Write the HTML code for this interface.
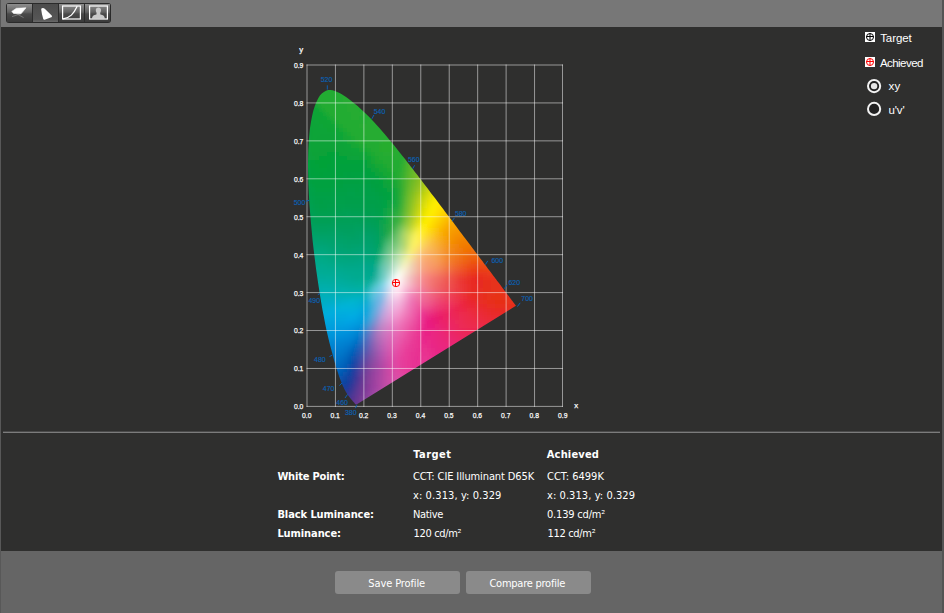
<!DOCTYPE html>
<html><head><meta charset="utf-8"><title>Calibration result</title>
<style>
html,body{margin:0;padding:0}
body{width:944px;height:613px;overflow:hidden;background:#2f2f2e;position:relative;font-family:"Liberation Sans",sans-serif}
.a{position:absolute}
.top{left:0;top:0;width:944px;height:27px;background:#777}
.bot{left:0;top:551px;width:944px;height:62px;background:#656565}
.lb{left:0;top:0;width:1px;height:613px;background:#585858}
.rb{left:942px;top:0;width:2px;height:613px;background:#545454}
.sep{left:3px;top:431px;width:937px;height:1px;background:#4a4a4a}
.sep2{left:3px;top:432px;width:937px;height:1px;background:#7c7c7c}
.t{position:absolute;white-space:pre;color:#fff;line-height:1;transform-origin:0 0}
.tb{font-family:"DejaVu Sans Condensed","Liberation Sans",sans-serif;font-size:11px}
.sg{font-family:"Liberation Sans",sans-serif;font-size:11.5px}
.b{font-weight:bold}
.btn{position:absolute;top:571px;height:23px;width:125px;background:#8a8a8a;border-radius:3px}
</style></head>
<body>
<div class="a top"></div><div class="a bot"></div>
<div class="a sep"></div><div class="a sep2"></div>
<svg class="tbar" width="120" height="27" viewBox="0 0 120 27" style="position:absolute;left:0;top:0">
<defs>
<linearGradient id="bg1" x1="0" y1="0" x2="0" y2="1"><stop offset="0" stop-color="#8e8e8e"/><stop offset=".45" stop-color="#626262"/><stop offset=".55" stop-color="#4a4a4a"/><stop offset="1" stop-color="#3a3a3a"/></linearGradient>
<linearGradient id="bg2" x1="0" y1="0" x2="0" y2="1"><stop offset="0" stop-color="#4c4c4c"/><stop offset=".85" stop-color="#565656"/><stop offset="1" stop-color="#6a6a6a"/></linearGradient>
<clipPath id="tbc"><rect x="6.5" y="3.5" width="104" height="19" rx="2.5"/></clipPath>
</defs>
<rect x="6" y="3" width="105" height="20" rx="3" fill="#2a2a2a"/>
<g clip-path="url(#tbc)">
<rect x="7" y="4" width="103" height="18" fill="url(#bg1)"/>
<rect x="33" y="4" width="26" height="18" fill="url(#bg2)"/>
<path d="M32.5 4V22M58.5 4V22M84.5 4V22" stroke="#2c2c2c" stroke-width="1"/>
</g>
<!-- icon 1: measuring device -->
<path d="M12 16.6L20 14M16.2 13.6L23.6 17.6" stroke="#8a8a8a" stroke-width=".7" fill="none"/>
<path d="M11.8 11.4L16.4 8.3L26 7.8L21 13.8L13.6 13.5Z" fill="#fff" stroke="#fff" stroke-width=".6" stroke-linejoin="round"/>
<!-- icon 2: gamut -->
<path d="M42.3 9.3Q43.2 8.9 44 9.6L50.9 16.3L44.3 18.7Q42.8 14 42.3 9.3Z" fill="#fff" stroke="#fff" stroke-width="2.2" stroke-linejoin="round"/>
<!-- icon 3: curve -->
<rect x="62.6" y="6" width="17.8" height="13" fill="none" stroke="#fff" stroke-width="1.2"/>
<path d="M63 18.8C70 18 73.5 14 77.2 6.2" fill="none" stroke="#fff" stroke-width="1.3"/>
<!-- icon 4: portrait -->
<path d="M92 18.6Q92 15 96.4 14.4L96.6 13Q95.6 11.6 95.8 9.6Q96.2 7.4 98.4 7.4Q100.6 7.4 101 9.6Q101.2 11.6 100.2 13L100.4 14.4Q104.8 15 104.8 18.6Z" fill="#c9c9c9"/>
<rect x="89.6" y="6" width="17.8" height="13" fill="none" stroke="#fff" stroke-width="1.2"/>
</svg>

<svg class="chart" width="944" height="613" viewBox="0 0 944 613" style="position:absolute;left:0;top:0">
<defs><clipPath id="lc"><path d="M356.5 404.5 L356.5 404.5 L356.5 404.5 L356.5 404.5 L356.5 404.5 L356.5 404.5 L356.5 404.5 L356.5 404.5 L356.5 404.5 L356.4 404.5 L356.4 404.5 L356.4 404.5 L356.4 404.5 L356.4 404.5 L356.4 404.5 L356.4 404.5 L356.4 404.5 L356.3 404.6 L356.3 404.6 L356.3 404.6 L356.3 404.6 L356.3 404.6 L356.3 404.6 L356.2 404.6 L356.2 404.6 L356.2 404.6 L356.2 404.6 L356.2 404.6 L356.1 404.6 L356.1 404.6 L356.1 404.6 L356.1 404.6 L356.0 404.6 L356.0 404.6 L356.0 404.6 L355.9 404.6 L355.9 404.6 L355.9 404.5 L355.8 404.5 L355.8 404.5 L355.7 404.5 L355.7 404.4 L355.6 404.4 L355.6 404.3 L355.5 404.3 L355.4 404.2 L355.4 404.1 L355.3 404.1 L355.2 404.0 L355.1 403.9 L355.0 403.8 L354.9 403.7 L354.8 403.6 L354.7 403.4 L354.6 403.3 L354.5 403.1 L354.3 403.0 L354.2 402.8 L354.1 402.6 L353.9 402.5 L353.8 402.3 L353.6 402.1 L353.4 401.9 L353.2 401.6 L353.0 401.4 L352.8 401.2 L352.6 400.9 L352.3 400.6 L352.1 400.3 L351.8 400.0 L351.5 399.7 L351.2 399.3 L350.9 399.0 L350.6 398.6 L350.3 398.2 L349.9 397.8 L349.6 397.3 L349.2 396.8 L348.8 396.3 L348.4 395.8 L348.0 395.1 L347.5 394.5 L347.1 393.8 L346.6 393.1 L346.1 392.2 L345.5 391.3 L345.0 390.2 L344.3 389.0 L343.7 387.6 L343.0 386.2 L342.3 384.5 L341.5 382.6 L340.8 380.7 L339.9 378.5 L339.1 376.2 L338.2 373.5 L337.2 370.5 L336.2 367.4 L335.2 363.9 L334.1 360.2 L333.0 356.1 L331.8 351.6 L330.5 346.8 L329.2 341.7 L327.9 336.2 L326.5 330.3 L325.2 323.9 L323.9 317.1 L322.5 309.9 L321.2 302.4 L319.9 294.5 L318.6 286.2 L317.3 277.4 L316.0 268.4 L314.8 259.1 L313.7 249.9 L312.6 240.5 L311.7 230.8 L310.8 221.1 L310.0 211.5 L309.3 202.2 L308.8 193.0 L308.4 183.9 L308.2 175.0 L308.0 166.3 L308.1 158.0 L308.3 150.1 L308.7 142.4 L309.3 135.0 L310.0 128.1 L311.0 121.8 L312.1 116.1 L313.3 110.8 L314.8 106.1 L316.4 101.9 L318.1 98.4 L319.9 95.6 L321.8 93.5 L323.9 91.9 L326.0 90.8 L328.1 90.1 L330.3 89.9 L332.6 90.3 L334.9 91.0 L337.2 92.0 L339.5 93.0 L341.8 94.2 L344.1 95.7 L346.4 97.3 L348.7 99.0 L351.0 100.7 L353.2 102.5 L355.4 104.2 L357.6 106.1 L359.7 108.0 L361.9 109.9 L364.0 111.9 L366.1 113.9 L368.2 116.0 L370.2 118.1 L372.3 120.3 L374.4 122.5 L376.4 124.7 L378.5 127.0 L380.5 129.3 L382.6 131.7 L384.6 134.0 L386.7 136.4 L388.7 138.9 L390.7 141.3 L392.8 143.8 L394.8 146.3 L396.8 148.8 L398.9 151.4 L400.9 153.9 L402.9 156.5 L405.0 159.1 L407.0 161.7 L409.0 164.3 L411.1 166.9 L413.1 169.5 L415.1 172.2 L417.2 174.8 L419.2 177.5 L421.2 180.1 L423.2 182.8 L425.3 185.4 L427.3 188.1 L429.3 190.7 L431.3 193.4 L433.3 196.0 L435.3 198.6 L437.3 201.3 L439.3 203.9 L441.2 206.5 L443.2 209.1 L445.1 211.7 L447.0 214.2 L449.0 216.8 L450.9 219.3 L452.8 221.8 L454.6 224.3 L456.5 226.8 L458.3 229.2 L460.1 231.7 L461.9 234.0 L463.7 236.4 L465.5 238.7 L467.2 241.0 L468.9 243.3 L470.6 245.5 L472.2 247.7 L473.8 249.8 L475.4 252.0 L477.0 254.0 L478.5 256.0 L479.9 257.9 L481.3 259.8 L482.7 261.6 L484.0 263.4 L485.3 265.1 L486.6 266.8 L487.8 268.5 L489.0 270.1 L490.2 271.6 L491.3 273.1 L492.4 274.5 L493.5 275.9 L494.5 277.2 L495.4 278.5 L496.4 279.7 L497.2 280.9 L498.1 282.0 L498.9 283.1 L499.7 284.1 L500.4 285.1 L501.1 286.1 L501.8 287.0 L502.5 287.9 L503.1 288.7 L503.7 289.5 L504.2 290.2 L504.8 290.9 L505.3 291.6 L505.8 292.2 L506.3 292.9 L506.7 293.5 L507.1 294.1 L507.5 294.6 L507.9 295.1 L508.3 295.6 L508.7 296.1 L509.1 296.6 L509.4 297.1 L509.7 297.5 L510.1 298.0 L510.4 298.4 L510.7 298.8 L511.0 299.1 L511.2 299.5 L511.5 299.9 L511.7 300.2 L512.0 300.5 L512.2 300.8 L512.4 301.1 L512.6 301.3 L512.8 301.6 L513.0 301.8 L513.2 302.1 L513.3 302.3 L513.5 302.5 L513.6 302.7 L513.8 302.9 L513.9 303.0 L514.0 303.2 L514.1 303.3 L514.2 303.5 L514.3 303.6 L514.4 303.8 L514.5 303.9 L514.6 304.0 L514.7 304.1 L514.8 304.2 L514.8 304.3 L514.9 304.3 L514.9 304.4 L515.0 304.5 L515.0 304.6 L515.1 304.6 L515.1 304.7 L515.2 304.7 L515.2 304.8 L515.3 304.9 L515.3 304.9 L515.3 305.0 L515.4 305.0 L515.4 305.1 L515.5 305.1 L515.5 305.2 L515.5 305.2 L515.6 305.3 L515.6 305.3 L515.7 305.4 L515.7 305.4 L515.7 305.5 L515.7 305.5 L515.8 305.5 L515.8 305.6 L515.8 305.6 L515.8 305.6 L515.9 305.7 L515.9 305.7 L515.9 305.7 L515.9 305.7 L515.9 305.7 L515.9 305.7 L515.9 305.7 L515.9 305.8 L515.9 305.8 L515.9 305.8 L515.9 305.8 Z"/></clipPath></defs>
<filter id="bl" filterUnits="userSpaceOnUse" x="295" y="76" width="234" height="342"><feGaussianBlur stdDeviation="2.0"/></filter>
<g clip-path="url(#lc)"><g filter="url(#bl)" shape-rendering="crispEdges">
<path fill="#24ac30" d="M311 80h4v4h-4z"/>
<path fill="#24ac30" d="M315 80h4v4h-4z"/>
<path fill="#24ac30" d="M319 80h4v4h-4z"/>
<path fill="#24ac30" d="M323 80h4v4h-4z"/>
<path fill="#24ac30" d="M327 80h4v4h-4z"/>
<path fill="#24ac30" d="M331 80h4v4h-4z"/>
<path fill="#24ac30" d="M335 80h4v4h-4z"/>
<path fill="#24ac30" d="M339 80h4v4h-4z"/>
<path fill="#24ac30" d="M343 80h4v4h-4z"/>
<path fill="#24ac30" d="M347 80h4v4h-4z"/>
<path fill="#24ac30" d="M307 84h4v4h-4z"/>
<path fill="#24ac30" d="M311 84h4v4h-4z"/>
<path fill="#24ac30" d="M315 84h4v4h-4z"/>
<path fill="#24ac30" d="M319 84h4v4h-4z"/>
<path fill="#24ac30" d="M323 84h4v4h-4z"/>
<path fill="#24ac30" d="M327 84h4v4h-4z"/>
<path fill="#24ac30" d="M331 84h4v4h-4z"/>
<path fill="#24ac30" d="M335 84h4v4h-4z"/>
<path fill="#24ac30" d="M339 84h4v4h-4z"/>
<path fill="#24ac30" d="M343 84h4v4h-4z"/>
<path fill="#24ac30" d="M347 84h4v4h-4z"/>
<path fill="#24ac30" d="M351 84h4v4h-4z"/>
<path fill="#24ac30" d="M307 88h4v4h-4z"/>
<path fill="#24ac30" d="M311 88h4v4h-4z"/>
<path fill="#24ac30" d="M315 88h4v4h-4z"/>
<path fill="#24ac30" d="M319 88h4v4h-4z"/>
<path fill="#24ac30" d="M323 88h4v4h-4z"/>
<path fill="#24ac30" d="M327 88h4v4h-4z"/>
<path fill="#24ac30" d="M331 88h4v4h-4z"/>
<path fill="#24ac30" d="M335 88h4v4h-4z"/>
<path fill="#24ac30" d="M339 88h4v4h-4z"/>
<path fill="#24ac30" d="M343 88h4v4h-4z"/>
<path fill="#24ac30" d="M347 88h4v4h-4z"/>
<path fill="#24ac30" d="M351 88h4v4h-4z"/>
<path fill="#24ac30" d="M355 88h4v4h-4z"/>
<path fill="#24ac30" d="M359 88h4v4h-4z"/>
<path fill="#15a635" d="M303 92h4v4h-4z"/>
<path fill="#24ac30" d="M307 92h4v4h-4z"/>
<path fill="#24ac30" d="M311 92h4v4h-4z"/>
<path fill="#24ac30" d="M315 92h4v4h-4z"/>
<path fill="#24ac30" d="M319 92h4v4h-4z"/>
<path fill="#24ac30" d="M323 92h4v4h-4z"/>
<path fill="#24ac30" d="M327 92h4v4h-4z"/>
<path fill="#24ac30" d="M331 92h4v4h-4z"/>
<path fill="#24ac30" d="M335 92h4v4h-4z"/>
<path fill="#24ac30" d="M339 92h4v4h-4z"/>
<path fill="#24ac30" d="M343 92h4v4h-4z"/>
<path fill="#24ac30" d="M347 92h4v4h-4z"/>
<path fill="#24ac30" d="M351 92h4v4h-4z"/>
<path fill="#24ac30" d="M355 92h4v4h-4z"/>
<path fill="#24ac30" d="M359 92h4v4h-4z"/>
<path fill="#24ac30" d="M363 92h4v4h-4z"/>
<path fill="#11a437" d="M303 96h4v4h-4z"/>
<path fill="#15a635" d="M307 96h4v4h-4z"/>
<path fill="#24ac30" d="M311 96h4v4h-4z"/>
<path fill="#24ac30" d="M315 96h4v4h-4z"/>
<path fill="#24ac30" d="M319 96h4v4h-4z"/>
<path fill="#24ac30" d="M323 96h4v4h-4z"/>
<path fill="#24ac30" d="M327 96h4v4h-4z"/>
<path fill="#24ac30" d="M331 96h4v4h-4z"/>
<path fill="#24ac30" d="M335 96h4v4h-4z"/>
<path fill="#24ac30" d="M339 96h4v4h-4z"/>
<path fill="#25ac30" d="M343 96h4v4h-4z"/>
<path fill="#25ac30" d="M347 96h4v4h-4z"/>
<path fill="#24ac30" d="M351 96h4v4h-4z"/>
<path fill="#24ac30" d="M355 96h4v4h-4z"/>
<path fill="#24ac30" d="M359 96h4v4h-4z"/>
<path fill="#24ac30" d="M363 96h4v4h-4z"/>
<path fill="#24ac30" d="M367 96h4v4h-4z"/>
<path fill="#10a438" d="M303 100h4v4h-4z"/>
<path fill="#11a436" d="M307 100h4v4h-4z"/>
<path fill="#15a634" d="M311 100h4v4h-4z"/>
<path fill="#23ac30" d="M315 100h4v4h-4z"/>
<path fill="#23ac30" d="M319 100h4v4h-4z"/>
<path fill="#23ac30" d="M323 100h4v4h-4z"/>
<path fill="#23ac30" d="M327 100h4v4h-4z"/>
<path fill="#24ac30" d="M331 100h4v4h-4z"/>
<path fill="#24ac30" d="M335 100h4v4h-4z"/>
<path fill="#24ac30" d="M339 100h4v4h-4z"/>
<path fill="#25ac30" d="M343 100h4v4h-4z"/>
<path fill="#25ac30" d="M347 100h4v4h-4z"/>
<path fill="#25ac30" d="M351 100h4v4h-4z"/>
<path fill="#24ac30" d="M355 100h4v4h-4z"/>
<path fill="#24ac30" d="M359 100h4v4h-4z"/>
<path fill="#24ac30" d="M363 100h4v4h-4z"/>
<path fill="#24ac30" d="M367 100h4v4h-4z"/>
<path fill="#24ac30" d="M371 100h4v4h-4z"/>
<path fill="#0fa438" d="M303 104h4v4h-4z"/>
<path fill="#10a437" d="M307 104h4v4h-4z"/>
<path fill="#11a536" d="M311 104h4v4h-4z"/>
<path fill="#15a634" d="M315 104h4v4h-4z"/>
<path fill="#22ac30" d="M319 104h4v4h-4z"/>
<path fill="#23ac30" d="M323 104h4v4h-4z"/>
<path fill="#23ac30" d="M327 104h4v4h-4z"/>
<path fill="#23ac30" d="M331 104h4v4h-4z"/>
<path fill="#24ac30" d="M335 104h4v4h-4z"/>
<path fill="#24ac30" d="M339 104h4v4h-4z"/>
<path fill="#24ac30" d="M343 104h4v4h-4z"/>
<path fill="#25ac30" d="M347 104h4v4h-4z"/>
<path fill="#25ac30" d="M351 104h4v4h-4z"/>
<path fill="#25ac30" d="M355 104h4v4h-4z"/>
<path fill="#24ac30" d="M359 104h4v4h-4z"/>
<path fill="#24ac30" d="M363 104h4v4h-4z"/>
<path fill="#24ac30" d="M367 104h4v4h-4z"/>
<path fill="#24ac30" d="M371 104h4v4h-4z"/>
<path fill="#23ac30" d="M375 104h4v4h-4z"/>
<path fill="#0da33b" d="M299 108h4v4h-4z"/>
<path fill="#0ea339" d="M303 108h4v4h-4z"/>
<path fill="#0fa438" d="M307 108h4v4h-4z"/>
<path fill="#10a536" d="M311 108h4v4h-4z"/>
<path fill="#11a535" d="M315 108h4v4h-4z"/>
<path fill="#15a734" d="M319 108h4v4h-4z"/>
<path fill="#22ac30" d="M323 108h4v4h-4z"/>
<path fill="#22ac31" d="M327 108h4v4h-4z"/>
<path fill="#22ac31" d="M331 108h4v4h-4z"/>
<path fill="#23ac30" d="M335 108h4v4h-4z"/>
<path fill="#24ac30" d="M339 108h4v4h-4z"/>
<path fill="#24ac30" d="M343 108h4v4h-4z"/>
<path fill="#25ac30" d="M347 108h4v4h-4z"/>
<path fill="#25ac30" d="M351 108h4v4h-4z"/>
<path fill="#25ac30" d="M355 108h4v4h-4z"/>
<path fill="#24ac30" d="M359 108h4v4h-4z"/>
<path fill="#24ac30" d="M363 108h4v4h-4z"/>
<path fill="#24ac30" d="M367 108h4v4h-4z"/>
<path fill="#24ac30" d="M371 108h4v4h-4z"/>
<path fill="#24ac30" d="M375 108h4v4h-4z"/>
<path fill="#23ac30" d="M379 108h4v4h-4z"/>
<path fill="#0ca33b" d="M299 112h4v4h-4z"/>
<path fill="#0da33a" d="M303 112h4v4h-4z"/>
<path fill="#0ea438" d="M307 112h4v4h-4z"/>
<path fill="#0fa537" d="M311 112h4v4h-4z"/>
<path fill="#10a536" d="M315 112h4v4h-4z"/>
<path fill="#11a535" d="M319 112h4v4h-4z"/>
<path fill="#15a734" d="M323 112h4v4h-4z"/>
<path fill="#21ac31" d="M327 112h4v4h-4z"/>
<path fill="#21ac31" d="M331 112h4v4h-4z"/>
<path fill="#22ac31" d="M335 112h4v4h-4z"/>
<path fill="#23ac31" d="M339 112h4v4h-4z"/>
<path fill="#24ac30" d="M343 112h4v4h-4z"/>
<path fill="#24ac30" d="M347 112h4v4h-4z"/>
<path fill="#25ac30" d="M351 112h4v4h-4z"/>
<path fill="#25ac30" d="M355 112h4v4h-4z"/>
<path fill="#25ac30" d="M359 112h4v4h-4z"/>
<path fill="#24ac30" d="M363 112h4v4h-4z"/>
<path fill="#24ac30" d="M367 112h4v4h-4z"/>
<path fill="#24ac30" d="M371 112h4v4h-4z"/>
<path fill="#24ac30" d="M375 112h4v4h-4z"/>
<path fill="#24ac30" d="M379 112h4v4h-4z"/>
<path fill="#23ac30" d="M383 112h4v4h-4z"/>
<path fill="#0ba23c" d="M299 116h4v4h-4z"/>
<path fill="#0ca33a" d="M303 116h4v4h-4z"/>
<path fill="#0da439" d="M307 116h4v4h-4z"/>
<path fill="#0ea437" d="M311 116h4v4h-4z"/>
<path fill="#0fa536" d="M315 116h4v4h-4z"/>
<path fill="#10a535" d="M319 116h4v4h-4z"/>
<path fill="#11a635" d="M323 116h4v4h-4z"/>
<path fill="#14a734" d="M327 116h4v4h-4z"/>
<path fill="#20ac31" d="M331 116h4v4h-4z"/>
<path fill="#21ac31" d="M335 116h4v4h-4z"/>
<path fill="#22ac31" d="M339 116h4v4h-4z"/>
<path fill="#23ac30" d="M343 116h4v4h-4z"/>
<path fill="#24ac30" d="M347 116h4v4h-4z"/>
<path fill="#25ac30" d="M351 116h4v4h-4z"/>
<path fill="#25ac30" d="M355 116h4v4h-4z"/>
<path fill="#24ac30" d="M359 116h4v4h-4z"/>
<path fill="#24ac30" d="M363 116h4v4h-4z"/>
<path fill="#24ac30" d="M367 116h4v4h-4z"/>
<path fill="#24ac30" d="M371 116h4v4h-4z"/>
<path fill="#24ac30" d="M375 116h4v4h-4z"/>
<path fill="#24ac30" d="M379 116h4v4h-4z"/>
<path fill="#24ac30" d="M383 116h4v4h-4z"/>
<path fill="#23ac30" d="M387 116h4v4h-4z"/>
<path fill="#0aa23d" d="M299 120h4v4h-4z"/>
<path fill="#0ba33b" d="M303 120h4v4h-4z"/>
<path fill="#0ca439" d="M307 120h4v4h-4z"/>
<path fill="#0da438" d="M311 120h4v4h-4z"/>
<path fill="#0ea537" d="M315 120h4v4h-4z"/>
<path fill="#0ea536" d="M319 120h4v4h-4z"/>
<path fill="#0fa535" d="M323 120h4v4h-4z"/>
<path fill="#11a635" d="M327 120h4v4h-4z"/>
<path fill="#14a735" d="M331 120h4v4h-4z"/>
<path fill="#1fab32" d="M335 120h4v4h-4z"/>
<path fill="#20ac32" d="M339 120h4v4h-4z"/>
<path fill="#22ac31" d="M343 120h4v4h-4z"/>
<path fill="#23ac30" d="M347 120h4v4h-4z"/>
<path fill="#24ac30" d="M351 120h4v4h-4z"/>
<path fill="#24ac30" d="M355 120h4v4h-4z"/>
<path fill="#24ac30" d="M359 120h4v4h-4z"/>
<path fill="#24ac30" d="M363 120h4v4h-4z"/>
<path fill="#25ac30" d="M367 120h4v4h-4z"/>
<path fill="#25ac30" d="M371 120h4v4h-4z"/>
<path fill="#25ac30" d="M375 120h4v4h-4z"/>
<path fill="#24ac30" d="M379 120h4v4h-4z"/>
<path fill="#24ac30" d="M383 120h4v4h-4z"/>
<path fill="#24ac30" d="M387 120h4v4h-4z"/>
<path fill="#23ac30" d="M391 120h4v4h-4z"/>
<path fill="#0aa23e" d="M299 124h4v4h-4z"/>
<path fill="#0ba33b" d="M303 124h4v4h-4z"/>
<path fill="#0ca439" d="M307 124h4v4h-4z"/>
<path fill="#0da438" d="M311 124h4v4h-4z"/>
<path fill="#0da437" d="M315 124h4v4h-4z"/>
<path fill="#0da537" d="M319 124h4v4h-4z"/>
<path fill="#0ea536" d="M323 124h4v4h-4z"/>
<path fill="#0fa536" d="M327 124h4v4h-4z"/>
<path fill="#11a536" d="M331 124h4v4h-4z"/>
<path fill="#14a735" d="M335 124h4v4h-4z"/>
<path fill="#1fab32" d="M339 124h4v4h-4z"/>
<path fill="#20ab32" d="M343 124h4v4h-4z"/>
<path fill="#22ac31" d="M347 124h4v4h-4z"/>
<path fill="#23ac30" d="M351 124h4v4h-4z"/>
<path fill="#24ac30" d="M355 124h4v4h-4z"/>
<path fill="#25ac30" d="M359 124h4v4h-4z"/>
<path fill="#25ac30" d="M363 124h4v4h-4z"/>
<path fill="#25ac30" d="M367 124h4v4h-4z"/>
<path fill="#25ac30" d="M371 124h4v4h-4z"/>
<path fill="#25ac30" d="M375 124h4v4h-4z"/>
<path fill="#25ac30" d="M379 124h4v4h-4z"/>
<path fill="#24ac30" d="M383 124h4v4h-4z"/>
<path fill="#24ac30" d="M387 124h4v4h-4z"/>
<path fill="#24ac30" d="M391 124h4v4h-4z"/>
<path fill="#23ac30" d="M395 124h4v4h-4z"/>
<path fill="#09a23f" d="M299 128h4v4h-4z"/>
<path fill="#0aa33c" d="M303 128h4v4h-4z"/>
<path fill="#0ba33a" d="M307 128h4v4h-4z"/>
<path fill="#0ca438" d="M311 128h4v4h-4z"/>
<path fill="#0ca437" d="M315 128h4v4h-4z"/>
<path fill="#0ca437" d="M319 128h4v4h-4z"/>
<path fill="#0ca437" d="M323 128h4v4h-4z"/>
<path fill="#0da436" d="M327 128h4v4h-4z"/>
<path fill="#0ea536" d="M331 128h4v4h-4z"/>
<path fill="#11a536" d="M335 128h4v4h-4z"/>
<path fill="#15a735" d="M339 128h4v4h-4z"/>
<path fill="#1eab32" d="M343 128h4v4h-4z"/>
<path fill="#20ab32" d="M347 128h4v4h-4z"/>
<path fill="#22ac31" d="M351 128h4v4h-4z"/>
<path fill="#23ac30" d="M355 128h4v4h-4z"/>
<path fill="#24ac30" d="M359 128h4v4h-4z"/>
<path fill="#25ac30" d="M363 128h4v4h-4z"/>
<path fill="#25ac30" d="M367 128h4v4h-4z"/>
<path fill="#25ac30" d="M371 128h4v4h-4z"/>
<path fill="#25ac30" d="M375 128h4v4h-4z"/>
<path fill="#25ac30" d="M379 128h4v4h-4z"/>
<path fill="#25ac30" d="M383 128h4v4h-4z"/>
<path fill="#24ac30" d="M387 128h4v4h-4z"/>
<path fill="#24ac30" d="M391 128h4v4h-4z"/>
<path fill="#24ac30" d="M395 128h4v4h-4z"/>
<path fill="#09a240" d="M299 132h4v4h-4z"/>
<path fill="#0aa33c" d="M303 132h4v4h-4z"/>
<path fill="#0ba33a" d="M307 132h4v4h-4z"/>
<path fill="#0ca438" d="M311 132h4v4h-4z"/>
<path fill="#0ca437" d="M315 132h4v4h-4z"/>
<path fill="#0ca437" d="M319 132h4v4h-4z"/>
<path fill="#0ba437" d="M323 132h4v4h-4z"/>
<path fill="#0ba437" d="M327 132h4v4h-4z"/>
<path fill="#0ca437" d="M331 132h4v4h-4z"/>
<path fill="#0ea537" d="M335 132h4v4h-4z"/>
<path fill="#11a636" d="M339 132h4v4h-4z"/>
<path fill="#16a735" d="M343 132h4v4h-4z"/>
<path fill="#1eab32" d="M347 132h4v4h-4z"/>
<path fill="#20ab32" d="M351 132h4v4h-4z"/>
<path fill="#22ac31" d="M355 132h4v4h-4z"/>
<path fill="#24ac30" d="M359 132h4v4h-4z"/>
<path fill="#25ac30" d="M363 132h4v4h-4z"/>
<path fill="#25ac30" d="M367 132h4v4h-4z"/>
<path fill="#25ac30" d="M371 132h4v4h-4z"/>
<path fill="#25ac30" d="M375 132h4v4h-4z"/>
<path fill="#25ac30" d="M379 132h4v4h-4z"/>
<path fill="#25ac30" d="M383 132h4v4h-4z"/>
<path fill="#25ac30" d="M387 132h4v4h-4z"/>
<path fill="#24ac30" d="M391 132h4v4h-4z"/>
<path fill="#24ac30" d="M395 132h4v4h-4z"/>
<path fill="#23ac30" d="M399 132h4v4h-4z"/>
<path fill="#08a240" d="M299 136h4v4h-4z"/>
<path fill="#0aa33d" d="M303 136h4v4h-4z"/>
<path fill="#0ba33a" d="M307 136h4v4h-4z"/>
<path fill="#0ca438" d="M311 136h4v4h-4z"/>
<path fill="#0ba437" d="M315 136h4v4h-4z"/>
<path fill="#0ba338" d="M319 136h4v4h-4z"/>
<path fill="#0aa338" d="M323 136h4v4h-4z"/>
<path fill="#09a338" d="M327 136h4v4h-4z"/>
<path fill="#0aa338" d="M331 136h4v4h-4z"/>
<path fill="#0ba438" d="M335 136h4v4h-4z"/>
<path fill="#0ea537" d="M339 136h4v4h-4z"/>
<path fill="#12a636" d="M343 136h4v4h-4z"/>
<path fill="#16a735" d="M347 136h4v4h-4z"/>
<path fill="#1eab32" d="M351 136h4v4h-4z"/>
<path fill="#20ab31" d="M355 136h4v4h-4z"/>
<path fill="#23ac31" d="M359 136h4v4h-4z"/>
<path fill="#24ac30" d="M363 136h4v4h-4z"/>
<path fill="#25ac30" d="M367 136h4v4h-4z"/>
<path fill="#25ac30" d="M371 136h4v4h-4z"/>
<path fill="#25ac30" d="M375 136h4v4h-4z"/>
<path fill="#25ac30" d="M379 136h4v4h-4z"/>
<path fill="#25ac30" d="M383 136h4v4h-4z"/>
<path fill="#25ac30" d="M387 136h4v4h-4z"/>
<path fill="#25ac30" d="M391 136h4v4h-4z"/>
<path fill="#24ac30" d="M395 136h4v4h-4z"/>
<path fill="#24ac30" d="M399 136h4v4h-4z"/>
<path fill="#23ac30" d="M403 136h4v4h-4z"/>
<path fill="#08a241" d="M299 140h4v4h-4z"/>
<path fill="#09a23d" d="M303 140h4v4h-4z"/>
<path fill="#0ba33a" d="M307 140h4v4h-4z"/>
<path fill="#0ba438" d="M311 140h4v4h-4z"/>
<path fill="#0ba337" d="M315 140h4v4h-4z"/>
<path fill="#0aa338" d="M319 140h4v4h-4z"/>
<path fill="#09a338" d="M323 140h4v4h-4z"/>
<path fill="#08a339" d="M327 140h4v4h-4z"/>
<path fill="#08a339" d="M331 140h4v4h-4z"/>
<path fill="#09a339" d="M335 140h4v4h-4z"/>
<path fill="#0ca438" d="M339 140h4v4h-4z"/>
<path fill="#0fa537" d="M343 140h4v4h-4z"/>
<path fill="#12a636" d="M347 140h4v4h-4z"/>
<path fill="#15a735" d="M351 140h4v4h-4z"/>
<path fill="#1daa32" d="M355 140h4v4h-4z"/>
<path fill="#20ab31" d="M359 140h4v4h-4z"/>
<path fill="#22ab31" d="M363 140h4v4h-4z"/>
<path fill="#23ac30" d="M367 140h4v4h-4z"/>
<path fill="#24ac30" d="M371 140h4v4h-4z"/>
<path fill="#24ac30" d="M375 140h4v4h-4z"/>
<path fill="#25ac30" d="M379 140h4v4h-4z"/>
<path fill="#26ad2f" d="M383 140h4v4h-4z"/>
<path fill="#26ad2f" d="M387 140h4v4h-4z"/>
<path fill="#25ac30" d="M391 140h4v4h-4z"/>
<path fill="#25ac30" d="M395 140h4v4h-4z"/>
<path fill="#24ac30" d="M399 140h4v4h-4z"/>
<path fill="#23ac30" d="M403 140h4v4h-4z"/>
<path fill="#24ac30" d="M407 140h4v4h-4z"/>
<path fill="#07a241" d="M299 144h4v4h-4z"/>
<path fill="#09a23e" d="M303 144h4v4h-4z"/>
<path fill="#0aa33b" d="M307 144h4v4h-4z"/>
<path fill="#0aa338" d="M311 144h4v4h-4z"/>
<path fill="#0aa337" d="M315 144h4v4h-4z"/>
<path fill="#09a338" d="M319 144h4v4h-4z"/>
<path fill="#08a338" d="M323 144h4v4h-4z"/>
<path fill="#07a339" d="M327 144h4v4h-4z"/>
<path fill="#07a339" d="M331 144h4v4h-4z"/>
<path fill="#08a339" d="M335 144h4v4h-4z"/>
<path fill="#0aa338" d="M339 144h4v4h-4z"/>
<path fill="#0da438" d="M343 144h4v4h-4z"/>
<path fill="#10a537" d="M347 144h4v4h-4z"/>
<path fill="#12a636" d="M351 144h4v4h-4z"/>
<path fill="#14a735" d="M355 144h4v4h-4z"/>
<path fill="#1caa33" d="M359 144h4v4h-4z"/>
<path fill="#1eaa32" d="M363 144h4v4h-4z"/>
<path fill="#20ab31" d="M367 144h4v4h-4z"/>
<path fill="#22ab30" d="M371 144h4v4h-4z"/>
<path fill="#24ac30" d="M375 144h4v4h-4z"/>
<path fill="#26ac2f" d="M379 144h4v4h-4z"/>
<path fill="#26ad2f" d="M383 144h4v4h-4z"/>
<path fill="#26ad2f" d="M387 144h4v4h-4z"/>
<path fill="#25ac2f" d="M391 144h4v4h-4z"/>
<path fill="#25ac30" d="M395 144h4v4h-4z"/>
<path fill="#24ac30" d="M399 144h4v4h-4z"/>
<path fill="#24ac30" d="M403 144h4v4h-4z"/>
<path fill="#2dae30" d="M407 144h4v4h-4z"/>
<path fill="#56b52c" d="M411 144h4v4h-4z"/>
<path fill="#07a242" d="M299 148h4v4h-4z"/>
<path fill="#08a23e" d="M303 148h4v4h-4z"/>
<path fill="#09a33b" d="M307 148h4v4h-4z"/>
<path fill="#09a339" d="M311 148h4v4h-4z"/>
<path fill="#09a338" d="M315 148h4v4h-4z"/>
<path fill="#08a238" d="M319 148h4v4h-4z"/>
<path fill="#07a238" d="M323 148h4v4h-4z"/>
<path fill="#07a239" d="M327 148h4v4h-4z"/>
<path fill="#07a239" d="M331 148h4v4h-4z"/>
<path fill="#07a239" d="M335 148h4v4h-4z"/>
<path fill="#08a339" d="M339 148h4v4h-4z"/>
<path fill="#0aa439" d="M343 148h4v4h-4z"/>
<path fill="#0da438" d="M347 148h4v4h-4z"/>
<path fill="#0ea537" d="M351 148h4v4h-4z"/>
<path fill="#0fa537" d="M355 148h4v4h-4z"/>
<path fill="#12a635" d="M359 148h4v4h-4z"/>
<path fill="#19a933" d="M363 148h4v4h-4z"/>
<path fill="#1caa32" d="M367 148h4v4h-4z"/>
<path fill="#20ab31" d="M371 148h4v4h-4z"/>
<path fill="#24ac30" d="M375 148h4v4h-4z"/>
<path fill="#25ac2f" d="M379 148h4v4h-4z"/>
<path fill="#26ad2f" d="M383 148h4v4h-4z"/>
<path fill="#26ad2f" d="M387 148h4v4h-4z"/>
<path fill="#25ac2f" d="M391 148h4v4h-4z"/>
<path fill="#25ac30" d="M395 148h4v4h-4z"/>
<path fill="#24ac30" d="M399 148h4v4h-4z"/>
<path fill="#24ac30" d="M403 148h4v4h-4z"/>
<path fill="#3bb02f" d="M407 148h4v4h-4z"/>
<path fill="#58b62c" d="M411 148h4v4h-4z"/>
<path fill="#06a142" d="M299 152h4v4h-4z"/>
<path fill="#07a23f" d="M303 152h4v4h-4z"/>
<path fill="#08a23c" d="M307 152h4v4h-4z"/>
<path fill="#08a239" d="M311 152h4v4h-4z"/>
<path fill="#08a238" d="M315 152h4v4h-4z"/>
<path fill="#07a238" d="M319 152h4v4h-4z"/>
<path fill="#07a238" d="M323 152h4v4h-4z"/>
<path fill="#06a239" d="M327 152h4v4h-4z"/>
<path fill="#06a239" d="M331 152h4v4h-4z"/>
<path fill="#06a239" d="M335 152h4v4h-4z"/>
<path fill="#07a239" d="M339 152h4v4h-4z"/>
<path fill="#08a339" d="M343 152h4v4h-4z"/>
<path fill="#09a339" d="M347 152h4v4h-4z"/>
<path fill="#0ba439" d="M351 152h4v4h-4z"/>
<path fill="#0ba438" d="M355 152h4v4h-4z"/>
<path fill="#0ca437" d="M359 152h4v4h-4z"/>
<path fill="#0fa536" d="M363 152h4v4h-4z"/>
<path fill="#18a834" d="M367 152h4v4h-4z"/>
<path fill="#1daa32" d="M371 152h4v4h-4z"/>
<path fill="#22ab31" d="M375 152h4v4h-4z"/>
<path fill="#24ac30" d="M379 152h4v4h-4z"/>
<path fill="#25ac30" d="M383 152h4v4h-4z"/>
<path fill="#25ac30" d="M387 152h4v4h-4z"/>
<path fill="#25ac30" d="M391 152h4v4h-4z"/>
<path fill="#25ac30" d="M395 152h4v4h-4z"/>
<path fill="#24ac30" d="M399 152h4v4h-4z"/>
<path fill="#26ac30" d="M403 152h4v4h-4z"/>
<path fill="#48b22e" d="M407 152h4v4h-4z"/>
<path fill="#5ab62b" d="M411 152h4v4h-4z"/>
<path fill="#68b929" d="M415 152h4v4h-4z"/>
<path fill="#06a143" d="M299 156h4v4h-4z"/>
<path fill="#07a240" d="M303 156h4v4h-4z"/>
<path fill="#07a23c" d="M307 156h4v4h-4z"/>
<path fill="#07a23a" d="M311 156h4v4h-4z"/>
<path fill="#07a238" d="M315 156h4v4h-4z"/>
<path fill="#06a238" d="M319 156h4v4h-4z"/>
<path fill="#06a238" d="M323 156h4v4h-4z"/>
<path fill="#06a239" d="M327 156h4v4h-4z"/>
<path fill="#06a23a" d="M331 156h4v4h-4z"/>
<path fill="#06a23a" d="M335 156h4v4h-4z"/>
<path fill="#06a23a" d="M339 156h4v4h-4z"/>
<path fill="#06a23a" d="M343 156h4v4h-4z"/>
<path fill="#07a23a" d="M347 156h4v4h-4z"/>
<path fill="#08a33a" d="M351 156h4v4h-4z"/>
<path fill="#07a33a" d="M355 156h4v4h-4z"/>
<path fill="#07a339" d="M359 156h4v4h-4z"/>
<path fill="#0aa438" d="M363 156h4v4h-4z"/>
<path fill="#10a636" d="M367 156h4v4h-4z"/>
<path fill="#19a934" d="M371 156h4v4h-4z"/>
<path fill="#1faa32" d="M375 156h4v4h-4z"/>
<path fill="#22ab31" d="M379 156h4v4h-4z"/>
<path fill="#23ac30" d="M383 156h4v4h-4z"/>
<path fill="#24ac30" d="M387 156h4v4h-4z"/>
<path fill="#24ac30" d="M391 156h4v4h-4z"/>
<path fill="#25ac30" d="M395 156h4v4h-4z"/>
<path fill="#24ac30" d="M399 156h4v4h-4z"/>
<path fill="#2dad30" d="M403 156h4v4h-4z"/>
<path fill="#4db32d" d="M407 156h4v4h-4z"/>
<path fill="#5db72b" d="M411 156h4v4h-4z"/>
<path fill="#6bb928" d="M415 156h4v4h-4z"/>
<path fill="#7abc26" d="M419 156h4v4h-4z"/>
<path fill="#05a144" d="M299 160h4v4h-4z"/>
<path fill="#06a240" d="M303 160h4v4h-4z"/>
<path fill="#06a23d" d="M307 160h4v4h-4z"/>
<path fill="#06a23a" d="M311 160h4v4h-4z"/>
<path fill="#06a239" d="M315 160h4v4h-4z"/>
<path fill="#06a239" d="M319 160h4v4h-4z"/>
<path fill="#05a238" d="M323 160h4v4h-4z"/>
<path fill="#05a239" d="M327 160h4v4h-4z"/>
<path fill="#05a23a" d="M331 160h4v4h-4z"/>
<path fill="#05a23b" d="M335 160h4v4h-4z"/>
<path fill="#05a23b" d="M339 160h4v4h-4z"/>
<path fill="#04a23b" d="M343 160h4v4h-4z"/>
<path fill="#04a23b" d="M347 160h4v4h-4z"/>
<path fill="#04a23b" d="M351 160h4v4h-4z"/>
<path fill="#04a23b" d="M355 160h4v4h-4z"/>
<path fill="#04a23b" d="M359 160h4v4h-4z"/>
<path fill="#05a33a" d="M363 160h4v4h-4z"/>
<path fill="#0ba438" d="M367 160h4v4h-4z"/>
<path fill="#12a636" d="M371 160h4v4h-4z"/>
<path fill="#1aa933" d="M375 160h4v4h-4z"/>
<path fill="#1eaa32" d="M379 160h4v4h-4z"/>
<path fill="#20ab31" d="M383 160h4v4h-4z"/>
<path fill="#22ab30" d="M387 160h4v4h-4z"/>
<path fill="#23ac30" d="M391 160h4v4h-4z"/>
<path fill="#24ac30" d="M395 160h4v4h-4z"/>
<path fill="#25ac30" d="M399 160h4v4h-4z"/>
<path fill="#35af30" d="M403 160h4v4h-4z"/>
<path fill="#50b42d" d="M407 160h4v4h-4z"/>
<path fill="#5fb72a" d="M411 160h4v4h-4z"/>
<path fill="#6eba28" d="M415 160h4v4h-4z"/>
<path fill="#7dbd25" d="M419 160h4v4h-4z"/>
<path fill="#8ec221" d="M423 160h4v4h-4z"/>
<path fill="#04a146" d="M299 164h4v4h-4z"/>
<path fill="#05a142" d="M303 164h4v4h-4z"/>
<path fill="#05a23e" d="M307 164h4v4h-4z"/>
<path fill="#05a23b" d="M311 164h4v4h-4z"/>
<path fill="#05a23a" d="M315 164h4v4h-4z"/>
<path fill="#05a239" d="M319 164h4v4h-4z"/>
<path fill="#05a239" d="M323 164h4v4h-4z"/>
<path fill="#04a13a" d="M327 164h4v4h-4z"/>
<path fill="#04a23b" d="M331 164h4v4h-4z"/>
<path fill="#04a23b" d="M335 164h4v4h-4z"/>
<path fill="#04a13c" d="M339 164h4v4h-4z"/>
<path fill="#03a13c" d="M343 164h4v4h-4z"/>
<path fill="#02a13c" d="M347 164h4v4h-4z"/>
<path fill="#02a13d" d="M351 164h4v4h-4z"/>
<path fill="#02a13d" d="M355 164h4v4h-4z"/>
<path fill="#02a13d" d="M359 164h4v4h-4z"/>
<path fill="#03a23c" d="M363 164h4v4h-4z"/>
<path fill="#07a33a" d="M367 164h4v4h-4z"/>
<path fill="#0da538" d="M371 164h4v4h-4z"/>
<path fill="#12a736" d="M375 164h4v4h-4z"/>
<path fill="#18a834" d="M379 164h4v4h-4z"/>
<path fill="#1ca932" d="M383 164h4v4h-4z"/>
<path fill="#20aa31" d="M387 164h4v4h-4z"/>
<path fill="#22ab30" d="M391 164h4v4h-4z"/>
<path fill="#24ac30" d="M395 164h4v4h-4z"/>
<path fill="#27ac30" d="M399 164h4v4h-4z"/>
<path fill="#3cb02f" d="M403 164h4v4h-4z"/>
<path fill="#53b42c" d="M407 164h4v4h-4z"/>
<path fill="#62b72a" d="M411 164h4v4h-4z"/>
<path fill="#71ba27" d="M415 164h4v4h-4z"/>
<path fill="#81be24" d="M419 164h4v4h-4z"/>
<path fill="#93c320" d="M423 164h4v4h-4z"/>
<path fill="#a4c81b" d="M427 164h4v4h-4z"/>
<path fill="#03a147" d="M299 168h4v4h-4z"/>
<path fill="#04a143" d="M303 168h4v4h-4z"/>
<path fill="#04a13f" d="M307 168h4v4h-4z"/>
<path fill="#04a13c" d="M311 168h4v4h-4z"/>
<path fill="#04a23b" d="M315 168h4v4h-4z"/>
<path fill="#04a23a" d="M319 168h4v4h-4z"/>
<path fill="#04a23a" d="M323 168h4v4h-4z"/>
<path fill="#04a13b" d="M327 168h4v4h-4z"/>
<path fill="#04a13c" d="M331 168h4v4h-4z"/>
<path fill="#03a13c" d="M335 168h4v4h-4z"/>
<path fill="#03a13d" d="M339 168h4v4h-4z"/>
<path fill="#02a13d" d="M343 168h4v4h-4z"/>
<path fill="#01a13d" d="M347 168h4v4h-4z"/>
<path fill="#01a13e" d="M351 168h4v4h-4z"/>
<path fill="#01a13e" d="M355 168h4v4h-4z"/>
<path fill="#01a13e" d="M359 168h4v4h-4z"/>
<path fill="#01a13d" d="M363 168h4v4h-4z"/>
<path fill="#04a23c" d="M367 168h4v4h-4z"/>
<path fill="#08a33a" d="M371 168h4v4h-4z"/>
<path fill="#0da538" d="M375 168h4v4h-4z"/>
<path fill="#12a736" d="M379 168h4v4h-4z"/>
<path fill="#18a834" d="M383 168h4v4h-4z"/>
<path fill="#1da932" d="M387 168h4v4h-4z"/>
<path fill="#21ab31" d="M391 168h4v4h-4z"/>
<path fill="#24ac30" d="M395 168h4v4h-4z"/>
<path fill="#2aad30" d="M399 168h4v4h-4z"/>
<path fill="#3eb02f" d="M403 168h4v4h-4z"/>
<path fill="#55b52c" d="M407 168h4v4h-4z"/>
<path fill="#65b829" d="M411 168h4v4h-4z"/>
<path fill="#74bb27" d="M415 168h4v4h-4z"/>
<path fill="#85bf23" d="M419 168h4v4h-4z"/>
<path fill="#97c41e" d="M423 168h4v4h-4z"/>
<path fill="#a9ca1a" d="M427 168h4v4h-4z"/>
<path fill="#02a149" d="M299 172h4v4h-4z"/>
<path fill="#03a145" d="M303 172h4v4h-4z"/>
<path fill="#03a141" d="M307 172h4v4h-4z"/>
<path fill="#03a13e" d="M311 172h4v4h-4z"/>
<path fill="#04a13c" d="M315 172h4v4h-4z"/>
<path fill="#04a13b" d="M319 172h4v4h-4z"/>
<path fill="#04a13c" d="M323 172h4v4h-4z"/>
<path fill="#03a13c" d="M327 172h4v4h-4z"/>
<path fill="#03a13d" d="M331 172h4v4h-4z"/>
<path fill="#02a13e" d="M335 172h4v4h-4z"/>
<path fill="#02a13e" d="M339 172h4v4h-4z"/>
<path fill="#01a13f" d="M343 172h4v4h-4z"/>
<path fill="#00a03f" d="M347 172h4v4h-4z"/>
<path fill="#00a13f" d="M351 172h4v4h-4z"/>
<path fill="#00a13f" d="M355 172h4v4h-4z"/>
<path fill="#00a13f" d="M359 172h4v4h-4z"/>
<path fill="#00a13f" d="M363 172h4v4h-4z"/>
<path fill="#02a13e" d="M367 172h4v4h-4z"/>
<path fill="#04a23c" d="M371 172h4v4h-4z"/>
<path fill="#08a33a" d="M375 172h4v4h-4z"/>
<path fill="#0da538" d="M379 172h4v4h-4z"/>
<path fill="#13a636" d="M383 172h4v4h-4z"/>
<path fill="#19a833" d="M387 172h4v4h-4z"/>
<path fill="#1faa31" d="M391 172h4v4h-4z"/>
<path fill="#23ab30" d="M395 172h4v4h-4z"/>
<path fill="#2dad31" d="M399 172h4v4h-4z"/>
<path fill="#41b12f" d="M403 172h4v4h-4z"/>
<path fill="#59b62c" d="M407 172h4v4h-4z"/>
<path fill="#69b929" d="M411 172h4v4h-4z"/>
<path fill="#78bc26" d="M415 172h4v4h-4z"/>
<path fill="#8ac022" d="M419 172h4v4h-4z"/>
<path fill="#9cc51d" d="M423 172h4v4h-4z"/>
<path fill="#afcc18" d="M427 172h4v4h-4z"/>
<path fill="#c1d313" d="M431 172h4v4h-4z"/>
<path fill="#01a14b" d="M299 176h4v4h-4z"/>
<path fill="#02a147" d="M303 176h4v4h-4z"/>
<path fill="#02a142" d="M307 176h4v4h-4z"/>
<path fill="#02a13f" d="M311 176h4v4h-4z"/>
<path fill="#03a13d" d="M315 176h4v4h-4z"/>
<path fill="#03a13d" d="M319 176h4v4h-4z"/>
<path fill="#03a13d" d="M323 176h4v4h-4z"/>
<path fill="#03a13e" d="M327 176h4v4h-4z"/>
<path fill="#02a13e" d="M331 176h4v4h-4z"/>
<path fill="#02a13f" d="M335 176h4v4h-4z"/>
<path fill="#01a140" d="M339 176h4v4h-4z"/>
<path fill="#00a140" d="M343 176h4v4h-4z"/>
<path fill="#00a040" d="M347 176h4v4h-4z"/>
<path fill="#00a040" d="M351 176h4v4h-4z"/>
<path fill="#00a141" d="M355 176h4v4h-4z"/>
<path fill="#00a141" d="M359 176h4v4h-4z"/>
<path fill="#00a141" d="M363 176h4v4h-4z"/>
<path fill="#00a140" d="M367 176h4v4h-4z"/>
<path fill="#01a13f" d="M371 176h4v4h-4z"/>
<path fill="#03a23d" d="M375 176h4v4h-4z"/>
<path fill="#08a33a" d="M379 176h4v4h-4z"/>
<path fill="#0ea538" d="M383 176h4v4h-4z"/>
<path fill="#15a736" d="M387 176h4v4h-4z"/>
<path fill="#1ca933" d="M391 176h4v4h-4z"/>
<path fill="#21aa32" d="M395 176h4v4h-4z"/>
<path fill="#2ead31" d="M399 176h4v4h-4z"/>
<path fill="#44b12f" d="M403 176h4v4h-4z"/>
<path fill="#5cb62b" d="M407 176h4v4h-4z"/>
<path fill="#6cb928" d="M411 176h4v4h-4z"/>
<path fill="#7cbc25" d="M415 176h4v4h-4z"/>
<path fill="#8ec120" d="M419 176h4v4h-4z"/>
<path fill="#a2c71b" d="M423 176h4v4h-4z"/>
<path fill="#b6ce16" d="M427 176h4v4h-4z"/>
<path fill="#c8d511" d="M431 176h4v4h-4z"/>
<path fill="#d9dd0b" d="M435 176h4v4h-4z"/>
<path fill="#01a04e" d="M299 180h4v4h-4z"/>
<path fill="#01a149" d="M303 180h4v4h-4z"/>
<path fill="#01a145" d="M307 180h4v4h-4z"/>
<path fill="#02a141" d="M311 180h4v4h-4z"/>
<path fill="#02a13f" d="M315 180h4v4h-4z"/>
<path fill="#03a13f" d="M319 180h4v4h-4z"/>
<path fill="#03a13f" d="M323 180h4v4h-4z"/>
<path fill="#02a13f" d="M327 180h4v4h-4z"/>
<path fill="#02a140" d="M331 180h4v4h-4z"/>
<path fill="#01a141" d="M335 180h4v4h-4z"/>
<path fill="#00a041" d="M339 180h4v4h-4z"/>
<path fill="#00a042" d="M343 180h4v4h-4z"/>
<path fill="#00a042" d="M347 180h4v4h-4z"/>
<path fill="#00a042" d="M351 180h4v4h-4z"/>
<path fill="#00a042" d="M355 180h4v4h-4z"/>
<path fill="#00a142" d="M359 180h4v4h-4z"/>
<path fill="#00a142" d="M363 180h4v4h-4z"/>
<path fill="#00a042" d="M367 180h4v4h-4z"/>
<path fill="#00a041" d="M371 180h4v4h-4z"/>
<path fill="#01a13f" d="M375 180h4v4h-4z"/>
<path fill="#05a23d" d="M379 180h4v4h-4z"/>
<path fill="#0aa43a" d="M383 180h4v4h-4z"/>
<path fill="#11a638" d="M387 180h4v4h-4z"/>
<path fill="#18a735" d="M391 180h4v4h-4z"/>
<path fill="#1fa934" d="M395 180h4v4h-4z"/>
<path fill="#2ead32" d="M399 180h4v4h-4z"/>
<path fill="#46b22f" d="M403 180h4v4h-4z"/>
<path fill="#5fb72b" d="M407 180h4v4h-4z"/>
<path fill="#71bb27" d="M411 180h4v4h-4z"/>
<path fill="#81be24" d="M415 180h4v4h-4z"/>
<path fill="#93c21f" d="M419 180h4v4h-4z"/>
<path fill="#a8c919" d="M423 180h4v4h-4z"/>
<path fill="#bcd114" d="M427 180h4v4h-4z"/>
<path fill="#cfd80e" d="M431 180h4v4h-4z"/>
<path fill="#e0e009" d="M435 180h4v4h-4z"/>
<path fill="#eee605" d="M439 180h4v4h-4z"/>
<path fill="#00a050" d="M299 184h4v4h-4z"/>
<path fill="#00a04c" d="M303 184h4v4h-4z"/>
<path fill="#01a147" d="M307 184h4v4h-4z"/>
<path fill="#01a143" d="M311 184h4v4h-4z"/>
<path fill="#02a141" d="M315 184h4v4h-4z"/>
<path fill="#02a140" d="M319 184h4v4h-4z"/>
<path fill="#02a140" d="M323 184h4v4h-4z"/>
<path fill="#02a141" d="M327 184h4v4h-4z"/>
<path fill="#01a142" d="M331 184h4v4h-4z"/>
<path fill="#01a143" d="M335 184h4v4h-4z"/>
<path fill="#00a043" d="M339 184h4v4h-4z"/>
<path fill="#00a044" d="M343 184h4v4h-4z"/>
<path fill="#00a044" d="M347 184h4v4h-4z"/>
<path fill="#00a044" d="M351 184h4v4h-4z"/>
<path fill="#00a044" d="M355 184h4v4h-4z"/>
<path fill="#00a044" d="M359 184h4v4h-4z"/>
<path fill="#00a044" d="M363 184h4v4h-4z"/>
<path fill="#00a044" d="M367 184h4v4h-4z"/>
<path fill="#00a043" d="M371 184h4v4h-4z"/>
<path fill="#00a041" d="M375 184h4v4h-4z"/>
<path fill="#02a13f" d="M379 184h4v4h-4z"/>
<path fill="#07a33c" d="M383 184h4v4h-4z"/>
<path fill="#0ca43a" d="M387 184h4v4h-4z"/>
<path fill="#13a638" d="M391 184h4v4h-4z"/>
<path fill="#1ca836" d="M395 184h4v4h-4z"/>
<path fill="#2dac33" d="M399 184h4v4h-4z"/>
<path fill="#48b22f" d="M403 184h4v4h-4z"/>
<path fill="#63b82a" d="M407 184h4v4h-4z"/>
<path fill="#76bc26" d="M411 184h4v4h-4z"/>
<path fill="#88c022" d="M415 184h4v4h-4z"/>
<path fill="#9ac41d" d="M419 184h4v4h-4z"/>
<path fill="#b0cc17" d="M423 184h4v4h-4z"/>
<path fill="#c4d411" d="M427 184h4v4h-4z"/>
<path fill="#d7dc0b" d="M431 184h4v4h-4z"/>
<path fill="#e8e306" d="M435 184h4v4h-4z"/>
<path fill="#f3e804" d="M439 184h4v4h-4z"/>
<path fill="#00a054" d="M299 188h4v4h-4z"/>
<path fill="#00a04f" d="M303 188h4v4h-4z"/>
<path fill="#00a04a" d="M307 188h4v4h-4z"/>
<path fill="#01a146" d="M311 188h4v4h-4z"/>
<path fill="#01a143" d="M315 188h4v4h-4z"/>
<path fill="#01a142" d="M319 188h4v4h-4z"/>
<path fill="#02a142" d="M323 188h4v4h-4z"/>
<path fill="#01a143" d="M327 188h4v4h-4z"/>
<path fill="#01a144" d="M331 188h4v4h-4z"/>
<path fill="#00a045" d="M335 188h4v4h-4z"/>
<path fill="#00a045" d="M339 188h4v4h-4z"/>
<path fill="#00a045" d="M343 188h4v4h-4z"/>
<path fill="#00a046" d="M347 188h4v4h-4z"/>
<path fill="#00a046" d="M351 188h4v4h-4z"/>
<path fill="#00a045" d="M355 188h4v4h-4z"/>
<path fill="#00a046" d="M359 188h4v4h-4z"/>
<path fill="#00a046" d="M363 188h4v4h-4z"/>
<path fill="#00a046" d="M367 188h4v4h-4z"/>
<path fill="#00a045" d="M371 188h4v4h-4z"/>
<path fill="#00a043" d="M375 188h4v4h-4z"/>
<path fill="#00a141" d="M379 188h4v4h-4z"/>
<path fill="#04a23f" d="M383 188h4v4h-4z"/>
<path fill="#08a33c" d="M387 188h4v4h-4z"/>
<path fill="#0fa53a" d="M391 188h4v4h-4z"/>
<path fill="#19a738" d="M395 188h4v4h-4z"/>
<path fill="#2dac34" d="M399 188h4v4h-4z"/>
<path fill="#4cb32f" d="M403 188h4v4h-4z"/>
<path fill="#68b92a" d="M407 188h4v4h-4z"/>
<path fill="#7dbe25" d="M411 188h4v4h-4z"/>
<path fill="#91c320" d="M415 188h4v4h-4z"/>
<path fill="#a5c81a" d="M419 188h4v4h-4z"/>
<path fill="#bad014" d="M423 188h4v4h-4z"/>
<path fill="#ced70e" d="M427 188h4v4h-4z"/>
<path fill="#e0df09" d="M431 188h4v4h-4z"/>
<path fill="#efe604" d="M435 188h4v4h-4z"/>
<path fill="#f9eb02" d="M439 188h4v4h-4z"/>
<path fill="#feea01" d="M443 188h4v4h-4z"/>
<path fill="#00a157" d="M299 192h4v4h-4z"/>
<path fill="#00a052" d="M303 192h4v4h-4z"/>
<path fill="#00a04c" d="M307 192h4v4h-4z"/>
<path fill="#00a047" d="M311 192h4v4h-4z"/>
<path fill="#01a045" d="M315 192h4v4h-4z"/>
<path fill="#01a044" d="M319 192h4v4h-4z"/>
<path fill="#01a044" d="M323 192h4v4h-4z"/>
<path fill="#01a045" d="M327 192h4v4h-4z"/>
<path fill="#01a046" d="M331 192h4v4h-4z"/>
<path fill="#00a047" d="M335 192h4v4h-4z"/>
<path fill="#00a047" d="M339 192h4v4h-4z"/>
<path fill="#00a047" d="M343 192h4v4h-4z"/>
<path fill="#00a048" d="M347 192h4v4h-4z"/>
<path fill="#00a048" d="M351 192h4v4h-4z"/>
<path fill="#00a047" d="M355 192h4v4h-4z"/>
<path fill="#00a047" d="M359 192h4v4h-4z"/>
<path fill="#00a047" d="M363 192h4v4h-4z"/>
<path fill="#00a047" d="M367 192h4v4h-4z"/>
<path fill="#00a047" d="M371 192h4v4h-4z"/>
<path fill="#00a045" d="M375 192h4v4h-4z"/>
<path fill="#00a043" d="M379 192h4v4h-4z"/>
<path fill="#02a141" d="M383 192h4v4h-4z"/>
<path fill="#05a23f" d="M387 192h4v4h-4z"/>
<path fill="#0ba43c" d="M391 192h4v4h-4z"/>
<path fill="#17a739" d="M395 192h4v4h-4z"/>
<path fill="#2dac35" d="M399 192h4v4h-4z"/>
<path fill="#50b42f" d="M403 192h4v4h-4z"/>
<path fill="#6ebb29" d="M407 192h4v4h-4z"/>
<path fill="#84c024" d="M411 192h4v4h-4z"/>
<path fill="#9bc61e" d="M415 192h4v4h-4z"/>
<path fill="#b1cd17" d="M419 192h4v4h-4z"/>
<path fill="#c5d411" d="M423 192h4v4h-4z"/>
<path fill="#d8dc0b" d="M427 192h4v4h-4z"/>
<path fill="#e9e305" d="M431 192h4v4h-4z"/>
<path fill="#f5e802" d="M435 192h4v4h-4z"/>
<path fill="#ffed00" d="M439 192h4v4h-4z"/>
<path fill="#fee601" d="M443 192h4v4h-4z"/>
<path fill="#fee002" d="M447 192h4v4h-4z"/>
<path fill="#00a15a" d="M299 196h4v4h-4z"/>
<path fill="#00a054" d="M303 196h4v4h-4z"/>
<path fill="#00a04e" d="M307 196h4v4h-4z"/>
<path fill="#00a049" d="M311 196h4v4h-4z"/>
<path fill="#00a047" d="M315 196h4v4h-4z"/>
<path fill="#00a046" d="M319 196h4v4h-4z"/>
<path fill="#01a046" d="M323 196h4v4h-4z"/>
<path fill="#01a047" d="M327 196h4v4h-4z"/>
<path fill="#00a048" d="M331 196h4v4h-4z"/>
<path fill="#00a049" d="M335 196h4v4h-4z"/>
<path fill="#00a04a" d="M339 196h4v4h-4z"/>
<path fill="#00a04a" d="M343 196h4v4h-4z"/>
<path fill="#009f49" d="M347 196h4v4h-4z"/>
<path fill="#00a04a" d="M351 196h4v4h-4z"/>
<path fill="#00a049" d="M355 196h4v4h-4z"/>
<path fill="#00a049" d="M359 196h4v4h-4z"/>
<path fill="#00a049" d="M363 196h4v4h-4z"/>
<path fill="#00a049" d="M367 196h4v4h-4z"/>
<path fill="#00a048" d="M371 196h4v4h-4z"/>
<path fill="#00a047" d="M375 196h4v4h-4z"/>
<path fill="#00a045" d="M379 196h4v4h-4z"/>
<path fill="#02a142" d="M383 196h4v4h-4z"/>
<path fill="#04a240" d="M387 196h4v4h-4z"/>
<path fill="#0aa43e" d="M391 196h4v4h-4z"/>
<path fill="#17a73b" d="M395 196h4v4h-4z"/>
<path fill="#2fad36" d="M399 196h4v4h-4z"/>
<path fill="#54b530" d="M403 196h4v4h-4z"/>
<path fill="#73bd29" d="M407 196h4v4h-4z"/>
<path fill="#8cc223" d="M411 196h4v4h-4z"/>
<path fill="#a5ca1b" d="M415 196h4v4h-4z"/>
<path fill="#bdd114" d="M419 196h4v4h-4z"/>
<path fill="#d0d90e" d="M423 196h4v4h-4z"/>
<path fill="#e1e008" d="M427 196h4v4h-4z"/>
<path fill="#f1e703" d="M431 196h4v4h-4z"/>
<path fill="#fbeb01" d="M435 196h4v4h-4z"/>
<path fill="#ffe900" d="M439 196h4v4h-4z"/>
<path fill="#fee201" d="M443 196h4v4h-4z"/>
<path fill="#fedc02" d="M447 196h4v4h-4z"/>
<path fill="#fdd502" d="M451 196h4v4h-4z"/>
<path fill="#00a15b" d="M299 200h4v4h-4z"/>
<path fill="#00a056" d="M303 200h4v4h-4z"/>
<path fill="#00a050" d="M307 200h4v4h-4z"/>
<path fill="#00a04b" d="M311 200h4v4h-4z"/>
<path fill="#009f48" d="M315 200h4v4h-4z"/>
<path fill="#009f47" d="M319 200h4v4h-4z"/>
<path fill="#009f48" d="M323 200h4v4h-4z"/>
<path fill="#00a049" d="M327 200h4v4h-4z"/>
<path fill="#00a04a" d="M331 200h4v4h-4z"/>
<path fill="#00a04b" d="M335 200h4v4h-4z"/>
<path fill="#00a04c" d="M339 200h4v4h-4z"/>
<path fill="#00a04c" d="M343 200h4v4h-4z"/>
<path fill="#009f4c" d="M347 200h4v4h-4z"/>
<path fill="#009f4c" d="M351 200h4v4h-4z"/>
<path fill="#009f4b" d="M355 200h4v4h-4z"/>
<path fill="#009f4b" d="M359 200h4v4h-4z"/>
<path fill="#009f4b" d="M363 200h4v4h-4z"/>
<path fill="#00a04a" d="M367 200h4v4h-4z"/>
<path fill="#009f4a" d="M371 200h4v4h-4z"/>
<path fill="#00a049" d="M375 200h4v4h-4z"/>
<path fill="#00a047" d="M379 200h4v4h-4z"/>
<path fill="#03a244" d="M383 200h4v4h-4z"/>
<path fill="#07a341" d="M387 200h4v4h-4z"/>
<path fill="#0ea53f" d="M391 200h4v4h-4z"/>
<path fill="#1aa83c" d="M395 200h4v4h-4z"/>
<path fill="#32ae37" d="M399 200h4v4h-4z"/>
<path fill="#59b630" d="M403 200h4v4h-4z"/>
<path fill="#78be29" d="M407 200h4v4h-4z"/>
<path fill="#92c522" d="M411 200h4v4h-4z"/>
<path fill="#adcc1a" d="M415 200h4v4h-4z"/>
<path fill="#c5d512" d="M419 200h4v4h-4z"/>
<path fill="#d9dc0b" d="M423 200h4v4h-4z"/>
<path fill="#eae405" d="M427 200h4v4h-4z"/>
<path fill="#f7e901" d="M431 200h4v4h-4z"/>
<path fill="#ffee00" d="M435 200h4v4h-4z"/>
<path fill="#ffe600" d="M439 200h4v4h-4z"/>
<path fill="#ffdf01" d="M443 200h4v4h-4z"/>
<path fill="#fed701" d="M447 200h4v4h-4z"/>
<path fill="#fdcf02" d="M451 200h4v4h-4z"/>
<path fill="#fcc703" d="M455 200h4v4h-4z"/>
<path fill="#00a05c" d="M299 204h4v4h-4z"/>
<path fill="#00a057" d="M303 204h4v4h-4z"/>
<path fill="#00a052" d="M307 204h4v4h-4z"/>
<path fill="#00a04e" d="M311 204h4v4h-4z"/>
<path fill="#009f4b" d="M315 204h4v4h-4z"/>
<path fill="#009f49" d="M319 204h4v4h-4z"/>
<path fill="#009f49" d="M323 204h4v4h-4z"/>
<path fill="#009f4b" d="M327 204h4v4h-4z"/>
<path fill="#009f4c" d="M331 204h4v4h-4z"/>
<path fill="#00a04d" d="M335 204h4v4h-4z"/>
<path fill="#00a04e" d="M339 204h4v4h-4z"/>
<path fill="#00a04e" d="M343 204h4v4h-4z"/>
<path fill="#009f4e" d="M347 204h4v4h-4z"/>
<path fill="#009f4e" d="M351 204h4v4h-4z"/>
<path fill="#009f4e" d="M355 204h4v4h-4z"/>
<path fill="#009f4d" d="M359 204h4v4h-4z"/>
<path fill="#009f4c" d="M363 204h4v4h-4z"/>
<path fill="#009f4c" d="M367 204h4v4h-4z"/>
<path fill="#009f4b" d="M371 204h4v4h-4z"/>
<path fill="#009f4a" d="M375 204h4v4h-4z"/>
<path fill="#01a048" d="M379 204h4v4h-4z"/>
<path fill="#06a245" d="M383 204h4v4h-4z"/>
<path fill="#0ca442" d="M387 204h4v4h-4z"/>
<path fill="#15a63f" d="M391 204h4v4h-4z"/>
<path fill="#1fa93c" d="M395 204h4v4h-4z"/>
<path fill="#36af38" d="M399 204h4v4h-4z"/>
<path fill="#5eb831" d="M403 204h4v4h-4z"/>
<path fill="#7cbf29" d="M407 204h4v4h-4z"/>
<path fill="#99c721" d="M411 204h4v4h-4z"/>
<path fill="#b4ce18" d="M415 204h4v4h-4z"/>
<path fill="#cdd810" d="M419 204h4v4h-4z"/>
<path fill="#e1e008" d="M423 204h4v4h-4z"/>
<path fill="#f3e702" d="M427 204h4v4h-4z"/>
<path fill="#fdec00" d="M431 204h4v4h-4z"/>
<path fill="#ffe900" d="M435 204h4v4h-4z"/>
<path fill="#ffe100" d="M439 204h4v4h-4z"/>
<path fill="#ffda00" d="M443 204h4v4h-4z"/>
<path fill="#fed101" d="M447 204h4v4h-4z"/>
<path fill="#fdc801" d="M451 204h4v4h-4z"/>
<path fill="#fcc002" d="M455 204h4v4h-4z"/>
<path fill="#00a05e" d="M299 208h4v4h-4z"/>
<path fill="#00a059" d="M303 208h4v4h-4z"/>
<path fill="#00a054" d="M307 208h4v4h-4z"/>
<path fill="#009f50" d="M311 208h4v4h-4z"/>
<path fill="#009f4d" d="M315 208h4v4h-4z"/>
<path fill="#009f4c" d="M319 208h4v4h-4z"/>
<path fill="#009f4c" d="M323 208h4v4h-4z"/>
<path fill="#009f4d" d="M327 208h4v4h-4z"/>
<path fill="#009f4e" d="M331 208h4v4h-4z"/>
<path fill="#009f50" d="M335 208h4v4h-4z"/>
<path fill="#00a050" d="M339 208h4v4h-4z"/>
<path fill="#00a051" d="M343 208h4v4h-4z"/>
<path fill="#009f51" d="M347 208h4v4h-4z"/>
<path fill="#009f50" d="M351 208h4v4h-4z"/>
<path fill="#009f50" d="M355 208h4v4h-4z"/>
<path fill="#009f4f" d="M359 208h4v4h-4z"/>
<path fill="#009f4e" d="M363 208h4v4h-4z"/>
<path fill="#009f4e" d="M367 208h4v4h-4z"/>
<path fill="#009f4d" d="M371 208h4v4h-4z"/>
<path fill="#009f4c" d="M375 208h4v4h-4z"/>
<path fill="#03a149" d="M379 208h4v4h-4z"/>
<path fill="#0aa346" d="M383 208h4v4h-4z"/>
<path fill="#12a643" d="M387 208h4v4h-4z"/>
<path fill="#1ca840" d="M391 208h4v4h-4z"/>
<path fill="#26ab3d" d="M395 208h4v4h-4z"/>
<path fill="#3cb039" d="M399 208h4v4h-4z"/>
<path fill="#63b932" d="M403 208h4v4h-4z"/>
<path fill="#81c02b" d="M407 208h4v4h-4z"/>
<path fill="#9fc922" d="M411 208h4v4h-4z"/>
<path fill="#bbd118" d="M415 208h4v4h-4z"/>
<path fill="#d4db0e" d="M419 208h4v4h-4z"/>
<path fill="#e8e306" d="M423 208h4v4h-4z"/>
<path fill="#f7ea01" d="M427 208h4v4h-4z"/>
<path fill="#ffee00" d="M431 208h4v4h-4z"/>
<path fill="#ffe500" d="M435 208h4v4h-4z"/>
<path fill="#ffdd00" d="M439 208h4v4h-4z"/>
<path fill="#fed400" d="M443 208h4v4h-4z"/>
<path fill="#fdca00" d="M447 208h4v4h-4z"/>
<path fill="#fcc100" d="M451 208h4v4h-4z"/>
<path fill="#fbb901" d="M455 208h4v4h-4z"/>
<path fill="#fab203" d="M459 208h4v4h-4z"/>
<path fill="#00a05f" d="M299 212h4v4h-4z"/>
<path fill="#00a05b" d="M303 212h4v4h-4z"/>
<path fill="#00a056" d="M307 212h4v4h-4z"/>
<path fill="#009f52" d="M311 212h4v4h-4z"/>
<path fill="#009f50" d="M315 212h4v4h-4z"/>
<path fill="#009f4f" d="M319 212h4v4h-4z"/>
<path fill="#009f4f" d="M323 212h4v4h-4z"/>
<path fill="#009f4f" d="M327 212h4v4h-4z"/>
<path fill="#009f50" d="M331 212h4v4h-4z"/>
<path fill="#009f52" d="M335 212h4v4h-4z"/>
<path fill="#009f53" d="M339 212h4v4h-4z"/>
<path fill="#01a053" d="M343 212h4v4h-4z"/>
<path fill="#00a054" d="M347 212h4v4h-4z"/>
<path fill="#009f53" d="M351 212h4v4h-4z"/>
<path fill="#009f52" d="M355 212h4v4h-4z"/>
<path fill="#009f52" d="M359 212h4v4h-4z"/>
<path fill="#009f51" d="M363 212h4v4h-4z"/>
<path fill="#009e50" d="M367 212h4v4h-4z"/>
<path fill="#009f4f" d="M371 212h4v4h-4z"/>
<path fill="#009f4e" d="M375 212h4v4h-4z"/>
<path fill="#04a14b" d="M379 212h4v4h-4z"/>
<path fill="#0da447" d="M383 212h4v4h-4z"/>
<path fill="#18a743" d="M387 212h4v4h-4z"/>
<path fill="#23aa41" d="M391 212h4v4h-4z"/>
<path fill="#2dad3f" d="M395 212h4v4h-4z"/>
<path fill="#42b23b" d="M399 212h4v4h-4z"/>
<path fill="#69bb34" d="M403 212h4v4h-4z"/>
<path fill="#88c22d" d="M407 212h4v4h-4z"/>
<path fill="#a7cb23" d="M411 212h4v4h-4z"/>
<path fill="#c3d517" d="M415 212h4v4h-4z"/>
<path fill="#dcde0c" d="M419 212h4v4h-4z"/>
<path fill="#f0e704" d="M423 212h4v4h-4z"/>
<path fill="#fcec00" d="M427 212h4v4h-4z"/>
<path fill="#ffe900" d="M431 212h4v4h-4z"/>
<path fill="#ffe000" d="M435 212h4v4h-4z"/>
<path fill="#fed700" d="M439 212h4v4h-4z"/>
<path fill="#fdcc00" d="M443 212h4v4h-4z"/>
<path fill="#fcc300" d="M447 212h4v4h-4z"/>
<path fill="#fbba00" d="M451 212h4v4h-4z"/>
<path fill="#fbb100" d="M455 212h4v4h-4z"/>
<path fill="#faaa02" d="M459 212h4v4h-4z"/>
<path fill="#f9a704" d="M463 212h4v4h-4z"/>
<path fill="#00a062" d="M299 216h4v4h-4z"/>
<path fill="#00a05d" d="M303 216h4v4h-4z"/>
<path fill="#009f58" d="M307 216h4v4h-4z"/>
<path fill="#009f55" d="M311 216h4v4h-4z"/>
<path fill="#009f53" d="M315 216h4v4h-4z"/>
<path fill="#009f52" d="M319 216h4v4h-4z"/>
<path fill="#009f53" d="M323 216h4v4h-4z"/>
<path fill="#009f53" d="M327 216h4v4h-4z"/>
<path fill="#009f54" d="M331 216h4v4h-4z"/>
<path fill="#009f54" d="M335 216h4v4h-4z"/>
<path fill="#009f55" d="M339 216h4v4h-4z"/>
<path fill="#009f56" d="M343 216h4v4h-4z"/>
<path fill="#01a056" d="M347 216h4v4h-4z"/>
<path fill="#019f56" d="M351 216h4v4h-4z"/>
<path fill="#009f56" d="M355 216h4v4h-4z"/>
<path fill="#009f55" d="M359 216h4v4h-4z"/>
<path fill="#009f54" d="M363 216h4v4h-4z"/>
<path fill="#009e53" d="M367 216h4v4h-4z"/>
<path fill="#009f52" d="M371 216h4v4h-4z"/>
<path fill="#019f50" d="M375 216h4v4h-4z"/>
<path fill="#06a14d" d="M379 216h4v4h-4z"/>
<path fill="#10a448" d="M383 216h4v4h-4z"/>
<path fill="#1da944" d="M387 216h4v4h-4z"/>
<path fill="#29ac41" d="M391 216h4v4h-4z"/>
<path fill="#33af40" d="M395 216h4v4h-4z"/>
<path fill="#4ab53e" d="M399 216h4v4h-4z"/>
<path fill="#72be38" d="M403 216h4v4h-4z"/>
<path fill="#90c531" d="M407 216h4v4h-4z"/>
<path fill="#b0ce26" d="M411 216h4v4h-4z"/>
<path fill="#ccd918" d="M415 216h4v4h-4z"/>
<path fill="#e5e20b" d="M419 216h4v4h-4z"/>
<path fill="#f7ea03" d="M423 216h4v4h-4z"/>
<path fill="#ffed00" d="M427 216h4v4h-4z"/>
<path fill="#ffe400" d="M431 216h4v4h-4z"/>
<path fill="#fedb00" d="M435 216h4v4h-4z"/>
<path fill="#fdcf00" d="M439 216h4v4h-4z"/>
<path fill="#fcc500" d="M443 216h4v4h-4z"/>
<path fill="#fbbb00" d="M447 216h4v4h-4z"/>
<path fill="#fab100" d="M451 216h4v4h-4z"/>
<path fill="#faa900" d="M455 216h4v4h-4z"/>
<path fill="#f9a602" d="M459 216h4v4h-4z"/>
<path fill="#f8a204" d="M463 216h4v4h-4z"/>
<path fill="#00a064" d="M299 220h4v4h-4z"/>
<path fill="#00a060" d="M303 220h4v4h-4z"/>
<path fill="#00a05c" d="M307 220h4v4h-4z"/>
<path fill="#009f58" d="M311 220h4v4h-4z"/>
<path fill="#009f57" d="M315 220h4v4h-4z"/>
<path fill="#009f56" d="M319 220h4v4h-4z"/>
<path fill="#009f57" d="M323 220h4v4h-4z"/>
<path fill="#009f57" d="M327 220h4v4h-4z"/>
<path fill="#009f58" d="M331 220h4v4h-4z"/>
<path fill="#009f58" d="M335 220h4v4h-4z"/>
<path fill="#009f58" d="M339 220h4v4h-4z"/>
<path fill="#009f59" d="M343 220h4v4h-4z"/>
<path fill="#01a059" d="M347 220h4v4h-4z"/>
<path fill="#01a059" d="M351 220h4v4h-4z"/>
<path fill="#00a059" d="M355 220h4v4h-4z"/>
<path fill="#009f59" d="M359 220h4v4h-4z"/>
<path fill="#009f58" d="M363 220h4v4h-4z"/>
<path fill="#009f58" d="M367 220h4v4h-4z"/>
<path fill="#009f56" d="M371 220h4v4h-4z"/>
<path fill="#02a053" d="M375 220h4v4h-4z"/>
<path fill="#07a14f" d="M379 220h4v4h-4z"/>
<path fill="#11a54a" d="M383 220h4v4h-4z"/>
<path fill="#1fa944" d="M387 220h4v4h-4z"/>
<path fill="#2dac42" d="M391 220h4v4h-4z"/>
<path fill="#3ab042" d="M395 220h4v4h-4z"/>
<path fill="#55b843" d="M399 220h4v4h-4z"/>
<path fill="#7dc23c" d="M403 220h4v4h-4z"/>
<path fill="#9cca36" d="M407 220h4v4h-4z"/>
<path fill="#bbd22a" d="M411 220h4v4h-4z"/>
<path fill="#d7dd1a" d="M415 220h4v4h-4z"/>
<path fill="#eee70b" d="M419 220h4v4h-4z"/>
<path fill="#fded02" d="M423 220h4v4h-4z"/>
<path fill="#ffe800" d="M427 220h4v4h-4z"/>
<path fill="#fede00" d="M431 220h4v4h-4z"/>
<path fill="#fdd300" d="M435 220h4v4h-4z"/>
<path fill="#fcc700" d="M439 220h4v4h-4z"/>
<path fill="#fbbc00" d="M443 220h4v4h-4z"/>
<path fill="#fab200" d="M447 220h4v4h-4z"/>
<path fill="#f9a900" d="M451 220h4v4h-4z"/>
<path fill="#f9a400" d="M455 220h4v4h-4z"/>
<path fill="#f8a101" d="M459 220h4v4h-4z"/>
<path fill="#f79e04" d="M463 220h4v4h-4z"/>
<path fill="#f79b06" d="M467 220h4v4h-4z"/>
<path fill="#00a167" d="M299 224h4v4h-4z"/>
<path fill="#00a063" d="M303 224h4v4h-4z"/>
<path fill="#00a05f" d="M307 224h4v4h-4z"/>
<path fill="#00a05d" d="M311 224h4v4h-4z"/>
<path fill="#00a05b" d="M315 224h4v4h-4z"/>
<path fill="#00a05b" d="M319 224h4v4h-4z"/>
<path fill="#00a05b" d="M323 224h4v4h-4z"/>
<path fill="#00a05b" d="M327 224h4v4h-4z"/>
<path fill="#00a05c" d="M331 224h4v4h-4z"/>
<path fill="#00a05c" d="M335 224h4v4h-4z"/>
<path fill="#009f5b" d="M339 224h4v4h-4z"/>
<path fill="#009f5b" d="M343 224h4v4h-4z"/>
<path fill="#009f5c" d="M347 224h4v4h-4z"/>
<path fill="#01a05c" d="M351 224h4v4h-4z"/>
<path fill="#00a05d" d="M355 224h4v4h-4z"/>
<path fill="#00a05d" d="M359 224h4v4h-4z"/>
<path fill="#009f5c" d="M363 224h4v4h-4z"/>
<path fill="#009f5c" d="M367 224h4v4h-4z"/>
<path fill="#009f5a" d="M371 224h4v4h-4z"/>
<path fill="#02a057" d="M375 224h4v4h-4z"/>
<path fill="#08a252" d="M379 224h4v4h-4z"/>
<path fill="#12a44c" d="M383 224h4v4h-4z"/>
<path fill="#20a845" d="M387 224h4v4h-4z"/>
<path fill="#2fac42" d="M391 224h4v4h-4z"/>
<path fill="#4db650" d="M395 224h4v4h-4z"/>
<path fill="#6cc055" d="M399 224h4v4h-4z"/>
<path fill="#8fc94a" d="M403 224h4v4h-4z"/>
<path fill="#a8cf3a" d="M407 224h4v4h-4z"/>
<path fill="#c7d82d" d="M411 224h4v4h-4z"/>
<path fill="#e4e428" d="M415 224h4v4h-4z"/>
<path fill="#f8ec1b" d="M419 224h4v4h-4z"/>
<path fill="#ffee07" d="M423 224h4v4h-4z"/>
<path fill="#ffe200" d="M427 224h4v4h-4z"/>
<path fill="#fed700" d="M431 224h4v4h-4z"/>
<path fill="#fcca00" d="M435 224h4v4h-4z"/>
<path fill="#fbbe00" d="M439 224h4v4h-4z"/>
<path fill="#fab200" d="M443 224h4v4h-4z"/>
<path fill="#f9a800" d="M447 224h4v4h-4z"/>
<path fill="#f8a300" d="M451 224h4v4h-4z"/>
<path fill="#f89f00" d="M455 224h4v4h-4z"/>
<path fill="#f79b01" d="M459 224h4v4h-4z"/>
<path fill="#f69804" d="M463 224h4v4h-4z"/>
<path fill="#f69606" d="M467 224h4v4h-4z"/>
<path fill="#f59408" d="M471 224h4v4h-4z"/>
<path fill="#00a16b" d="M299 228h4v4h-4z"/>
<path fill="#00a167" d="M303 228h4v4h-4z"/>
<path fill="#00a064" d="M307 228h4v4h-4z"/>
<path fill="#00a061" d="M311 228h4v4h-4z"/>
<path fill="#00a060" d="M315 228h4v4h-4z"/>
<path fill="#00a05f" d="M319 228h4v4h-4z"/>
<path fill="#00a05f" d="M323 228h4v4h-4z"/>
<path fill="#00a060" d="M327 228h4v4h-4z"/>
<path fill="#00a060" d="M331 228h4v4h-4z"/>
<path fill="#00a060" d="M335 228h4v4h-4z"/>
<path fill="#00a05f" d="M339 228h4v4h-4z"/>
<path fill="#009f5e" d="M343 228h4v4h-4z"/>
<path fill="#009f5e" d="M347 228h4v4h-4z"/>
<path fill="#00a05f" d="M351 228h4v4h-4z"/>
<path fill="#00a060" d="M355 228h4v4h-4z"/>
<path fill="#00a061" d="M359 228h4v4h-4z"/>
<path fill="#00a061" d="M363 228h4v4h-4z"/>
<path fill="#009f61" d="M367 228h4v4h-4z"/>
<path fill="#009f5f" d="M371 228h4v4h-4z"/>
<path fill="#01a05b" d="M375 228h4v4h-4z"/>
<path fill="#09a255" d="M379 228h4v4h-4z"/>
<path fill="#12a44d" d="M383 228h4v4h-4z"/>
<path fill="#20a845" d="M387 228h4v4h-4z"/>
<path fill="#3eb14e" d="M391 228h4v4h-4z"/>
<path fill="#5ebc5d" d="M395 228h4v4h-4z"/>
<path fill="#7fc761" d="M399 228h4v4h-4z"/>
<path fill="#a2d15a" d="M403 228h4v4h-4z"/>
<path fill="#bad749" d="M407 228h4v4h-4z"/>
<path fill="#d8e243" d="M411 228h4v4h-4z"/>
<path fill="#f1eb3c" d="M415 228h4v4h-4z"/>
<path fill="#ffef29" d="M419 228h4v4h-4z"/>
<path fill="#ffe91a" d="M423 228h4v4h-4z"/>
<path fill="#fedd10" d="M427 228h4v4h-4z"/>
<path fill="#fdd10c" d="M431 228h4v4h-4z"/>
<path fill="#fbc407" d="M435 228h4v4h-4z"/>
<path fill="#fab600" d="M439 228h4v4h-4z"/>
<path fill="#f9a900" d="M443 228h4v4h-4z"/>
<path fill="#f8a200" d="M447 228h4v4h-4z"/>
<path fill="#f79d00" d="M451 228h4v4h-4z"/>
<path fill="#f69800" d="M455 228h4v4h-4z"/>
<path fill="#f69500" d="M459 228h4v4h-4z"/>
<path fill="#f59303" d="M463 228h4v4h-4z"/>
<path fill="#f59106" d="M467 228h4v4h-4z"/>
<path fill="#f48f08" d="M471 228h4v4h-4z"/>
<path fill="#f38d09" d="M475 228h4v4h-4z"/>
<path fill="#00a16f" d="M299 232h4v4h-4z"/>
<path fill="#00a16c" d="M303 232h4v4h-4z"/>
<path fill="#00a169" d="M307 232h4v4h-4z"/>
<path fill="#00a166" d="M311 232h4v4h-4z"/>
<path fill="#00a165" d="M315 232h4v4h-4z"/>
<path fill="#00a164" d="M319 232h4v4h-4z"/>
<path fill="#00a164" d="M323 232h4v4h-4z"/>
<path fill="#00a164" d="M327 232h4v4h-4z"/>
<path fill="#00a165" d="M331 232h4v4h-4z"/>
<path fill="#00a164" d="M335 232h4v4h-4z"/>
<path fill="#00a063" d="M339 232h4v4h-4z"/>
<path fill="#00a062" d="M343 232h4v4h-4z"/>
<path fill="#00a061" d="M347 232h4v4h-4z"/>
<path fill="#00a061" d="M351 232h4v4h-4z"/>
<path fill="#00a063" d="M355 232h4v4h-4z"/>
<path fill="#00a165" d="M359 232h4v4h-4z"/>
<path fill="#00a065" d="M363 232h4v4h-4z"/>
<path fill="#00a065" d="M367 232h4v4h-4z"/>
<path fill="#00a063" d="M371 232h4v4h-4z"/>
<path fill="#00a05f" d="M375 232h4v4h-4z"/>
<path fill="#09a258" d="M379 232h4v4h-4z"/>
<path fill="#13a44e" d="M383 232h4v4h-4z"/>
<path fill="#2cac50" d="M387 232h4v4h-4z"/>
<path fill="#4db65b" d="M391 232h4v4h-4z"/>
<path fill="#6bc066" d="M395 232h4v4h-4z"/>
<path fill="#8fcc6a" d="M399 232h4v4h-4z"/>
<path fill="#b0d763" d="M403 232h4v4h-4z"/>
<path fill="#cade57" d="M407 232h4v4h-4z"/>
<path fill="#e7ea57" d="M411 232h4v4h-4z"/>
<path fill="#fcf14d" d="M415 232h4v4h-4z"/>
<path fill="#fff036" d="M419 232h4v4h-4z"/>
<path fill="#ffe32b" d="M423 232h4v4h-4z"/>
<path fill="#fdd723" d="M427 232h4v4h-4z"/>
<path fill="#fccb1d" d="M431 232h4v4h-4z"/>
<path fill="#fbbe15" d="M435 232h4v4h-4z"/>
<path fill="#f9b00c" d="M439 232h4v4h-4z"/>
<path fill="#f8a604" d="M443 232h4v4h-4z"/>
<path fill="#f79d00" d="M447 232h4v4h-4z"/>
<path fill="#f69600" d="M451 232h4v4h-4z"/>
<path fill="#f59200" d="M455 232h4v4h-4z"/>
<path fill="#f58f00" d="M459 232h4v4h-4z"/>
<path fill="#f48d03" d="M463 232h4v4h-4z"/>
<path fill="#f48b06" d="M467 232h4v4h-4z"/>
<path fill="#f38a08" d="M471 232h4v4h-4z"/>
<path fill="#f2890a" d="M475 232h4v4h-4z"/>
<path fill="#00a274" d="M299 236h4v4h-4z"/>
<path fill="#00a271" d="M303 236h4v4h-4z"/>
<path fill="#00a26e" d="M307 236h4v4h-4z"/>
<path fill="#00a26c" d="M311 236h4v4h-4z"/>
<path fill="#00a26a" d="M315 236h4v4h-4z"/>
<path fill="#00a26a" d="M319 236h4v4h-4z"/>
<path fill="#00a269" d="M323 236h4v4h-4z"/>
<path fill="#00a269" d="M327 236h4v4h-4z"/>
<path fill="#00a269" d="M331 236h4v4h-4z"/>
<path fill="#00a168" d="M335 236h4v4h-4z"/>
<path fill="#00a167" d="M339 236h4v4h-4z"/>
<path fill="#00a166" d="M343 236h4v4h-4z"/>
<path fill="#00a165" d="M347 236h4v4h-4z"/>
<path fill="#00a065" d="M351 236h4v4h-4z"/>
<path fill="#00a066" d="M355 236h4v4h-4z"/>
<path fill="#00a167" d="M359 236h4v4h-4z"/>
<path fill="#00a169" d="M363 236h4v4h-4z"/>
<path fill="#00a169" d="M367 236h4v4h-4z"/>
<path fill="#00a066" d="M371 236h4v4h-4z"/>
<path fill="#00a162" d="M375 236h4v4h-4z"/>
<path fill="#09a259" d="M379 236h4v4h-4z"/>
<path fill="#21a95a" d="M383 236h4v4h-4z"/>
<path fill="#3db25f" d="M387 236h4v4h-4z"/>
<path fill="#5abb66" d="M391 236h4v4h-4z"/>
<path fill="#75c46e" d="M395 236h4v4h-4z"/>
<path fill="#97cf71" d="M399 236h4v4h-4z"/>
<path fill="#b5d868" d="M403 236h4v4h-4z"/>
<path fill="#d3e25f" d="M407 236h4v4h-4z"/>
<path fill="#f1ee61" d="M411 236h4v4h-4z"/>
<path fill="#fff355" d="M415 236h4v4h-4z"/>
<path fill="#ffe946" d="M419 236h4v4h-4z"/>
<path fill="#fddc3d" d="M423 236h4v4h-4z"/>
<path fill="#fcd037" d="M427 236h4v4h-4z"/>
<path fill="#fbc42d" d="M431 236h4v4h-4z"/>
<path fill="#fab621" d="M435 236h4v4h-4z"/>
<path fill="#f9ad17" d="M439 236h4v4h-4z"/>
<path fill="#f7a30e" d="M443 236h4v4h-4z"/>
<path fill="#f69905" d="M447 236h4v4h-4z"/>
<path fill="#f59100" d="M451 236h4v4h-4z"/>
<path fill="#f48b00" d="M455 236h4v4h-4z"/>
<path fill="#f48800" d="M459 236h4v4h-4z"/>
<path fill="#f38702" d="M463 236h4v4h-4z"/>
<path fill="#f28505" d="M467 236h4v4h-4z"/>
<path fill="#f28408" d="M471 236h4v4h-4z"/>
<path fill="#f1830a" d="M475 236h4v4h-4z"/>
<path fill="#f1830b" d="M479 236h4v4h-4z"/>
<path fill="#00a378" d="M299 240h4v4h-4z"/>
<path fill="#00a376" d="M303 240h4v4h-4z"/>
<path fill="#00a374" d="M307 240h4v4h-4z"/>
<path fill="#00a372" d="M311 240h4v4h-4z"/>
<path fill="#00a371" d="M315 240h4v4h-4z"/>
<path fill="#00a370" d="M319 240h4v4h-4z"/>
<path fill="#00a36f" d="M323 240h4v4h-4z"/>
<path fill="#00a36e" d="M327 240h4v4h-4z"/>
<path fill="#00a26d" d="M331 240h4v4h-4z"/>
<path fill="#00a26b" d="M335 240h4v4h-4z"/>
<path fill="#00a26a" d="M339 240h4v4h-4z"/>
<path fill="#00a269" d="M343 240h4v4h-4z"/>
<path fill="#00a169" d="M347 240h4v4h-4z"/>
<path fill="#00a169" d="M351 240h4v4h-4z"/>
<path fill="#00a169" d="M355 240h4v4h-4z"/>
<path fill="#00a16a" d="M359 240h4v4h-4z"/>
<path fill="#00a16c" d="M363 240h4v4h-4z"/>
<path fill="#00a16c" d="M367 240h4v4h-4z"/>
<path fill="#00a169" d="M371 240h4v4h-4z"/>
<path fill="#00a264" d="M375 240h4v4h-4z"/>
<path fill="#0aa35a" d="M379 240h4v4h-4z"/>
<path fill="#33b069" d="M383 240h4v4h-4z"/>
<path fill="#4fb96e" d="M387 240h4v4h-4z"/>
<path fill="#66c070" d="M391 240h4v4h-4z"/>
<path fill="#7cc777" d="M395 240h4v4h-4z"/>
<path fill="#9bd178" d="M399 240h4v4h-4z"/>
<path fill="#b4d86a" d="M403 240h4v4h-4z"/>
<path fill="#d9e465" d="M407 240h4v4h-4z"/>
<path fill="#f7f064" d="M411 240h4v4h-4z"/>
<path fill="#fff25a" d="M415 240h4v4h-4z"/>
<path fill="#fee355" d="M419 240h4v4h-4z"/>
<path fill="#fcd550" d="M423 240h4v4h-4z"/>
<path fill="#fbc848" d="M427 240h4v4h-4z"/>
<path fill="#fabb3a" d="M431 240h4v4h-4z"/>
<path fill="#f9b22e" d="M435 240h4v4h-4z"/>
<path fill="#f8a922" d="M439 240h4v4h-4z"/>
<path fill="#f69f17" d="M443 240h4v4h-4z"/>
<path fill="#f5960e" d="M447 240h4v4h-4z"/>
<path fill="#f48d06" d="M451 240h4v4h-4z"/>
<path fill="#f38701" d="M455 240h4v4h-4z"/>
<path fill="#f28100" d="M459 240h4v4h-4z"/>
<path fill="#f28001" d="M463 240h4v4h-4z"/>
<path fill="#f17f05" d="M467 240h4v4h-4z"/>
<path fill="#f17f08" d="M471 240h4v4h-4z"/>
<path fill="#f07e0a" d="M475 240h4v4h-4z"/>
<path fill="#f07d0c" d="M479 240h4v4h-4z"/>
<path fill="#f07c0d" d="M483 240h4v4h-4z"/>
<path fill="#00a47b" d="M303 244h4v4h-4z"/>
<path fill="#00a479" d="M307 244h4v4h-4z"/>
<path fill="#00a478" d="M311 244h4v4h-4z"/>
<path fill="#00a477" d="M315 244h4v4h-4z"/>
<path fill="#00a576" d="M319 244h4v4h-4z"/>
<path fill="#00a474" d="M323 244h4v4h-4z"/>
<path fill="#00a472" d="M327 244h4v4h-4z"/>
<path fill="#00a370" d="M331 244h4v4h-4z"/>
<path fill="#00a36f" d="M335 244h4v4h-4z"/>
<path fill="#00a36e" d="M339 244h4v4h-4z"/>
<path fill="#00a26d" d="M343 244h4v4h-4z"/>
<path fill="#00a26c" d="M347 244h4v4h-4z"/>
<path fill="#00a26d" d="M351 244h4v4h-4z"/>
<path fill="#00a26d" d="M355 244h4v4h-4z"/>
<path fill="#00a26e" d="M359 244h4v4h-4z"/>
<path fill="#00a26e" d="M363 244h4v4h-4z"/>
<path fill="#00a26e" d="M367 244h4v4h-4z"/>
<path fill="#00a26c" d="M371 244h4v4h-4z"/>
<path fill="#01a266" d="M375 244h4v4h-4z"/>
<path fill="#0fa55f" d="M379 244h4v4h-4z"/>
<path fill="#41b574" d="M383 244h4v4h-4z"/>
<path fill="#5fbf7b" d="M387 244h4v4h-4z"/>
<path fill="#71c479" d="M391 244h4v4h-4z"/>
<path fill="#86cc82" d="M395 244h4v4h-4z"/>
<path fill="#a3d581" d="M399 244h4v4h-4z"/>
<path fill="#b9d96f" d="M403 244h4v4h-4z"/>
<path fill="#e0e66d" d="M407 244h4v4h-4z"/>
<path fill="#faf066" d="M411 244h4v4h-4z"/>
<path fill="#fee963" d="M415 244h4v4h-4z"/>
<path fill="#fcdb63" d="M419 244h4v4h-4z"/>
<path fill="#fbcd5f" d="M423 244h4v4h-4z"/>
<path fill="#fabf54" d="M427 244h4v4h-4z"/>
<path fill="#f9b747" d="M431 244h4v4h-4z"/>
<path fill="#f8ae3a" d="M435 244h4v4h-4z"/>
<path fill="#f7a52d" d="M439 244h4v4h-4z"/>
<path fill="#f69b20" d="M443 244h4v4h-4z"/>
<path fill="#f59216" d="M447 244h4v4h-4z"/>
<path fill="#f38a0e" d="M451 244h4v4h-4z"/>
<path fill="#f28308" d="M455 244h4v4h-4z"/>
<path fill="#f17d03" d="M459 244h4v4h-4z"/>
<path fill="#f17901" d="M463 244h4v4h-4z"/>
<path fill="#f07905" d="M467 244h4v4h-4z"/>
<path fill="#f07808" d="M471 244h4v4h-4z"/>
<path fill="#f0770b" d="M475 244h4v4h-4z"/>
<path fill="#ef770c" d="M479 244h4v4h-4z"/>
<path fill="#ef760d" d="M483 244h4v4h-4z"/>
<path fill="#ef750e" d="M487 244h4v4h-4z"/>
<path fill="#00a57f" d="M303 248h4v4h-4z"/>
<path fill="#00a57e" d="M307 248h4v4h-4z"/>
<path fill="#00a67d" d="M311 248h4v4h-4z"/>
<path fill="#00a67c" d="M315 248h4v4h-4z"/>
<path fill="#00a67c" d="M319 248h4v4h-4z"/>
<path fill="#00a67a" d="M323 248h4v4h-4z"/>
<path fill="#00a578" d="M327 248h4v4h-4z"/>
<path fill="#00a475" d="M331 248h4v4h-4z"/>
<path fill="#00a473" d="M335 248h4v4h-4z"/>
<path fill="#00a372" d="M339 248h4v4h-4z"/>
<path fill="#00a371" d="M343 248h4v4h-4z"/>
<path fill="#00a370" d="M347 248h4v4h-4z"/>
<path fill="#00a371" d="M351 248h4v4h-4z"/>
<path fill="#00a372" d="M355 248h4v4h-4z"/>
<path fill="#00a373" d="M359 248h4v4h-4z"/>
<path fill="#00a372" d="M363 248h4v4h-4z"/>
<path fill="#00a371" d="M367 248h4v4h-4z"/>
<path fill="#00a36f" d="M371 248h4v4h-4z"/>
<path fill="#04a469" d="M375 248h4v4h-4z"/>
<path fill="#1baa6a" d="M379 248h4v4h-4z"/>
<path fill="#4cba7d" d="M383 248h4v4h-4z"/>
<path fill="#6bc386" d="M387 248h4v4h-4z"/>
<path fill="#7dc984" d="M391 248h4v4h-4z"/>
<path fill="#96d390" d="M395 248h4v4h-4z"/>
<path fill="#b1da8e" d="M399 248h4v4h-4z"/>
<path fill="#c6dd7a" d="M403 248h4v4h-4z"/>
<path fill="#e9ea79" d="M407 248h4v4h-4z"/>
<path fill="#fbec6d" d="M411 248h4v4h-4z"/>
<path fill="#fbdf6e" d="M415 248h4v4h-4z"/>
<path fill="#fbd171" d="M419 248h4v4h-4z"/>
<path fill="#fac167" d="M423 248h4v4h-4z"/>
<path fill="#f9b85d" d="M427 248h4v4h-4z"/>
<path fill="#f8b252" d="M431 248h4v4h-4z"/>
<path fill="#f7aa45" d="M435 248h4v4h-4z"/>
<path fill="#f6a037" d="M439 248h4v4h-4z"/>
<path fill="#f59729" d="M443 248h4v4h-4z"/>
<path fill="#f48d1d" d="M447 248h4v4h-4z"/>
<path fill="#f38615" d="M451 248h4v4h-4z"/>
<path fill="#f2800f" d="M455 248h4v4h-4z"/>
<path fill="#f17a0b" d="M459 248h4v4h-4z"/>
<path fill="#f07406" d="M463 248h4v4h-4z"/>
<path fill="#ef7106" d="M467 248h4v4h-4z"/>
<path fill="#ef7009" d="M471 248h4v4h-4z"/>
<path fill="#ef700c" d="M475 248h4v4h-4z"/>
<path fill="#ef700d" d="M479 248h4v4h-4z"/>
<path fill="#ef700e" d="M483 248h4v4h-4z"/>
<path fill="#ee6f0f" d="M487 248h4v4h-4z"/>
<path fill="#00a684" d="M303 252h4v4h-4z"/>
<path fill="#00a683" d="M307 252h4v4h-4z"/>
<path fill="#00a782" d="M311 252h4v4h-4z"/>
<path fill="#00a782" d="M315 252h4v4h-4z"/>
<path fill="#00a781" d="M319 252h4v4h-4z"/>
<path fill="#00a77f" d="M323 252h4v4h-4z"/>
<path fill="#00a67c" d="M327 252h4v4h-4z"/>
<path fill="#00a67a" d="M331 252h4v4h-4z"/>
<path fill="#00a578" d="M335 252h4v4h-4z"/>
<path fill="#00a477" d="M339 252h4v4h-4z"/>
<path fill="#00a476" d="M343 252h4v4h-4z"/>
<path fill="#00a475" d="M347 252h4v4h-4z"/>
<path fill="#00a476" d="M351 252h4v4h-4z"/>
<path fill="#00a477" d="M355 252h4v4h-4z"/>
<path fill="#00a578" d="M359 252h4v4h-4z"/>
<path fill="#00a577" d="M363 252h4v4h-4z"/>
<path fill="#00a476" d="M367 252h4v4h-4z"/>
<path fill="#00a472" d="M371 252h4v4h-4z"/>
<path fill="#05a56e" d="M375 252h4v4h-4z"/>
<path fill="#2bb07a" d="M379 252h4v4h-4z"/>
<path fill="#58be8a" d="M383 252h4v4h-4z"/>
<path fill="#78c791" d="M387 252h4v4h-4z"/>
<path fill="#8dcf93" d="M391 252h4v4h-4z"/>
<path fill="#a8daa0" d="M395 252h4v4h-4z"/>
<path fill="#c1e19e" d="M399 252h4v4h-4z"/>
<path fill="#d6e58f" d="M403 252h4v4h-4z"/>
<path fill="#f2ee8a" d="M407 252h4v4h-4z"/>
<path fill="#f8e37f" d="M411 252h4v4h-4z"/>
<path fill="#f9d481" d="M415 252h4v4h-4z"/>
<path fill="#fac57b" d="M419 252h4v4h-4z"/>
<path fill="#fab86e" d="M423 252h4v4h-4z"/>
<path fill="#f9b163" d="M427 252h4v4h-4z"/>
<path fill="#f8ac5a" d="M431 252h4v4h-4z"/>
<path fill="#f7a54f" d="M435 252h4v4h-4z"/>
<path fill="#f69c40" d="M439 252h4v4h-4z"/>
<path fill="#f49331" d="M443 252h4v4h-4z"/>
<path fill="#f38924" d="M447 252h4v4h-4z"/>
<path fill="#f2821c" d="M451 252h4v4h-4z"/>
<path fill="#f17b16" d="M455 252h4v4h-4z"/>
<path fill="#f07410" d="M459 252h4v4h-4z"/>
<path fill="#f06e0b" d="M463 252h4v4h-4z"/>
<path fill="#ef6907" d="M467 252h4v4h-4z"/>
<path fill="#ef690a" d="M471 252h4v4h-4z"/>
<path fill="#ee690d" d="M475 252h4v4h-4z"/>
<path fill="#ee690e" d="M479 252h4v4h-4z"/>
<path fill="#ee690f" d="M483 252h4v4h-4z"/>
<path fill="#ee6810" d="M487 252h4v4h-4z"/>
<path fill="#ed6710" d="M491 252h4v4h-4z"/>
<path fill="#00a788" d="M303 256h4v4h-4z"/>
<path fill="#00a788" d="M307 256h4v4h-4z"/>
<path fill="#00a887" d="M311 256h4v4h-4z"/>
<path fill="#00a886" d="M315 256h4v4h-4z"/>
<path fill="#00a985" d="M319 256h4v4h-4z"/>
<path fill="#00a884" d="M323 256h4v4h-4z"/>
<path fill="#00a881" d="M327 256h4v4h-4z"/>
<path fill="#00a77f" d="M331 256h4v4h-4z"/>
<path fill="#00a67d" d="M335 256h4v4h-4z"/>
<path fill="#00a67d" d="M339 256h4v4h-4z"/>
<path fill="#00a57c" d="M343 256h4v4h-4z"/>
<path fill="#00a57c" d="M347 256h4v4h-4z"/>
<path fill="#00a57c" d="M351 256h4v4h-4z"/>
<path fill="#00a57d" d="M355 256h4v4h-4z"/>
<path fill="#00a67e" d="M359 256h4v4h-4z"/>
<path fill="#00a67d" d="M363 256h4v4h-4z"/>
<path fill="#00a57c" d="M367 256h4v4h-4z"/>
<path fill="#00a579" d="M371 256h4v4h-4z"/>
<path fill="#06a673" d="M375 256h4v4h-4z"/>
<path fill="#3bb789" d="M379 256h4v4h-4z"/>
<path fill="#62c396" d="M383 256h4v4h-4z"/>
<path fill="#7eca9b" d="M387 256h4v4h-4z"/>
<path fill="#9cd5a4" d="M391 256h4v4h-4z"/>
<path fill="#b7e0b0" d="M395 256h4v4h-4z"/>
<path fill="#cee5ab" d="M399 256h4v4h-4z"/>
<path fill="#e4eca6" d="M403 256h4v4h-4z"/>
<path fill="#f4ed9c" d="M407 256h4v4h-4z"/>
<path fill="#f5db97" d="M411 256h4v4h-4z"/>
<path fill="#f7c98e" d="M415 256h4v4h-4z"/>
<path fill="#f9bb81" d="M419 256h4v4h-4z"/>
<path fill="#faae70" d="M423 256h4v4h-4z"/>
<path fill="#f9a867" d="M427 256h4v4h-4z"/>
<path fill="#f8a55f" d="M431 256h4v4h-4z"/>
<path fill="#f6a155" d="M435 256h4v4h-4z"/>
<path fill="#f59947" d="M439 256h4v4h-4z"/>
<path fill="#f48e38" d="M443 256h4v4h-4z"/>
<path fill="#f3842b" d="M447 256h4v4h-4z"/>
<path fill="#f27c22" d="M451 256h4v4h-4z"/>
<path fill="#f1751b" d="M455 256h4v4h-4z"/>
<path fill="#f06f16" d="M459 256h4v4h-4z"/>
<path fill="#ef6911" d="M463 256h4v4h-4z"/>
<path fill="#ee630b" d="M467 256h4v4h-4z"/>
<path fill="#ee600c" d="M471 256h4v4h-4z"/>
<path fill="#ee600f" d="M475 256h4v4h-4z"/>
<path fill="#ed5f10" d="M479 256h4v4h-4z"/>
<path fill="#ed5f11" d="M483 256h4v4h-4z"/>
<path fill="#ed5f11" d="M487 256h4v4h-4z"/>
<path fill="#ec5e12" d="M491 256h4v4h-4z"/>
<path fill="#ec5d12" d="M495 256h4v4h-4z"/>
<path fill="#00a88c" d="M303 260h4v4h-4z"/>
<path fill="#00a88c" d="M307 260h4v4h-4z"/>
<path fill="#00a98c" d="M311 260h4v4h-4z"/>
<path fill="#00a98b" d="M315 260h4v4h-4z"/>
<path fill="#00aa8a" d="M319 260h4v4h-4z"/>
<path fill="#00aa89" d="M323 260h4v4h-4z"/>
<path fill="#00a987" d="M327 260h4v4h-4z"/>
<path fill="#00a885" d="M331 260h4v4h-4z"/>
<path fill="#00a883" d="M335 260h4v4h-4z"/>
<path fill="#00a782" d="M339 260h4v4h-4z"/>
<path fill="#00a782" d="M343 260h4v4h-4z"/>
<path fill="#00a682" d="M347 260h4v4h-4z"/>
<path fill="#00a682" d="M351 260h4v4h-4z"/>
<path fill="#00a684" d="M355 260h4v4h-4z"/>
<path fill="#00a784" d="M359 260h4v4h-4z"/>
<path fill="#00a784" d="M363 260h4v4h-4z"/>
<path fill="#00a782" d="M367 260h4v4h-4z"/>
<path fill="#03a780" d="M371 260h4v4h-4z"/>
<path fill="#15ac82" d="M375 260h4v4h-4z"/>
<path fill="#47bb96" d="M379 260h4v4h-4z"/>
<path fill="#6dc7a4" d="M383 260h4v4h-4z"/>
<path fill="#83cda7" d="M387 260h4v4h-4z"/>
<path fill="#a8dab5" d="M391 260h4v4h-4z"/>
<path fill="#c1e4bf" d="M395 260h4v4h-4z"/>
<path fill="#d7e9b9" d="M399 260h4v4h-4z"/>
<path fill="#f0f2b6" d="M403 260h4v4h-4z"/>
<path fill="#f1e7ae" d="M407 260h4v4h-4z"/>
<path fill="#f2d2a5" d="M411 260h4v4h-4z"/>
<path fill="#f5c196" d="M415 260h4v4h-4z"/>
<path fill="#f8b384" d="M419 260h4v4h-4z"/>
<path fill="#f9a773" d="M423 260h4v4h-4z"/>
<path fill="#f8a26a" d="M427 260h4v4h-4z"/>
<path fill="#f7a063" d="M431 260h4v4h-4z"/>
<path fill="#f69b5a" d="M435 260h4v4h-4z"/>
<path fill="#f5934d" d="M439 260h4v4h-4z"/>
<path fill="#f4893e" d="M443 260h4v4h-4z"/>
<path fill="#f37f32" d="M447 260h4v4h-4z"/>
<path fill="#f27628" d="M451 260h4v4h-4z"/>
<path fill="#f16f21" d="M455 260h4v4h-4z"/>
<path fill="#f0681b" d="M459 260h4v4h-4z"/>
<path fill="#ef6117" d="M463 260h4v4h-4z"/>
<path fill="#ed5a12" d="M467 260h4v4h-4z"/>
<path fill="#ed540e" d="M471 260h4v4h-4z"/>
<path fill="#ec5411" d="M475 260h4v4h-4z"/>
<path fill="#ec5413" d="M479 260h4v4h-4z"/>
<path fill="#ec5513" d="M483 260h4v4h-4z"/>
<path fill="#ec5513" d="M487 260h4v4h-4z"/>
<path fill="#eb5513" d="M491 260h4v4h-4z"/>
<path fill="#eb5413" d="M495 260h4v4h-4z"/>
<path fill="#eb5414" d="M499 260h4v4h-4z"/>
<path fill="#00a890" d="M303 264h4v4h-4z"/>
<path fill="#00a990" d="M307 264h4v4h-4z"/>
<path fill="#00aa90" d="M311 264h4v4h-4z"/>
<path fill="#00aa8f" d="M315 264h4v4h-4z"/>
<path fill="#00ab8e" d="M319 264h4v4h-4z"/>
<path fill="#00ab8d" d="M323 264h4v4h-4z"/>
<path fill="#00aa8c" d="M327 264h4v4h-4z"/>
<path fill="#00aa8b" d="M331 264h4v4h-4z"/>
<path fill="#00a989" d="M335 264h4v4h-4z"/>
<path fill="#00a988" d="M339 264h4v4h-4z"/>
<path fill="#00a887" d="M343 264h4v4h-4z"/>
<path fill="#00a887" d="M347 264h4v4h-4z"/>
<path fill="#00a887" d="M351 264h4v4h-4z"/>
<path fill="#00a888" d="M355 264h4v4h-4z"/>
<path fill="#00a889" d="M359 264h4v4h-4z"/>
<path fill="#00a78a" d="M363 264h4v4h-4z"/>
<path fill="#01a789" d="M367 264h4v4h-4z"/>
<path fill="#05a787" d="M371 264h4v4h-4z"/>
<path fill="#20b090" d="M375 264h4v4h-4z"/>
<path fill="#53c0a6" d="M379 264h4v4h-4z"/>
<path fill="#72c9af" d="M383 264h4v4h-4z"/>
<path fill="#88d0b4" d="M387 264h4v4h-4z"/>
<path fill="#b3dfc2" d="M391 264h4v4h-4z"/>
<path fill="#cde9cf" d="M395 264h4v4h-4z"/>
<path fill="#e5eec7" d="M399 264h4v4h-4z"/>
<path fill="#f8f2c3" d="M403 264h4v4h-4z"/>
<path fill="#f1dfbd" d="M407 264h4v4h-4z"/>
<path fill="#f1ccad" d="M411 264h4v4h-4z"/>
<path fill="#f4bc9c" d="M415 264h4v4h-4z"/>
<path fill="#f6ae89" d="M419 264h4v4h-4z"/>
<path fill="#f8a379" d="M423 264h4v4h-4z"/>
<path fill="#f89c6e" d="M427 264h4v4h-4z"/>
<path fill="#f79965" d="M431 264h4v4h-4z"/>
<path fill="#f6945d" d="M435 264h4v4h-4z"/>
<path fill="#f48c51" d="M439 264h4v4h-4z"/>
<path fill="#f38244" d="M443 264h4v4h-4z"/>
<path fill="#f27739" d="M447 264h4v4h-4z"/>
<path fill="#f16e30" d="M451 264h4v4h-4z"/>
<path fill="#f06628" d="M455 264h4v4h-4z"/>
<path fill="#ef5e22" d="M459 264h4v4h-4z"/>
<path fill="#ee571d" d="M463 264h4v4h-4z"/>
<path fill="#ed5019" d="M467 264h4v4h-4z"/>
<path fill="#eb4a13" d="M471 264h4v4h-4z"/>
<path fill="#eb4814" d="M475 264h4v4h-4z"/>
<path fill="#eb4916" d="M479 264h4v4h-4z"/>
<path fill="#eb4a16" d="M483 264h4v4h-4z"/>
<path fill="#eb4b16" d="M487 264h4v4h-4z"/>
<path fill="#eb4c15" d="M491 264h4v4h-4z"/>
<path fill="#ea4c15" d="M495 264h4v4h-4z"/>
<path fill="#ea4c15" d="M499 264h4v4h-4z"/>
<path fill="#00a993" d="M303 268h4v4h-4z"/>
<path fill="#00aa93" d="M307 268h4v4h-4z"/>
<path fill="#00aa93" d="M311 268h4v4h-4z"/>
<path fill="#00ab93" d="M315 268h4v4h-4z"/>
<path fill="#00ab93" d="M319 268h4v4h-4z"/>
<path fill="#00ab92" d="M323 268h4v4h-4z"/>
<path fill="#00ab91" d="M327 268h4v4h-4z"/>
<path fill="#00ab91" d="M331 268h4v4h-4z"/>
<path fill="#00aa8f" d="M335 268h4v4h-4z"/>
<path fill="#00aa8e" d="M339 268h4v4h-4z"/>
<path fill="#00a98d" d="M343 268h4v4h-4z"/>
<path fill="#00a98c" d="M347 268h4v4h-4z"/>
<path fill="#00a98c" d="M351 268h4v4h-4z"/>
<path fill="#00a98c" d="M355 268h4v4h-4z"/>
<path fill="#00a98c" d="M359 268h4v4h-4z"/>
<path fill="#00a88d" d="M363 268h4v4h-4z"/>
<path fill="#02a88c" d="M367 268h4v4h-4z"/>
<path fill="#05a78c" d="M371 268h4v4h-4z"/>
<path fill="#24b19a" d="M375 268h4v4h-4z"/>
<path fill="#56c2af" d="M379 268h4v4h-4z"/>
<path fill="#76cbba" d="M383 268h4v4h-4z"/>
<path fill="#93d4c1" d="M387 268h4v4h-4z"/>
<path fill="#bbe3ce" d="M391 268h4v4h-4z"/>
<path fill="#dcf0df" d="M395 268h4v4h-4z"/>
<path fill="#f6f6db" d="M399 268h4v4h-4z"/>
<path fill="#f7edd4" d="M403 268h4v4h-4z"/>
<path fill="#f2dac3" d="M407 268h4v4h-4z"/>
<path fill="#f2c8b2" d="M411 268h4v4h-4z"/>
<path fill="#f3b8a0" d="M415 268h4v4h-4z"/>
<path fill="#f6a88c" d="M419 268h4v4h-4z"/>
<path fill="#f89c7c" d="M423 268h4v4h-4z"/>
<path fill="#f89671" d="M427 268h4v4h-4z"/>
<path fill="#f69069" d="M431 268h4v4h-4z"/>
<path fill="#f58a61" d="M435 268h4v4h-4z"/>
<path fill="#f48258" d="M439 268h4v4h-4z"/>
<path fill="#f2784d" d="M443 268h4v4h-4z"/>
<path fill="#f16e42" d="M447 268h4v4h-4z"/>
<path fill="#f06538" d="M451 268h4v4h-4z"/>
<path fill="#ef5c30" d="M455 268h4v4h-4z"/>
<path fill="#ee5429" d="M459 268h4v4h-4z"/>
<path fill="#ed4d23" d="M463 268h4v4h-4z"/>
<path fill="#ec461e" d="M467 268h4v4h-4z"/>
<path fill="#ea3f18" d="M471 268h4v4h-4z"/>
<path fill="#ea3e18" d="M475 268h4v4h-4z"/>
<path fill="#ea3f19" d="M479 268h4v4h-4z"/>
<path fill="#ea4119" d="M483 268h4v4h-4z"/>
<path fill="#ea4218" d="M487 268h4v4h-4z"/>
<path fill="#ea4317" d="M491 268h4v4h-4z"/>
<path fill="#ea4317" d="M495 268h4v4h-4z"/>
<path fill="#ea4417" d="M499 268h4v4h-4z"/>
<path fill="#e94417" d="M503 268h4v4h-4z"/>
<path fill="#00a996" d="M303 272h4v4h-4z"/>
<path fill="#00aa97" d="M307 272h4v4h-4z"/>
<path fill="#00ab97" d="M311 272h4v4h-4z"/>
<path fill="#00ab97" d="M315 272h4v4h-4z"/>
<path fill="#00ac97" d="M319 272h4v4h-4z"/>
<path fill="#00ac96" d="M323 272h4v4h-4z"/>
<path fill="#00ac96" d="M327 272h4v4h-4z"/>
<path fill="#00ac96" d="M331 272h4v4h-4z"/>
<path fill="#00ab94" d="M335 272h4v4h-4z"/>
<path fill="#00ab92" d="M339 272h4v4h-4z"/>
<path fill="#00aa91" d="M343 272h4v4h-4z"/>
<path fill="#00aa90" d="M347 272h4v4h-4z"/>
<path fill="#00aa8f" d="M351 272h4v4h-4z"/>
<path fill="#00a98e" d="M355 272h4v4h-4z"/>
<path fill="#01aa8f" d="M359 272h4v4h-4z"/>
<path fill="#02aa8f" d="M363 272h4v4h-4z"/>
<path fill="#03a98e" d="M367 272h4v4h-4z"/>
<path fill="#04a88e" d="M371 272h4v4h-4z"/>
<path fill="#2eb5a2" d="M375 272h4v4h-4z"/>
<path fill="#5ac4b7" d="M379 272h4v4h-4z"/>
<path fill="#79cec4" d="M383 272h4v4h-4z"/>
<path fill="#a0dbd1" d="M387 272h4v4h-4z"/>
<path fill="#cae9dd" d="M391 272h4v4h-4z"/>
<path fill="#eff8f0" d="M395 272h4v4h-4z"/>
<path fill="#fcf9eb" d="M399 272h4v4h-4z"/>
<path fill="#f7e7d8" d="M403 272h4v4h-4z"/>
<path fill="#f3d3c5" d="M407 272h4v4h-4z"/>
<path fill="#f2c0b2" d="M411 272h4v4h-4z"/>
<path fill="#f3aea2" d="M415 272h4v4h-4z"/>
<path fill="#f69f91" d="M419 272h4v4h-4z"/>
<path fill="#f79382" d="M423 272h4v4h-4z"/>
<path fill="#f78b77" d="M427 272h4v4h-4z"/>
<path fill="#f5856e" d="M431 272h4v4h-4z"/>
<path fill="#f47e66" d="M435 272h4v4h-4z"/>
<path fill="#f2765c" d="M439 272h4v4h-4z"/>
<path fill="#f16d52" d="M443 272h4v4h-4z"/>
<path fill="#f06347" d="M447 272h4v4h-4z"/>
<path fill="#ef593d" d="M451 272h4v4h-4z"/>
<path fill="#ee5035" d="M455 272h4v4h-4z"/>
<path fill="#ed492d" d="M459 272h4v4h-4z"/>
<path fill="#ec4227" d="M463 272h4v4h-4z"/>
<path fill="#eb3b22" d="M467 272h4v4h-4z"/>
<path fill="#ea351c" d="M471 272h4v4h-4z"/>
<path fill="#e9331b" d="M475 272h4v4h-4z"/>
<path fill="#e9361c" d="M479 272h4v4h-4z"/>
<path fill="#e9381c" d="M483 272h4v4h-4z"/>
<path fill="#e93a1b" d="M487 272h4v4h-4z"/>
<path fill="#e93b19" d="M491 272h4v4h-4z"/>
<path fill="#e93b19" d="M495 272h4v4h-4z"/>
<path fill="#e93c18" d="M499 272h4v4h-4z"/>
<path fill="#e93c18" d="M503 272h4v4h-4z"/>
<path fill="#e83c18" d="M507 272h4v4h-4z"/>
<path fill="#00ab9b" d="M307 276h4v4h-4z"/>
<path fill="#00ab9c" d="M311 276h4v4h-4z"/>
<path fill="#00ac9c" d="M315 276h4v4h-4z"/>
<path fill="#00ac9c" d="M319 276h4v4h-4z"/>
<path fill="#00ac9b" d="M323 276h4v4h-4z"/>
<path fill="#00ad9b" d="M327 276h4v4h-4z"/>
<path fill="#00ac9a" d="M331 276h4v4h-4z"/>
<path fill="#00ac99" d="M335 276h4v4h-4z"/>
<path fill="#00ab97" d="M339 276h4v4h-4z"/>
<path fill="#00ab95" d="M343 276h4v4h-4z"/>
<path fill="#00ab93" d="M347 276h4v4h-4z"/>
<path fill="#00aa92" d="M351 276h4v4h-4z"/>
<path fill="#01aa90" d="M355 276h4v4h-4z"/>
<path fill="#02ab90" d="M359 276h4v4h-4z"/>
<path fill="#05ab91" d="M363 276h4v4h-4z"/>
<path fill="#06ab91" d="M367 276h4v4h-4z"/>
<path fill="#0dab95" d="M371 276h4v4h-4z"/>
<path fill="#35b8a9" d="M375 276h4v4h-4z"/>
<path fill="#5ec7be" d="M379 276h4v4h-4z"/>
<path fill="#7fd2cd" d="M383 276h4v4h-4z"/>
<path fill="#ade1de" d="M387 276h4v4h-4z"/>
<path fill="#d9f0ee" d="M391 276h4v4h-4z"/>
<path fill="#fffffe" d="M395 276h4v4h-4z"/>
<path fill="#fcf1ee" d="M399 276h4v4h-4z"/>
<path fill="#f7dbd8" d="M403 276h4v4h-4z"/>
<path fill="#f3c6c7" d="M407 276h4v4h-4z"/>
<path fill="#f2b3b6" d="M411 276h4v4h-4z"/>
<path fill="#f3a1a6" d="M415 276h4v4h-4z"/>
<path fill="#f59396" d="M419 276h4v4h-4z"/>
<path fill="#f68786" d="M423 276h4v4h-4z"/>
<path fill="#f57e7a" d="M427 276h4v4h-4z"/>
<path fill="#f37770" d="M431 276h4v4h-4z"/>
<path fill="#f27168" d="M435 276h4v4h-4z"/>
<path fill="#f1695f" d="M439 276h4v4h-4z"/>
<path fill="#f06056" d="M443 276h4v4h-4z"/>
<path fill="#ef574b" d="M447 276h4v4h-4z"/>
<path fill="#ee4e42" d="M451 276h4v4h-4z"/>
<path fill="#ec4539" d="M455 276h4v4h-4z"/>
<path fill="#eb3e32" d="M459 276h4v4h-4z"/>
<path fill="#ea382b" d="M463 276h4v4h-4z"/>
<path fill="#e93226" d="M467 276h4v4h-4z"/>
<path fill="#e82c20" d="M471 276h4v4h-4z"/>
<path fill="#e82b1e" d="M475 276h4v4h-4z"/>
<path fill="#e82e1e" d="M479 276h4v4h-4z"/>
<path fill="#e8301e" d="M483 276h4v4h-4z"/>
<path fill="#e8321c" d="M487 276h4v4h-4z"/>
<path fill="#e8331b" d="M491 276h4v4h-4z"/>
<path fill="#e7341a" d="M495 276h4v4h-4z"/>
<path fill="#e7351a" d="M499 276h4v4h-4z"/>
<path fill="#e73519" d="M503 276h4v4h-4z"/>
<path fill="#e73619" d="M507 276h4v4h-4z"/>
<path fill="#e73619" d="M511 276h4v4h-4z"/>
<path fill="#00aba1" d="M307 280h4v4h-4z"/>
<path fill="#00aca1" d="M311 280h4v4h-4z"/>
<path fill="#00ada2" d="M315 280h4v4h-4z"/>
<path fill="#00ada2" d="M319 280h4v4h-4z"/>
<path fill="#00ada2" d="M323 280h4v4h-4z"/>
<path fill="#00ada1" d="M327 280h4v4h-4z"/>
<path fill="#00ada0" d="M331 280h4v4h-4z"/>
<path fill="#00ad9f" d="M335 280h4v4h-4z"/>
<path fill="#00ad9d" d="M339 280h4v4h-4z"/>
<path fill="#00ac9c" d="M343 280h4v4h-4z"/>
<path fill="#00ac9a" d="M347 280h4v4h-4z"/>
<path fill="#00ac98" d="M351 280h4v4h-4z"/>
<path fill="#01ac97" d="M355 280h4v4h-4z"/>
<path fill="#04ad97" d="M359 280h4v4h-4z"/>
<path fill="#09ae99" d="M363 280h4v4h-4z"/>
<path fill="#0caf9d" d="M367 280h4v4h-4z"/>
<path fill="#23b6a9" d="M371 280h4v4h-4z"/>
<path fill="#47c2bd" d="M375 280h4v4h-4z"/>
<path fill="#69cdd0" d="M379 280h4v4h-4z"/>
<path fill="#8ed9e2" d="M383 280h4v4h-4z"/>
<path fill="#bfe8f3" d="M387 280h4v4h-4z"/>
<path fill="#e8f2fa" d="M391 280h4v4h-4z"/>
<path fill="#fffafa" d="M395 280h4v4h-4z"/>
<path fill="#feebf0" d="M399 280h4v4h-4z"/>
<path fill="#f9d8dd" d="M403 280h4v4h-4z"/>
<path fill="#f5c3c9" d="M407 280h4v4h-4z"/>
<path fill="#f3afb5" d="M411 280h4v4h-4z"/>
<path fill="#f39da5" d="M415 280h4v4h-4z"/>
<path fill="#f48f96" d="M419 280h4v4h-4z"/>
<path fill="#f58487" d="M423 280h4v4h-4z"/>
<path fill="#f47a7a" d="M427 280h4v4h-4z"/>
<path fill="#f27370" d="M431 280h4v4h-4z"/>
<path fill="#f16b68" d="M435 280h4v4h-4z"/>
<path fill="#f06360" d="M439 280h4v4h-4z"/>
<path fill="#ef5b57" d="M443 280h4v4h-4z"/>
<path fill="#ee524e" d="M447 280h4v4h-4z"/>
<path fill="#ed4945" d="M451 280h4v4h-4z"/>
<path fill="#ec413d" d="M455 280h4v4h-4z"/>
<path fill="#eb3935" d="M459 280h4v4h-4z"/>
<path fill="#ea332f" d="M463 280h4v4h-4z"/>
<path fill="#e92e28" d="M467 280h4v4h-4z"/>
<path fill="#e82922" d="M471 280h4v4h-4z"/>
<path fill="#e72820" d="M475 280h4v4h-4z"/>
<path fill="#e72b20" d="M479 280h4v4h-4z"/>
<path fill="#e72e1f" d="M483 280h4v4h-4z"/>
<path fill="#e72f1d" d="M487 280h4v4h-4z"/>
<path fill="#e7301b" d="M491 280h4v4h-4z"/>
<path fill="#e7311a" d="M495 280h4v4h-4z"/>
<path fill="#e7311a" d="M499 280h4v4h-4z"/>
<path fill="#e7321a" d="M503 280h4v4h-4z"/>
<path fill="#e7321a" d="M507 280h4v4h-4z"/>
<path fill="#e7331a" d="M511 280h4v4h-4z"/>
<path fill="#e7331a" d="M515 280h4v4h-4z"/>
<path fill="#00aca6" d="M307 284h4v4h-4z"/>
<path fill="#00ada7" d="M311 284h4v4h-4z"/>
<path fill="#00ada8" d="M315 284h4v4h-4z"/>
<path fill="#00aea9" d="M319 284h4v4h-4z"/>
<path fill="#00aea9" d="M323 284h4v4h-4z"/>
<path fill="#00aea8" d="M327 284h4v4h-4z"/>
<path fill="#00aea6" d="M331 284h4v4h-4z"/>
<path fill="#00aea5" d="M335 284h4v4h-4z"/>
<path fill="#00aea4" d="M339 284h4v4h-4z"/>
<path fill="#00aea2" d="M343 284h4v4h-4z"/>
<path fill="#00aea1" d="M347 284h4v4h-4z"/>
<path fill="#00ae9f" d="M351 284h4v4h-4z"/>
<path fill="#01af9e" d="M355 284h4v4h-4z"/>
<path fill="#04b09e" d="M359 284h4v4h-4z"/>
<path fill="#0bb1a3" d="M363 284h4v4h-4z"/>
<path fill="#14b3ab" d="M367 284h4v4h-4z"/>
<path fill="#3cbebf" d="M371 284h4v4h-4z"/>
<path fill="#5bc8d1" d="M375 284h4v4h-4z"/>
<path fill="#73cfe2" d="M379 284h4v4h-4z"/>
<path fill="#9bd9ee" d="M383 284h4v4h-4z"/>
<path fill="#c8e2f5" d="M387 284h4v4h-4z"/>
<path fill="#efecf6" d="M391 284h4v4h-4z"/>
<path fill="#fff1f6" d="M395 284h4v4h-4z"/>
<path fill="#ffe2ec" d="M399 284h4v4h-4z"/>
<path fill="#f9cbdc" d="M403 284h4v4h-4z"/>
<path fill="#f6bacc" d="M407 284h4v4h-4z"/>
<path fill="#f4a7bb" d="M411 284h4v4h-4z"/>
<path fill="#f396ab" d="M415 284h4v4h-4z"/>
<path fill="#f3899a" d="M419 284h4v4h-4z"/>
<path fill="#f3808b" d="M423 284h4v4h-4z"/>
<path fill="#f2787c" d="M427 284h4v4h-4z"/>
<path fill="#f16f70" d="M431 284h4v4h-4z"/>
<path fill="#f06767" d="M435 284h4v4h-4z"/>
<path fill="#ef5f60" d="M439 284h4v4h-4z"/>
<path fill="#ef5758" d="M443 284h4v4h-4z"/>
<path fill="#ee4f50" d="M447 284h4v4h-4z"/>
<path fill="#ed4648" d="M451 284h4v4h-4z"/>
<path fill="#ec3f40" d="M455 284h4v4h-4z"/>
<path fill="#eb3838" d="M459 284h4v4h-4z"/>
<path fill="#ea3231" d="M463 284h4v4h-4z"/>
<path fill="#e92d2a" d="M467 284h4v4h-4z"/>
<path fill="#e82923" d="M471 284h4v4h-4z"/>
<path fill="#e82921" d="M475 284h4v4h-4z"/>
<path fill="#e72c20" d="M479 284h4v4h-4z"/>
<path fill="#e72e1f" d="M483 284h4v4h-4z"/>
<path fill="#e72f1d" d="M487 284h4v4h-4z"/>
<path fill="#e7301b" d="M491 284h4v4h-4z"/>
<path fill="#e7301a" d="M495 284h4v4h-4z"/>
<path fill="#e7311a" d="M499 284h4v4h-4z"/>
<path fill="#e7311a" d="M503 284h4v4h-4z"/>
<path fill="#e7311a" d="M507 284h4v4h-4z"/>
<path fill="#e7321a" d="M511 284h4v4h-4z"/>
<path fill="#e7321a" d="M515 284h4v4h-4z"/>
<path fill="#00adab" d="M307 288h4v4h-4z"/>
<path fill="#00adad" d="M311 288h4v4h-4z"/>
<path fill="#00aeae" d="M315 288h4v4h-4z"/>
<path fill="#00aeaf" d="M319 288h4v4h-4z"/>
<path fill="#00afaf" d="M323 288h4v4h-4z"/>
<path fill="#00afaf" d="M327 288h4v4h-4z"/>
<path fill="#00afad" d="M331 288h4v4h-4z"/>
<path fill="#00afac" d="M335 288h4v4h-4z"/>
<path fill="#01b0ab" d="M339 288h4v4h-4z"/>
<path fill="#00b0aa" d="M343 288h4v4h-4z"/>
<path fill="#00afa9" d="M347 288h4v4h-4z"/>
<path fill="#00afa8" d="M351 288h4v4h-4z"/>
<path fill="#00afa8" d="M355 288h4v4h-4z"/>
<path fill="#02afa8" d="M359 288h4v4h-4z"/>
<path fill="#0bb0af" d="M363 288h4v4h-4z"/>
<path fill="#28b9bf" d="M367 288h4v4h-4z"/>
<path fill="#4fc5d3" d="M371 288h4v4h-4z"/>
<path fill="#65c8df" d="M375 288h4v4h-4z"/>
<path fill="#7ccae7" d="M379 288h4v4h-4z"/>
<path fill="#a1d2ee" d="M383 288h4v4h-4z"/>
<path fill="#cddcf1" d="M387 288h4v4h-4z"/>
<path fill="#f6e4f1" d="M391 288h4v4h-4z"/>
<path fill="#ffe6f2" d="M395 288h4v4h-4z"/>
<path fill="#fed7e8" d="M399 288h4v4h-4z"/>
<path fill="#f8bcd8" d="M403 288h4v4h-4z"/>
<path fill="#f5aac9" d="M407 288h4v4h-4z"/>
<path fill="#f49aba" d="M411 288h4v4h-4z"/>
<path fill="#f38aac" d="M415 288h4v4h-4z"/>
<path fill="#f27f9e" d="M419 288h4v4h-4z"/>
<path fill="#f27991" d="M423 288h4v4h-4z"/>
<path fill="#f27284" d="M427 288h4v4h-4z"/>
<path fill="#f16a78" d="M431 288h4v4h-4z"/>
<path fill="#f0626d" d="M435 288h4v4h-4z"/>
<path fill="#ef5b64" d="M439 288h4v4h-4z"/>
<path fill="#ee545b" d="M443 288h4v4h-4z"/>
<path fill="#ee4c52" d="M447 288h4v4h-4z"/>
<path fill="#ed454a" d="M451 288h4v4h-4z"/>
<path fill="#ec3e42" d="M455 288h4v4h-4z"/>
<path fill="#eb373a" d="M459 288h4v4h-4z"/>
<path fill="#ea3133" d="M463 288h4v4h-4z"/>
<path fill="#e92d2c" d="M467 288h4v4h-4z"/>
<path fill="#e82924" d="M471 288h4v4h-4z"/>
<path fill="#e82b22" d="M475 288h4v4h-4z"/>
<path fill="#e82d21" d="M479 288h4v4h-4z"/>
<path fill="#e72f1f" d="M483 288h4v4h-4z"/>
<path fill="#e72f1c" d="M487 288h4v4h-4z"/>
<path fill="#e7301b" d="M491 288h4v4h-4z"/>
<path fill="#e7301a" d="M495 288h4v4h-4z"/>
<path fill="#e7301a" d="M499 288h4v4h-4z"/>
<path fill="#e7311a" d="M503 288h4v4h-4z"/>
<path fill="#e7311a" d="M507 288h4v4h-4z"/>
<path fill="#e7311a" d="M511 288h4v4h-4z"/>
<path fill="#e7321a" d="M515 288h4v4h-4z"/>
<path fill="#e7321a" d="M519 288h4v4h-4z"/>
<path fill="#00adb0" d="M307 292h4v4h-4z"/>
<path fill="#00aeb2" d="M311 292h4v4h-4z"/>
<path fill="#00afb4" d="M315 292h4v4h-4z"/>
<path fill="#00afb6" d="M319 292h4v4h-4z"/>
<path fill="#00b0b6" d="M323 292h4v4h-4z"/>
<path fill="#00afb6" d="M327 292h4v4h-4z"/>
<path fill="#00afb5" d="M331 292h4v4h-4z"/>
<path fill="#00afb4" d="M335 292h4v4h-4z"/>
<path fill="#01afb4" d="M339 292h4v4h-4z"/>
<path fill="#00b0b4" d="M343 292h4v4h-4z"/>
<path fill="#00b0b4" d="M347 292h4v4h-4z"/>
<path fill="#00b0b4" d="M351 292h4v4h-4z"/>
<path fill="#00b0b5" d="M355 292h4v4h-4z"/>
<path fill="#00b0b6" d="M359 292h4v4h-4z"/>
<path fill="#05b1be" d="M363 292h4v4h-4z"/>
<path fill="#30bcce" d="M367 292h4v4h-4z"/>
<path fill="#58c2da" d="M371 292h4v4h-4z"/>
<path fill="#69c2e1" d="M375 292h4v4h-4z"/>
<path fill="#7dc2e7" d="M379 292h4v4h-4z"/>
<path fill="#a3caeb" d="M383 292h4v4h-4z"/>
<path fill="#d3d3ec" d="M387 292h4v4h-4z"/>
<path fill="#f5d9ed" d="M391 292h4v4h-4z"/>
<path fill="#fed9ed" d="M395 292h4v4h-4z"/>
<path fill="#facbe3" d="M399 292h4v4h-4z"/>
<path fill="#f6b1d5" d="M403 292h4v4h-4z"/>
<path fill="#f397c4" d="M407 292h4v4h-4z"/>
<path fill="#f289b6" d="M411 292h4v4h-4z"/>
<path fill="#f17daa" d="M415 292h4v4h-4z"/>
<path fill="#f1769f" d="M419 292h4v4h-4z"/>
<path fill="#f17194" d="M423 292h4v4h-4z"/>
<path fill="#f16c89" d="M427 292h4v4h-4z"/>
<path fill="#f0647d" d="M431 292h4v4h-4z"/>
<path fill="#ef5b73" d="M435 292h4v4h-4z"/>
<path fill="#ef546a" d="M439 292h4v4h-4z"/>
<path fill="#ef4d61" d="M443 292h4v4h-4z"/>
<path fill="#ee4658" d="M447 292h4v4h-4z"/>
<path fill="#ed404f" d="M451 292h4v4h-4z"/>
<path fill="#ec3b46" d="M455 292h4v4h-4z"/>
<path fill="#ec363d" d="M459 292h4v4h-4z"/>
<path fill="#eb3235" d="M463 292h4v4h-4z"/>
<path fill="#e92e2c" d="M467 292h4v4h-4z"/>
<path fill="#e82a24" d="M471 292h4v4h-4z"/>
<path fill="#e82c22" d="M475 292h4v4h-4z"/>
<path fill="#e82e21" d="M479 292h4v4h-4z"/>
<path fill="#e72f1e" d="M483 292h4v4h-4z"/>
<path fill="#e7301c" d="M487 292h4v4h-4z"/>
<path fill="#e7301a" d="M491 292h4v4h-4z"/>
<path fill="#e73019" d="M495 292h4v4h-4z"/>
<path fill="#e73019" d="M499 292h4v4h-4z"/>
<path fill="#e7301a" d="M503 292h4v4h-4z"/>
<path fill="#e7311a" d="M507 292h4v4h-4z"/>
<path fill="#e7311a" d="M511 292h4v4h-4z"/>
<path fill="#e7311a" d="M515 292h4v4h-4z"/>
<path fill="#e7311a" d="M519 292h4v4h-4z"/>
<path fill="#e7321a" d="M523 292h4v4h-4z"/>
<path fill="#00aeb5" d="M307 296h4v4h-4z"/>
<path fill="#00aeb7" d="M311 296h4v4h-4z"/>
<path fill="#00aeba" d="M315 296h4v4h-4z"/>
<path fill="#00afbc" d="M319 296h4v4h-4z"/>
<path fill="#00afbe" d="M323 296h4v4h-4z"/>
<path fill="#00afbe" d="M327 296h4v4h-4z"/>
<path fill="#00afbe" d="M331 296h4v4h-4z"/>
<path fill="#00afbe" d="M335 296h4v4h-4z"/>
<path fill="#01b0bf" d="M339 296h4v4h-4z"/>
<path fill="#00b1c0" d="M343 296h4v4h-4z"/>
<path fill="#00b2c1" d="M347 296h4v4h-4z"/>
<path fill="#00b3c3" d="M351 296h4v4h-4z"/>
<path fill="#00b3c5" d="M355 296h4v4h-4z"/>
<path fill="#00b1c5" d="M359 296h4v4h-4z"/>
<path fill="#00aec7" d="M363 296h4v4h-4z"/>
<path fill="#2db7d2" d="M367 296h4v4h-4z"/>
<path fill="#54bddd" d="M371 296h4v4h-4z"/>
<path fill="#68bae3" d="M375 296h4v4h-4z"/>
<path fill="#7db9e5" d="M379 296h4v4h-4z"/>
<path fill="#a8c2e7" d="M383 296h4v4h-4z"/>
<path fill="#d6c9e8" d="M387 296h4v4h-4z"/>
<path fill="#efcde9" d="M391 296h4v4h-4z"/>
<path fill="#f8cae7" d="M395 296h4v4h-4z"/>
<path fill="#f5bcde" d="M399 296h4v4h-4z"/>
<path fill="#f3a6d0" d="M403 296h4v4h-4z"/>
<path fill="#f18cc1" d="M407 296h4v4h-4z"/>
<path fill="#ef78b2" d="M411 296h4v4h-4z"/>
<path fill="#f073a8" d="M415 296h4v4h-4z"/>
<path fill="#f06e9e" d="M419 296h4v4h-4z"/>
<path fill="#f06a94" d="M423 296h4v4h-4z"/>
<path fill="#f0648a" d="M427 296h4v4h-4z"/>
<path fill="#ef5c81" d="M431 296h4v4h-4z"/>
<path fill="#ef5477" d="M435 296h4v4h-4z"/>
<path fill="#ef4c6d" d="M439 296h4v4h-4z"/>
<path fill="#ee4665" d="M443 296h4v4h-4z"/>
<path fill="#ee405c" d="M447 296h4v4h-4z"/>
<path fill="#ed3a53" d="M451 296h4v4h-4z"/>
<path fill="#ed364a" d="M455 296h4v4h-4z"/>
<path fill="#ec3141" d="M459 296h4v4h-4z"/>
<path fill="#eb2d38" d="M463 296h4v4h-4z"/>
<path fill="#ea2a2e" d="M467 296h4v4h-4z"/>
<path fill="#e92927" d="M471 296h4v4h-4z"/>
<path fill="#e82c24" d="M475 296h4v4h-4z"/>
<path fill="#e82e21" d="M479 296h4v4h-4z"/>
<path fill="#e72f1d" d="M483 296h4v4h-4z"/>
<path fill="#e7301b" d="M487 296h4v4h-4z"/>
<path fill="#e73019" d="M491 296h4v4h-4z"/>
<path fill="#e73019" d="M495 296h4v4h-4z"/>
<path fill="#e73019" d="M499 296h4v4h-4z"/>
<path fill="#e7301a" d="M503 296h4v4h-4z"/>
<path fill="#e7301a" d="M507 296h4v4h-4z"/>
<path fill="#e7301a" d="M511 296h4v4h-4z"/>
<path fill="#e7311a" d="M515 296h4v4h-4z"/>
<path fill="#e7311a" d="M519 296h4v4h-4z"/>
<path fill="#e7311a" d="M523 296h4v4h-4z"/>
<path fill="#00adba" d="M307 300h4v4h-4z"/>
<path fill="#00adbd" d="M311 300h4v4h-4z"/>
<path fill="#00aec0" d="M315 300h4v4h-4z"/>
<path fill="#00aec3" d="M319 300h4v4h-4z"/>
<path fill="#00aec6" d="M323 300h4v4h-4z"/>
<path fill="#00aec7" d="M327 300h4v4h-4z"/>
<path fill="#00afc8" d="M331 300h4v4h-4z"/>
<path fill="#01afc8" d="M335 300h4v4h-4z"/>
<path fill="#01b1ca" d="M339 300h4v4h-4z"/>
<path fill="#00b2cd" d="M343 300h4v4h-4z"/>
<path fill="#00b4cf" d="M347 300h4v4h-4z"/>
<path fill="#00b5d0" d="M351 300h4v4h-4z"/>
<path fill="#00b2ce" d="M355 300h4v4h-4z"/>
<path fill="#00aecc" d="M359 300h4v4h-4z"/>
<path fill="#00adcf" d="M363 300h4v4h-4z"/>
<path fill="#24b3d7" d="M367 300h4v4h-4z"/>
<path fill="#4db6de" d="M371 300h4v4h-4z"/>
<path fill="#67b4e2" d="M375 300h4v4h-4z"/>
<path fill="#82b5e4" d="M379 300h4v4h-4z"/>
<path fill="#afb9e4" d="M383 300h4v4h-4z"/>
<path fill="#d8bee4" d="M387 300h4v4h-4z"/>
<path fill="#ecc0e5" d="M391 300h4v4h-4z"/>
<path fill="#f4bce1" d="M395 300h4v4h-4z"/>
<path fill="#f2afd8" d="M399 300h4v4h-4z"/>
<path fill="#f19acb" d="M403 300h4v4h-4z"/>
<path fill="#ef82be" d="M407 300h4v4h-4z"/>
<path fill="#ee71b1" d="M411 300h4v4h-4z"/>
<path fill="#ee67a6" d="M415 300h4v4h-4z"/>
<path fill="#ef659c" d="M419 300h4v4h-4z"/>
<path fill="#ef6293" d="M423 300h4v4h-4z"/>
<path fill="#ef5b8b" d="M427 300h4v4h-4z"/>
<path fill="#ee5382" d="M431 300h4v4h-4z"/>
<path fill="#ee4a78" d="M435 300h4v4h-4z"/>
<path fill="#ee436f" d="M439 300h4v4h-4z"/>
<path fill="#ee3e67" d="M443 300h4v4h-4z"/>
<path fill="#ee3a5f" d="M447 300h4v4h-4z"/>
<path fill="#ed3556" d="M451 300h4v4h-4z"/>
<path fill="#ed314d" d="M455 300h4v4h-4z"/>
<path fill="#ec2c44" d="M459 300h4v4h-4z"/>
<path fill="#eb273a" d="M463 300h4v4h-4z"/>
<path fill="#ea2531" d="M467 300h4v4h-4z"/>
<path fill="#e9282e" d="M471 300h4v4h-4z"/>
<path fill="#e92b2a" d="M475 300h4v4h-4z"/>
<path fill="#e82d26" d="M479 300h4v4h-4z"/>
<path fill="#e82e22" d="M483 300h4v4h-4z"/>
<path fill="#e82e1e" d="M487 300h4v4h-4z"/>
<path fill="#e72f1b" d="M491 300h4v4h-4z"/>
<path fill="#e72f19" d="M495 300h4v4h-4z"/>
<path fill="#e72f19" d="M499 300h4v4h-4z"/>
<path fill="#e72f19" d="M503 300h4v4h-4z"/>
<path fill="#e7301a" d="M507 300h4v4h-4z"/>
<path fill="#e7301a" d="M511 300h4v4h-4z"/>
<path fill="#e7301a" d="M515 300h4v4h-4z"/>
<path fill="#e7301a" d="M519 300h4v4h-4z"/>
<path fill="#e7311a" d="M523 300h4v4h-4z"/>
<path fill="#01acbe" d="M307 304h4v4h-4z"/>
<path fill="#00acc2" d="M311 304h4v4h-4z"/>
<path fill="#00adc5" d="M315 304h4v4h-4z"/>
<path fill="#00adca" d="M319 304h4v4h-4z"/>
<path fill="#00aece" d="M323 304h4v4h-4z"/>
<path fill="#00aed0" d="M327 304h4v4h-4z"/>
<path fill="#00afd1" d="M331 304h4v4h-4z"/>
<path fill="#01b0d3" d="M335 304h4v4h-4z"/>
<path fill="#01b2d6" d="M339 304h4v4h-4z"/>
<path fill="#01b3d8" d="M343 304h4v4h-4z"/>
<path fill="#00b3d7" d="M347 304h4v4h-4z"/>
<path fill="#00b2d6" d="M351 304h4v4h-4z"/>
<path fill="#00b0d5" d="M355 304h4v4h-4z"/>
<path fill="#00abd4" d="M359 304h4v4h-4z"/>
<path fill="#00abd7" d="M363 304h4v4h-4z"/>
<path fill="#20aeda" d="M367 304h4v4h-4z"/>
<path fill="#4aafde" d="M371 304h4v4h-4z"/>
<path fill="#6bb1e2" d="M375 304h4v4h-4z"/>
<path fill="#8eafe2" d="M379 304h4v4h-4z"/>
<path fill="#b9b3e3" d="M383 304h4v4h-4z"/>
<path fill="#d8b6e0" d="M387 304h4v4h-4z"/>
<path fill="#ebb5e0" d="M391 304h4v4h-4z"/>
<path fill="#f3b0db" d="M395 304h4v4h-4z"/>
<path fill="#f2a5d4" d="M399 304h4v4h-4z"/>
<path fill="#f090c6" d="M403 304h4v4h-4z"/>
<path fill="#ef7cba" d="M407 304h4v4h-4z"/>
<path fill="#ee6baf" d="M411 304h4v4h-4z"/>
<path fill="#ed5ea4" d="M415 304h4v4h-4z"/>
<path fill="#ed589a" d="M419 304h4v4h-4z"/>
<path fill="#ee5693" d="M423 304h4v4h-4z"/>
<path fill="#ed4f8b" d="M427 304h4v4h-4z"/>
<path fill="#ed4681" d="M431 304h4v4h-4z"/>
<path fill="#ed3f77" d="M435 304h4v4h-4z"/>
<path fill="#ed3a6f" d="M439 304h4v4h-4z"/>
<path fill="#ed3668" d="M443 304h4v4h-4z"/>
<path fill="#ed3360" d="M447 304h4v4h-4z"/>
<path fill="#ed2f57" d="M451 304h4v4h-4z"/>
<path fill="#ec2b4e" d="M455 304h4v4h-4z"/>
<path fill="#ec2644" d="M459 304h4v4h-4z"/>
<path fill="#eb253d" d="M463 304h4v4h-4z"/>
<path fill="#eb2739" d="M467 304h4v4h-4z"/>
<path fill="#ea2835" d="M471 304h4v4h-4z"/>
<path fill="#e92a30" d="M475 304h4v4h-4z"/>
<path fill="#e92b2c" d="M479 304h4v4h-4z"/>
<path fill="#e92c27" d="M483 304h4v4h-4z"/>
<path fill="#e82d23" d="M487 304h4v4h-4z"/>
<path fill="#e82d20" d="M491 304h4v4h-4z"/>
<path fill="#e82d1e" d="M495 304h4v4h-4z"/>
<path fill="#e82e1d" d="M499 304h4v4h-4z"/>
<path fill="#e82e1c" d="M503 304h4v4h-4z"/>
<path fill="#e72f1c" d="M507 304h4v4h-4z"/>
<path fill="#e72f1b" d="M511 304h4v4h-4z"/>
<path fill="#e7301a" d="M515 304h4v4h-4z"/>
<path fill="#e7301a" d="M519 304h4v4h-4z"/>
<path fill="#e7301a" d="M523 304h4v4h-4z"/>
<path fill="#00abc7" d="M311 308h4v4h-4z"/>
<path fill="#00accb" d="M315 308h4v4h-4z"/>
<path fill="#00add0" d="M319 308h4v4h-4z"/>
<path fill="#00aed5" d="M323 308h4v4h-4z"/>
<path fill="#00aed9" d="M327 308h4v4h-4z"/>
<path fill="#00afdb" d="M331 308h4v4h-4z"/>
<path fill="#01b0dc" d="M335 308h4v4h-4z"/>
<path fill="#01b0db" d="M339 308h4v4h-4z"/>
<path fill="#01b0dc" d="M343 308h4v4h-4z"/>
<path fill="#00b0dc" d="M347 308h4v4h-4z"/>
<path fill="#00b0dc" d="M351 308h4v4h-4z"/>
<path fill="#00aedc" d="M355 308h4v4h-4z"/>
<path fill="#00a9dc" d="M359 308h4v4h-4z"/>
<path fill="#00a9dc" d="M363 308h4v4h-4z"/>
<path fill="#21a8dc" d="M367 308h4v4h-4z"/>
<path fill="#4faede" d="M371 308h4v4h-4z"/>
<path fill="#73acdf" d="M375 308h4v4h-4z"/>
<path fill="#9ba9e0" d="M379 308h4v4h-4z"/>
<path fill="#c1abe0" d="M383 308h4v4h-4z"/>
<path fill="#dbacdd" d="M387 308h4v4h-4z"/>
<path fill="#ecabdb" d="M391 308h4v4h-4z"/>
<path fill="#f3a5d6" d="M395 308h4v4h-4z"/>
<path fill="#f39ace" d="M399 308h4v4h-4z"/>
<path fill="#f087c1" d="M403 308h4v4h-4z"/>
<path fill="#ef76b7" d="M407 308h4v4h-4z"/>
<path fill="#ee66ad" d="M411 308h4v4h-4z"/>
<path fill="#ed58a3" d="M415 308h4v4h-4z"/>
<path fill="#ec4896" d="M419 308h4v4h-4z"/>
<path fill="#ec4590" d="M423 308h4v4h-4z"/>
<path fill="#ec4089" d="M427 308h4v4h-4z"/>
<path fill="#ec387f" d="M431 308h4v4h-4z"/>
<path fill="#ec3175" d="M435 308h4v4h-4z"/>
<path fill="#ec2f6e" d="M439 308h4v4h-4z"/>
<path fill="#ec2e66" d="M443 308h4v4h-4z"/>
<path fill="#ec2c5f" d="M447 308h4v4h-4z"/>
<path fill="#ec2756" d="M451 308h4v4h-4z"/>
<path fill="#ec244d" d="M455 308h4v4h-4z"/>
<path fill="#ec2749" d="M459 308h4v4h-4z"/>
<path fill="#ec2845" d="M463 308h4v4h-4z"/>
<path fill="#eb2940" d="M467 308h4v4h-4z"/>
<path fill="#eb293b" d="M471 308h4v4h-4z"/>
<path fill="#ea2a36" d="M475 308h4v4h-4z"/>
<path fill="#ea2a31" d="M479 308h4v4h-4z"/>
<path fill="#e92a2d" d="M483 308h4v4h-4z"/>
<path fill="#e92b29" d="M487 308h4v4h-4z"/>
<path fill="#e92b26" d="M491 308h4v4h-4z"/>
<path fill="#e92b24" d="M495 308h4v4h-4z"/>
<path fill="#e82c23" d="M499 308h4v4h-4z"/>
<path fill="#e82c22" d="M503 308h4v4h-4z"/>
<path fill="#e82d21" d="M507 308h4v4h-4z"/>
<path fill="#e82e20" d="M511 308h4v4h-4z"/>
<path fill="#e82e1f" d="M515 308h4v4h-4z"/>
<path fill="#e72f1e" d="M519 308h4v4h-4z"/>
<path fill="#e72f1d" d="M523 308h4v4h-4z"/>
<path fill="#00aacc" d="M311 312h4v4h-4z"/>
<path fill="#00abd0" d="M315 312h4v4h-4z"/>
<path fill="#00acd6" d="M319 312h4v4h-4z"/>
<path fill="#00addc" d="M323 312h4v4h-4z"/>
<path fill="#00addf" d="M327 312h4v4h-4z"/>
<path fill="#00acde" d="M331 312h4v4h-4z"/>
<path fill="#01acdd" d="M335 312h4v4h-4z"/>
<path fill="#02acde" d="M339 312h4v4h-4z"/>
<path fill="#01acdf" d="M343 312h4v4h-4z"/>
<path fill="#00ade0" d="M347 312h4v4h-4z"/>
<path fill="#00ade1" d="M351 312h4v4h-4z"/>
<path fill="#00abe1" d="M355 312h4v4h-4z"/>
<path fill="#00a3dd" d="M359 312h4v4h-4z"/>
<path fill="#02a4de" d="M363 312h4v4h-4z"/>
<path fill="#29a8dd" d="M367 312h4v4h-4z"/>
<path fill="#57aadd" d="M371 312h4v4h-4z"/>
<path fill="#7ca3db" d="M375 312h4v4h-4z"/>
<path fill="#a6a4dc" d="M379 312h4v4h-4z"/>
<path fill="#c7a3db" d="M383 312h4v4h-4z"/>
<path fill="#dca3d9" d="M387 312h4v4h-4z"/>
<path fill="#eca0d5" d="M391 312h4v4h-4z"/>
<path fill="#f39ad0" d="M395 312h4v4h-4z"/>
<path fill="#f28fc8" d="M399 312h4v4h-4z"/>
<path fill="#f07ebc" d="M403 312h4v4h-4z"/>
<path fill="#ef6fb3" d="M407 312h4v4h-4z"/>
<path fill="#ee61ab" d="M411 312h4v4h-4z"/>
<path fill="#ec51a1" d="M415 312h4v4h-4z"/>
<path fill="#eb4196" d="M419 312h4v4h-4z"/>
<path fill="#ea328b" d="M423 312h4v4h-4z"/>
<path fill="#ea3085" d="M427 312h4v4h-4z"/>
<path fill="#ea2b7c" d="M431 312h4v4h-4z"/>
<path fill="#eb2773" d="M435 312h4v4h-4z"/>
<path fill="#eb246a" d="M439 312h4v4h-4z"/>
<path fill="#eb2363" d="M443 312h4v4h-4z"/>
<path fill="#eb225c" d="M447 312h4v4h-4z"/>
<path fill="#ec2557" d="M451 312h4v4h-4z"/>
<path fill="#ec2753" d="M455 312h4v4h-4z"/>
<path fill="#ec2950" d="M459 312h4v4h-4z"/>
<path fill="#ec2a4b" d="M463 312h4v4h-4z"/>
<path fill="#ec2a46" d="M467 312h4v4h-4z"/>
<path fill="#eb2a40" d="M471 312h4v4h-4z"/>
<path fill="#ea2a3b" d="M475 312h4v4h-4z"/>
<path fill="#ea2a37" d="M479 312h4v4h-4z"/>
<path fill="#ea2a32" d="M483 312h4v4h-4z"/>
<path fill="#e92a2f" d="M487 312h4v4h-4z"/>
<path fill="#e9292c" d="M491 312h4v4h-4z"/>
<path fill="#e92a2a" d="M495 312h4v4h-4z"/>
<path fill="#e92a28" d="M499 312h4v4h-4z"/>
<path fill="#e92b27" d="M503 312h4v4h-4z"/>
<path fill="#e92b26" d="M507 312h4v4h-4z"/>
<path fill="#e82c25" d="M511 312h4v4h-4z"/>
<path fill="#e82d24" d="M515 312h4v4h-4z"/>
<path fill="#e82d23" d="M519 312h4v4h-4z"/>
<path fill="#e82e21" d="M523 312h4v4h-4z"/>
<path fill="#00a9d1" d="M311 316h4v4h-4z"/>
<path fill="#00aad6" d="M315 316h4v4h-4z"/>
<path fill="#00abdb" d="M319 316h4v4h-4z"/>
<path fill="#00aade" d="M323 316h4v4h-4z"/>
<path fill="#00a9df" d="M327 316h4v4h-4z"/>
<path fill="#00a8df" d="M331 316h4v4h-4z"/>
<path fill="#01a8de" d="M335 316h4v4h-4z"/>
<path fill="#02a8df" d="M339 316h4v4h-4z"/>
<path fill="#01a8e1" d="M343 316h4v4h-4z"/>
<path fill="#00a9e3" d="M347 316h4v4h-4z"/>
<path fill="#00a9e3" d="M351 316h4v4h-4z"/>
<path fill="#00a5e1" d="M355 316h4v4h-4z"/>
<path fill="#009ddd" d="M359 316h4v4h-4z"/>
<path fill="#0aa3dd" d="M363 316h4v4h-4z"/>
<path fill="#33a4dc" d="M367 316h4v4h-4z"/>
<path fill="#60a3d9" d="M371 316h4v4h-4z"/>
<path fill="#859ad5" d="M375 316h4v4h-4z"/>
<path fill="#b09bd7" d="M379 316h4v4h-4z"/>
<path fill="#ca9bd4" d="M383 316h4v4h-4z"/>
<path fill="#dd99d5" d="M387 316h4v4h-4z"/>
<path fill="#ea95cf" d="M391 316h4v4h-4z"/>
<path fill="#f18ec9" d="M395 316h4v4h-4z"/>
<path fill="#f183c1" d="M399 316h4v4h-4z"/>
<path fill="#ef75b7" d="M403 316h4v4h-4z"/>
<path fill="#ee68af" d="M407 316h4v4h-4z"/>
<path fill="#ed5ca8" d="M411 316h4v4h-4z"/>
<path fill="#ec4a9f" d="M415 316h4v4h-4z"/>
<path fill="#eb3b95" d="M419 316h4v4h-4z"/>
<path fill="#e92b8a" d="M423 316h4v4h-4z"/>
<path fill="#e9207f" d="M427 316h4v4h-4z"/>
<path fill="#e91e78" d="M431 316h4v4h-4z"/>
<path fill="#e91c6f" d="M435 316h4v4h-4z"/>
<path fill="#ea1c68" d="M439 316h4v4h-4z"/>
<path fill="#eb2065" d="M443 316h4v4h-4z"/>
<path fill="#eb2461" d="M447 316h4v4h-4z"/>
<path fill="#ec275c" d="M451 316h4v4h-4z"/>
<path fill="#ec2857" d="M455 316h4v4h-4z"/>
<path fill="#ec2a52" d="M459 316h4v4h-4z"/>
<path fill="#ec2b4e" d="M463 316h4v4h-4z"/>
<path fill="#ec2b4a" d="M467 316h4v4h-4z"/>
<path fill="#ec2a45" d="M471 316h4v4h-4z"/>
<path fill="#eb2a41" d="M475 316h4v4h-4z"/>
<path fill="#eb2a3d" d="M479 316h4v4h-4z"/>
<path fill="#ea2938" d="M483 316h4v4h-4z"/>
<path fill="#ea2935" d="M487 316h4v4h-4z"/>
<path fill="#ea2932" d="M491 316h4v4h-4z"/>
<path fill="#ea2930" d="M495 316h4v4h-4z"/>
<path fill="#e9292e" d="M499 316h4v4h-4z"/>
<path fill="#e92a2d" d="M503 316h4v4h-4z"/>
<path fill="#e92a2c" d="M507 316h4v4h-4z"/>
<path fill="#e92b2a" d="M511 316h4v4h-4z"/>
<path fill="#e82c29" d="M515 316h4v4h-4z"/>
<path fill="#e82c28" d="M519 316h4v4h-4z"/>
<path fill="#01a8d6" d="M311 320h4v4h-4z"/>
<path fill="#00a7d8" d="M315 320h4v4h-4z"/>
<path fill="#00a6da" d="M319 320h4v4h-4z"/>
<path fill="#00a5dc" d="M323 320h4v4h-4z"/>
<path fill="#00a5de" d="M327 320h4v4h-4z"/>
<path fill="#00a4de" d="M331 320h4v4h-4z"/>
<path fill="#01a4df" d="M335 320h4v4h-4z"/>
<path fill="#02a4e0" d="M339 320h4v4h-4z"/>
<path fill="#02a4e2" d="M343 320h4v4h-4z"/>
<path fill="#00a4e3" d="M347 320h4v4h-4z"/>
<path fill="#00a2e2" d="M351 320h4v4h-4z"/>
<path fill="#009ee0" d="M355 320h4v4h-4z"/>
<path fill="#009bdc" d="M359 320h4v4h-4z"/>
<path fill="#179edb" d="M363 320h4v4h-4z"/>
<path fill="#429dd7" d="M367 320h4v4h-4z"/>
<path fill="#6b97d3" d="M371 320h4v4h-4z"/>
<path fill="#9191d0" d="M375 320h4v4h-4z"/>
<path fill="#b791cf" d="M379 320h4v4h-4z"/>
<path fill="#cb91ce" d="M383 320h4v4h-4z"/>
<path fill="#db8ece" d="M387 320h4v4h-4z"/>
<path fill="#e889c9" d="M391 320h4v4h-4z"/>
<path fill="#ee82c2" d="M395 320h4v4h-4z"/>
<path fill="#ef78bb" d="M399 320h4v4h-4z"/>
<path fill="#ee6cb3" d="M403 320h4v4h-4z"/>
<path fill="#ed60aa" d="M407 320h4v4h-4z"/>
<path fill="#ec55a4" d="M411 320h4v4h-4z"/>
<path fill="#eb469c" d="M415 320h4v4h-4z"/>
<path fill="#ea3493" d="M419 320h4v4h-4z"/>
<path fill="#e92789" d="M423 320h4v4h-4z"/>
<path fill="#e8197e" d="M427 320h4v4h-4z"/>
<path fill="#e91b79" d="M431 320h4v4h-4z"/>
<path fill="#e91d73" d="M435 320h4v4h-4z"/>
<path fill="#ea206e" d="M439 320h4v4h-4z"/>
<path fill="#eb2369" d="M443 320h4v4h-4z"/>
<path fill="#eb2564" d="M447 320h4v4h-4z"/>
<path fill="#ec275f" d="M451 320h4v4h-4z"/>
<path fill="#ec295a" d="M455 320h4v4h-4z"/>
<path fill="#ec2a55" d="M459 320h4v4h-4z"/>
<path fill="#ec2a50" d="M463 320h4v4h-4z"/>
<path fill="#ec2a4d" d="M467 320h4v4h-4z"/>
<path fill="#ec2a49" d="M471 320h4v4h-4z"/>
<path fill="#eb2a46" d="M475 320h4v4h-4z"/>
<path fill="#eb2942" d="M479 320h4v4h-4z"/>
<path fill="#eb293f" d="M483 320h4v4h-4z"/>
<path fill="#ea293b" d="M487 320h4v4h-4z"/>
<path fill="#ea2938" d="M491 320h4v4h-4z"/>
<path fill="#ea2936" d="M495 320h4v4h-4z"/>
<path fill="#ea2935" d="M499 320h4v4h-4z"/>
<path fill="#e92933" d="M503 320h4v4h-4z"/>
<path fill="#e92a31" d="M507 320h4v4h-4z"/>
<path fill="#e92a30" d="M511 320h4v4h-4z"/>
<path fill="#01a4d5" d="M311 324h4v4h-4z"/>
<path fill="#00a3d7" d="M315 324h4v4h-4z"/>
<path fill="#00a2d9" d="M319 324h4v4h-4z"/>
<path fill="#00a1db" d="M323 324h4v4h-4z"/>
<path fill="#00a0dd" d="M327 324h4v4h-4z"/>
<path fill="#009fde" d="M331 324h4v4h-4z"/>
<path fill="#019fdf" d="M335 324h4v4h-4z"/>
<path fill="#029fe0" d="M339 324h4v4h-4z"/>
<path fill="#019ee1" d="M343 324h4v4h-4z"/>
<path fill="#009ce0" d="M347 324h4v4h-4z"/>
<path fill="#009adf" d="M351 324h4v4h-4z"/>
<path fill="#0095dc" d="M355 324h4v4h-4z"/>
<path fill="#0393d8" d="M359 324h4v4h-4z"/>
<path fill="#2593d5" d="M363 324h4v4h-4z"/>
<path fill="#5192d1" d="M367 324h4v4h-4z"/>
<path fill="#7588cb" d="M371 324h4v4h-4z"/>
<path fill="#9c88ca" d="M375 324h4v4h-4z"/>
<path fill="#bb88c8" d="M379 324h4v4h-4z"/>
<path fill="#cc87c8" d="M383 324h4v4h-4z"/>
<path fill="#da83c7" d="M387 324h4v4h-4z"/>
<path fill="#e47ec2" d="M391 324h4v4h-4z"/>
<path fill="#eb78bc" d="M395 324h4v4h-4z"/>
<path fill="#ec6eb5" d="M399 324h4v4h-4z"/>
<path fill="#ec64ae" d="M403 324h4v4h-4z"/>
<path fill="#ec59a6" d="M407 324h4v4h-4z"/>
<path fill="#eb4ea0" d="M411 324h4v4h-4z"/>
<path fill="#eb429a" d="M415 324h4v4h-4z"/>
<path fill="#ea3191" d="M419 324h4v4h-4z"/>
<path fill="#e92387" d="M423 324h4v4h-4z"/>
<path fill="#e91d81" d="M427 324h4v4h-4z"/>
<path fill="#e91f7e" d="M431 324h4v4h-4z"/>
<path fill="#ea2178" d="M435 324h4v4h-4z"/>
<path fill="#ea2372" d="M439 324h4v4h-4z"/>
<path fill="#eb246c" d="M443 324h4v4h-4z"/>
<path fill="#eb2667" d="M447 324h4v4h-4z"/>
<path fill="#ec2762" d="M451 324h4v4h-4z"/>
<path fill="#ec285c" d="M455 324h4v4h-4z"/>
<path fill="#ec2957" d="M459 324h4v4h-4z"/>
<path fill="#ec2a52" d="M463 324h4v4h-4z"/>
<path fill="#ec294f" d="M467 324h4v4h-4z"/>
<path fill="#ec294d" d="M471 324h4v4h-4z"/>
<path fill="#eb294b" d="M475 324h4v4h-4z"/>
<path fill="#eb2948" d="M479 324h4v4h-4z"/>
<path fill="#eb2845" d="M483 324h4v4h-4z"/>
<path fill="#eb2842" d="M487 324h4v4h-4z"/>
<path fill="#eb283f" d="M491 324h4v4h-4z"/>
<path fill="#ea293d" d="M495 324h4v4h-4z"/>
<path fill="#ea293b" d="M499 324h4v4h-4z"/>
<path fill="#ea2939" d="M503 324h4v4h-4z"/>
<path fill="#ea2a37" d="M507 324h4v4h-4z"/>
<path fill="#009ed6" d="M315 328h4v4h-4z"/>
<path fill="#009dd8" d="M319 328h4v4h-4z"/>
<path fill="#009cda" d="M323 328h4v4h-4z"/>
<path fill="#009bdc" d="M327 328h4v4h-4z"/>
<path fill="#009bdd" d="M331 328h4v4h-4z"/>
<path fill="#019ade" d="M335 328h4v4h-4z"/>
<path fill="#0199de" d="M339 328h4v4h-4z"/>
<path fill="#0197de" d="M343 328h4v4h-4z"/>
<path fill="#0095dd" d="M347 328h4v4h-4z"/>
<path fill="#0092dc" d="M351 328h4v4h-4z"/>
<path fill="#008bd7" d="M355 328h4v4h-4z"/>
<path fill="#0b89d3" d="M359 328h4v4h-4z"/>
<path fill="#2f87cf" d="M363 328h4v4h-4z"/>
<path fill="#5d85cb" d="M367 328h4v4h-4z"/>
<path fill="#7f7dc4" d="M371 328h4v4h-4z"/>
<path fill="#a57ec3" d="M375 328h4v4h-4z"/>
<path fill="#bc7fc1" d="M379 328h4v4h-4z"/>
<path fill="#cc7dc3" d="M383 328h4v4h-4z"/>
<path fill="#d87ac2" d="M387 328h4v4h-4z"/>
<path fill="#e175bd" d="M391 328h4v4h-4z"/>
<path fill="#e96fb8" d="M395 328h4v4h-4z"/>
<path fill="#eb67b1" d="M399 328h4v4h-4z"/>
<path fill="#eb5daa" d="M403 328h4v4h-4z"/>
<path fill="#eb51a2" d="M407 328h4v4h-4z"/>
<path fill="#ea479c" d="M411 328h4v4h-4z"/>
<path fill="#ea3e97" d="M415 328h4v4h-4z"/>
<path fill="#ea3090" d="M419 328h4v4h-4z"/>
<path fill="#e81f86" d="M423 328h4v4h-4z"/>
<path fill="#e92183" d="M427 328h4v4h-4z"/>
<path fill="#ea2381" d="M431 328h4v4h-4z"/>
<path fill="#ea247d" d="M435 328h4v4h-4z"/>
<path fill="#ea2576" d="M439 328h4v4h-4z"/>
<path fill="#eb2670" d="M443 328h4v4h-4z"/>
<path fill="#eb2669" d="M447 328h4v4h-4z"/>
<path fill="#eb2764" d="M451 328h4v4h-4z"/>
<path fill="#ec285f" d="M455 328h4v4h-4z"/>
<path fill="#ec2859" d="M459 328h4v4h-4z"/>
<path fill="#ec2855" d="M463 328h4v4h-4z"/>
<path fill="#ec2853" d="M467 328h4v4h-4z"/>
<path fill="#ec2851" d="M471 328h4v4h-4z"/>
<path fill="#eb284f" d="M475 328h4v4h-4z"/>
<path fill="#eb284d" d="M479 328h4v4h-4z"/>
<path fill="#eb284a" d="M483 328h4v4h-4z"/>
<path fill="#eb2848" d="M487 328h4v4h-4z"/>
<path fill="#eb2845" d="M491 328h4v4h-4z"/>
<path fill="#eb2843" d="M495 328h4v4h-4z"/>
<path fill="#ea2941" d="M499 328h4v4h-4z"/>
<path fill="#019ad5" d="M315 332h4v4h-4z"/>
<path fill="#0099d7" d="M319 332h4v4h-4z"/>
<path fill="#0098d8" d="M323 332h4v4h-4z"/>
<path fill="#0097da" d="M327 332h4v4h-4z"/>
<path fill="#0096dc" d="M331 332h4v4h-4z"/>
<path fill="#0194db" d="M335 332h4v4h-4z"/>
<path fill="#0192db" d="M339 332h4v4h-4z"/>
<path fill="#0190db" d="M343 332h4v4h-4z"/>
<path fill="#008eda" d="M347 332h4v4h-4z"/>
<path fill="#008ad7" d="M351 332h4v4h-4z"/>
<path fill="#0083d2" d="M355 332h4v4h-4z"/>
<path fill="#1380ce" d="M359 332h4v4h-4z"/>
<path fill="#397dc9" d="M363 332h4v4h-4z"/>
<path fill="#6279c4" d="M367 332h4v4h-4z"/>
<path fill="#8675c0" d="M371 332h4v4h-4z"/>
<path fill="#a975bd" d="M375 332h4v4h-4z"/>
<path fill="#bc77bd" d="M379 332h4v4h-4z"/>
<path fill="#cc75bf" d="M383 332h4v4h-4z"/>
<path fill="#d772bd" d="M387 332h4v4h-4z"/>
<path fill="#e06db8" d="M391 332h4v4h-4z"/>
<path fill="#e868b4" d="M395 332h4v4h-4z"/>
<path fill="#e960ad" d="M399 332h4v4h-4z"/>
<path fill="#ea57a7" d="M403 332h4v4h-4z"/>
<path fill="#ea4b9f" d="M407 332h4v4h-4z"/>
<path fill="#ea4199" d="M411 332h4v4h-4z"/>
<path fill="#ea3b95" d="M415 332h4v4h-4z"/>
<path fill="#e9308f" d="M419 332h4v4h-4z"/>
<path fill="#e82087" d="M423 332h4v4h-4z"/>
<path fill="#e92485" d="M427 332h4v4h-4z"/>
<path fill="#ea2682" d="M431 332h4v4h-4z"/>
<path fill="#ea267f" d="M435 332h4v4h-4z"/>
<path fill="#ea267a" d="M439 332h4v4h-4z"/>
<path fill="#eb2673" d="M443 332h4v4h-4z"/>
<path fill="#eb266d" d="M447 332h4v4h-4z"/>
<path fill="#eb2768" d="M451 332h4v4h-4z"/>
<path fill="#eb2762" d="M455 332h4v4h-4z"/>
<path fill="#ec285d" d="M459 332h4v4h-4z"/>
<path fill="#ec275a" d="M463 332h4v4h-4z"/>
<path fill="#ec2758" d="M467 332h4v4h-4z"/>
<path fill="#eb2756" d="M471 332h4v4h-4z"/>
<path fill="#eb2754" d="M475 332h4v4h-4z"/>
<path fill="#eb2752" d="M479 332h4v4h-4z"/>
<path fill="#eb274f" d="M483 332h4v4h-4z"/>
<path fill="#eb284d" d="M487 332h4v4h-4z"/>
<path fill="#eb284b" d="M491 332h4v4h-4z"/>
<path fill="#eb2849" d="M495 332h4v4h-4z"/>
<path fill="#0196d4" d="M315 336h4v4h-4z"/>
<path fill="#0094d5" d="M319 336h4v4h-4z"/>
<path fill="#0093d7" d="M323 336h4v4h-4z"/>
<path fill="#0092d8" d="M327 336h4v4h-4z"/>
<path fill="#0090d8" d="M331 336h4v4h-4z"/>
<path fill="#018ed8" d="M335 336h4v4h-4z"/>
<path fill="#018cd8" d="M339 336h4v4h-4z"/>
<path fill="#0089d7" d="M343 336h4v4h-4z"/>
<path fill="#0087d5" d="M347 336h4v4h-4z"/>
<path fill="#0083d3" d="M351 336h4v4h-4z"/>
<path fill="#0078cb" d="M355 336h4v4h-4z"/>
<path fill="#1978c8" d="M359 336h4v4h-4z"/>
<path fill="#4075c4" d="M363 336h4v4h-4z"/>
<path fill="#6471bf" d="M367 336h4v4h-4z"/>
<path fill="#896ebc" d="M371 336h4v4h-4z"/>
<path fill="#a76fb9" d="M375 336h4v4h-4z"/>
<path fill="#ba6fba" d="M379 336h4v4h-4z"/>
<path fill="#cb6ebc" d="M383 336h4v4h-4z"/>
<path fill="#d76bb9" d="M387 336h4v4h-4z"/>
<path fill="#e067b5" d="M391 336h4v4h-4z"/>
<path fill="#e762b0" d="M395 336h4v4h-4z"/>
<path fill="#e959aa" d="M399 336h4v4h-4z"/>
<path fill="#ea51a4" d="M403 336h4v4h-4z"/>
<path fill="#e9469d" d="M407 336h4v4h-4z"/>
<path fill="#e93d97" d="M411 336h4v4h-4z"/>
<path fill="#e93894" d="M415 336h4v4h-4z"/>
<path fill="#e92f8f" d="M419 336h4v4h-4z"/>
<path fill="#e82488" d="M423 336h4v4h-4z"/>
<path fill="#e92688" d="M427 336h4v4h-4z"/>
<path fill="#ea2784" d="M431 336h4v4h-4z"/>
<path fill="#ea2780" d="M435 336h4v4h-4z"/>
<path fill="#ea267c" d="M439 336h4v4h-4z"/>
<path fill="#ea2677" d="M443 336h4v4h-4z"/>
<path fill="#ea2671" d="M447 336h4v4h-4z"/>
<path fill="#eb276c" d="M451 336h4v4h-4z"/>
<path fill="#eb2767" d="M455 336h4v4h-4z"/>
<path fill="#eb2763" d="M459 336h4v4h-4z"/>
<path fill="#eb275f" d="M463 336h4v4h-4z"/>
<path fill="#eb275d" d="M467 336h4v4h-4z"/>
<path fill="#eb275c" d="M471 336h4v4h-4z"/>
<path fill="#eb275a" d="M475 336h4v4h-4z"/>
<path fill="#eb2757" d="M479 336h4v4h-4z"/>
<path fill="#eb2755" d="M483 336h4v4h-4z"/>
<path fill="#eb2752" d="M487 336h4v4h-4z"/>
<path fill="#0191d3" d="M315 340h4v4h-4z"/>
<path fill="#0190d4" d="M319 340h4v4h-4z"/>
<path fill="#008ed5" d="M323 340h4v4h-4z"/>
<path fill="#008cd5" d="M327 340h4v4h-4z"/>
<path fill="#0089d4" d="M331 340h4v4h-4z"/>
<path fill="#0087d4" d="M335 340h4v4h-4z"/>
<path fill="#0085d4" d="M339 340h4v4h-4z"/>
<path fill="#0083d2" d="M343 340h4v4h-4z"/>
<path fill="#0080d0" d="M347 340h4v4h-4z"/>
<path fill="#0079cc" d="M351 340h4v4h-4z"/>
<path fill="#006fc4" d="M355 340h4v4h-4z"/>
<path fill="#216fc1" d="M359 340h4v4h-4z"/>
<path fill="#446cbd" d="M363 340h4v4h-4z"/>
<path fill="#6568ba" d="M367 340h4v4h-4z"/>
<path fill="#8a67b7" d="M371 340h4v4h-4z"/>
<path fill="#a369b5" d="M375 340h4v4h-4z"/>
<path fill="#b868b7" d="M379 340h4v4h-4z"/>
<path fill="#c967b9" d="M383 340h4v4h-4z"/>
<path fill="#d665b6" d="M387 340h4v4h-4z"/>
<path fill="#e061b2" d="M391 340h4v4h-4z"/>
<path fill="#e75cad" d="M395 340h4v4h-4z"/>
<path fill="#e853a6" d="M399 340h4v4h-4z"/>
<path fill="#e94ba1" d="M403 340h4v4h-4z"/>
<path fill="#e9429b" d="M407 340h4v4h-4z"/>
<path fill="#e93b96" d="M411 340h4v4h-4z"/>
<path fill="#e93693" d="M415 340h4v4h-4z"/>
<path fill="#e82e8f" d="M419 340h4v4h-4z"/>
<path fill="#e8288b" d="M423 340h4v4h-4z"/>
<path fill="#e92989" d="M427 340h4v4h-4z"/>
<path fill="#ea2885" d="M431 340h4v4h-4z"/>
<path fill="#ea2781" d="M435 340h4v4h-4z"/>
<path fill="#ea267e" d="M439 340h4v4h-4z"/>
<path fill="#ea267b" d="M443 340h4v4h-4z"/>
<path fill="#ea2676" d="M447 340h4v4h-4z"/>
<path fill="#ea2671" d="M451 340h4v4h-4z"/>
<path fill="#ea266d" d="M455 340h4v4h-4z"/>
<path fill="#eb2669" d="M459 340h4v4h-4z"/>
<path fill="#eb2665" d="M463 340h4v4h-4z"/>
<path fill="#eb2663" d="M467 340h4v4h-4z"/>
<path fill="#eb2661" d="M471 340h4v4h-4z"/>
<path fill="#eb265f" d="M475 340h4v4h-4z"/>
<path fill="#eb275d" d="M479 340h4v4h-4z"/>
<path fill="#018dd2" d="M315 344h4v4h-4z"/>
<path fill="#018bd2" d="M319 344h4v4h-4z"/>
<path fill="#0089d2" d="M323 344h4v4h-4z"/>
<path fill="#0086d1" d="M327 344h4v4h-4z"/>
<path fill="#0083d1" d="M331 344h4v4h-4z"/>
<path fill="#0081d1" d="M335 344h4v4h-4z"/>
<path fill="#0080d0" d="M339 344h4v4h-4z"/>
<path fill="#007dce" d="M343 344h4v4h-4z"/>
<path fill="#0078cb" d="M347 344h4v4h-4z"/>
<path fill="#006fc4" d="M351 344h4v4h-4z"/>
<path fill="#0966bd" d="M355 344h4v4h-4z"/>
<path fill="#2864ba" d="M359 344h4v4h-4z"/>
<path fill="#4765b7" d="M363 344h4v4h-4z"/>
<path fill="#6862b6" d="M367 344h4v4h-4z"/>
<path fill="#8961b3" d="M371 344h4v4h-4z"/>
<path fill="#a062b3" d="M375 344h4v4h-4z"/>
<path fill="#b562b5" d="M379 344h4v4h-4z"/>
<path fill="#c761b6" d="M383 344h4v4h-4z"/>
<path fill="#d55fb3" d="M387 344h4v4h-4z"/>
<path fill="#df5caf" d="M391 344h4v4h-4z"/>
<path fill="#e757ab" d="M395 344h4v4h-4z"/>
<path fill="#e84da3" d="M399 344h4v4h-4z"/>
<path fill="#e9469e" d="M403 344h4v4h-4z"/>
<path fill="#e83e99" d="M407 344h4v4h-4z"/>
<path fill="#e83995" d="M411 344h4v4h-4z"/>
<path fill="#e93593" d="M415 344h4v4h-4z"/>
<path fill="#e82e8f" d="M419 344h4v4h-4z"/>
<path fill="#e92d8d" d="M423 344h4v4h-4z"/>
<path fill="#e92b8b" d="M427 344h4v4h-4z"/>
<path fill="#e92887" d="M431 344h4v4h-4z"/>
<path fill="#e92782" d="M435 344h4v4h-4z"/>
<path fill="#ea2680" d="M439 344h4v4h-4z"/>
<path fill="#ea267d" d="M443 344h4v4h-4z"/>
<path fill="#ea267b" d="M447 344h4v4h-4z"/>
<path fill="#ea2676" d="M451 344h4v4h-4z"/>
<path fill="#ea2673" d="M455 344h4v4h-4z"/>
<path fill="#ea266f" d="M459 344h4v4h-4z"/>
<path fill="#ea266b" d="M463 344h4v4h-4z"/>
<path fill="#ea2669" d="M467 344h4v4h-4z"/>
<path fill="#ea2666" d="M471 344h4v4h-4z"/>
<path fill="#ea2664" d="M475 344h4v4h-4z"/>
<path fill="#0186cf" d="M319 348h4v4h-4z"/>
<path fill="#0083cf" d="M323 348h4v4h-4z"/>
<path fill="#0081ce" d="M327 348h4v4h-4z"/>
<path fill="#007ece" d="M331 348h4v4h-4z"/>
<path fill="#007ccd" d="M335 348h4v4h-4z"/>
<path fill="#007bcc" d="M339 348h4v4h-4z"/>
<path fill="#0077ca" d="M343 348h4v4h-4z"/>
<path fill="#006fc4" d="M347 348h4v4h-4z"/>
<path fill="#0265bd" d="M351 348h4v4h-4z"/>
<path fill="#135db7" d="M355 348h4v4h-4z"/>
<path fill="#2e5bb3" d="M359 348h4v4h-4z"/>
<path fill="#4b5cb1" d="M363 348h4v4h-4z"/>
<path fill="#6b5bb0" d="M367 348h4v4h-4z"/>
<path fill="#885caf" d="M371 348h4v4h-4z"/>
<path fill="#9e5cb0" d="M375 348h4v4h-4z"/>
<path fill="#b35cb3" d="M379 348h4v4h-4z"/>
<path fill="#c45bb2" d="M383 348h4v4h-4z"/>
<path fill="#d45ab0" d="M387 348h4v4h-4z"/>
<path fill="#de56ac" d="M391 348h4v4h-4z"/>
<path fill="#e651a8" d="M395 348h4v4h-4z"/>
<path fill="#e748a1" d="M399 348h4v4h-4z"/>
<path fill="#e9419c" d="M403 348h4v4h-4z"/>
<path fill="#e83b97" d="M407 348h4v4h-4z"/>
<path fill="#e83895" d="M411 348h4v4h-4z"/>
<path fill="#e83392" d="M415 348h4v4h-4z"/>
<path fill="#e82e8f" d="M419 348h4v4h-4z"/>
<path fill="#e9308f" d="M423 348h4v4h-4z"/>
<path fill="#e92e8c" d="M427 348h4v4h-4z"/>
<path fill="#e92988" d="M431 348h4v4h-4z"/>
<path fill="#e92784" d="M435 348h4v4h-4z"/>
<path fill="#e92782" d="M439 348h4v4h-4z"/>
<path fill="#e92680" d="M443 348h4v4h-4z"/>
<path fill="#e9267f" d="M447 348h4v4h-4z"/>
<path fill="#e9267c" d="M451 348h4v4h-4z"/>
<path fill="#e92678" d="M455 348h4v4h-4z"/>
<path fill="#ea2675" d="M459 348h4v4h-4z"/>
<path fill="#ea2671" d="M463 348h4v4h-4z"/>
<path fill="#ea266e" d="M467 348h4v4h-4z"/>
<path fill="#0181cc" d="M319 352h4v4h-4z"/>
<path fill="#007ecc" d="M323 352h4v4h-4z"/>
<path fill="#007ccc" d="M327 352h4v4h-4z"/>
<path fill="#007acb" d="M331 352h4v4h-4z"/>
<path fill="#0078ca" d="M335 352h4v4h-4z"/>
<path fill="#0076c9" d="M339 352h4v4h-4z"/>
<path fill="#0070c5" d="M343 352h4v4h-4z"/>
<path fill="#0168be" d="M347 352h4v4h-4z"/>
<path fill="#065bb6" d="M351 352h4v4h-4z"/>
<path fill="#1a54b0" d="M355 352h4v4h-4z"/>
<path fill="#3655ae" d="M359 352h4v4h-4z"/>
<path fill="#5355ad" d="M363 352h4v4h-4z"/>
<path fill="#7053a9" d="M367 352h4v4h-4z"/>
<path fill="#8757aa" d="M371 352h4v4h-4z"/>
<path fill="#9d57ac" d="M375 352h4v4h-4z"/>
<path fill="#b157b0" d="M379 352h4v4h-4z"/>
<path fill="#c256af" d="M383 352h4v4h-4z"/>
<path fill="#d355ad" d="M387 352h4v4h-4z"/>
<path fill="#dd51aa" d="M391 352h4v4h-4z"/>
<path fill="#e54da5" d="M395 352h4v4h-4z"/>
<path fill="#e6449f" d="M399 352h4v4h-4z"/>
<path fill="#e83f9a" d="M403 352h4v4h-4z"/>
<path fill="#e83997" d="M407 352h4v4h-4z"/>
<path fill="#e83694" d="M411 352h4v4h-4z"/>
<path fill="#e83091" d="M415 352h4v4h-4z"/>
<path fill="#e83091" d="M419 352h4v4h-4z"/>
<path fill="#e83291" d="M423 352h4v4h-4z"/>
<path fill="#e9308e" d="M427 352h4v4h-4z"/>
<path fill="#e92b8a" d="M431 352h4v4h-4z"/>
<path fill="#e92888" d="M435 352h4v4h-4z"/>
<path fill="#e92785" d="M439 352h4v4h-4z"/>
<path fill="#e92784" d="M443 352h4v4h-4z"/>
<path fill="#e92783" d="M447 352h4v4h-4z"/>
<path fill="#e92681" d="M451 352h4v4h-4z"/>
<path fill="#e9267e" d="M455 352h4v4h-4z"/>
<path fill="#e9277a" d="M459 352h4v4h-4z"/>
<path fill="#e92777" d="M463 352h4v4h-4z"/>
<path fill="#027cca" d="M319 356h4v4h-4z"/>
<path fill="#017aca" d="M323 356h4v4h-4z"/>
<path fill="#0078c9" d="M327 356h4v4h-4z"/>
<path fill="#0076c8" d="M331 356h4v4h-4z"/>
<path fill="#0074c7" d="M335 356h4v4h-4z"/>
<path fill="#0071c5" d="M339 356h4v4h-4z"/>
<path fill="#006ac0" d="M343 356h4v4h-4z"/>
<path fill="#0361b9" d="M347 356h4v4h-4z"/>
<path fill="#0952af" d="M351 356h4v4h-4z"/>
<path fill="#214daa" d="M355 356h4v4h-4z"/>
<path fill="#3e50a9" d="M359 356h4v4h-4z"/>
<path fill="#5b4ea7" d="M363 356h4v4h-4z"/>
<path fill="#744fa5" d="M367 356h4v4h-4z"/>
<path fill="#8851a6" d="M371 356h4v4h-4z"/>
<path fill="#9c51a9" d="M375 356h4v4h-4z"/>
<path fill="#b051ac" d="M379 356h4v4h-4z"/>
<path fill="#c151ab" d="M383 356h4v4h-4z"/>
<path fill="#d150aa" d="M387 356h4v4h-4z"/>
<path fill="#db4ca7" d="M391 356h4v4h-4z"/>
<path fill="#e449a3" d="M395 356h4v4h-4z"/>
<path fill="#e6419d" d="M399 356h4v4h-4z"/>
<path fill="#e83d9a" d="M403 356h4v4h-4z"/>
<path fill="#e83896" d="M407 356h4v4h-4z"/>
<path fill="#e73594" d="M411 356h4v4h-4z"/>
<path fill="#e72f91" d="M415 356h4v4h-4z"/>
<path fill="#e83292" d="M419 356h4v4h-4z"/>
<path fill="#e83493" d="M423 356h4v4h-4z"/>
<path fill="#e83190" d="M427 356h4v4h-4z"/>
<path fill="#e82d8d" d="M431 356h4v4h-4z"/>
<path fill="#e8298b" d="M435 356h4v4h-4z"/>
<path fill="#e82889" d="M439 356h4v4h-4z"/>
<path fill="#e82888" d="M443 356h4v4h-4z"/>
<path fill="#e82886" d="M447 356h4v4h-4z"/>
<path fill="#e82785" d="M451 356h4v4h-4z"/>
<path fill="#e82783" d="M455 356h4v4h-4z"/>
<path fill="#0278c7" d="M319 360h4v4h-4z"/>
<path fill="#0176c6" d="M323 360h4v4h-4z"/>
<path fill="#0074c6" d="M327 360h4v4h-4z"/>
<path fill="#0072c5" d="M331 360h4v4h-4z"/>
<path fill="#0070c4" d="M335 360h4v4h-4z"/>
<path fill="#006bc1" d="M339 360h4v4h-4z"/>
<path fill="#0065bc" d="M343 360h4v4h-4z"/>
<path fill="#055ab4" d="M347 360h4v4h-4z"/>
<path fill="#0d4aaa" d="M351 360h4v4h-4z"/>
<path fill="#2849a6" d="M355 360h4v4h-4z"/>
<path fill="#464aa5" d="M359 360h4v4h-4z"/>
<path fill="#6247a1" d="M363 360h4v4h-4z"/>
<path fill="#794ba1" d="M367 360h4v4h-4z"/>
<path fill="#8b4ca3" d="M371 360h4v4h-4z"/>
<path fill="#9d4ca6" d="M375 360h4v4h-4z"/>
<path fill="#ae4da8" d="M379 360h4v4h-4z"/>
<path fill="#bf4ca8" d="M383 360h4v4h-4z"/>
<path fill="#cf4ca8" d="M387 360h4v4h-4z"/>
<path fill="#da49a5" d="M391 360h4v4h-4z"/>
<path fill="#e347a2" d="M395 360h4v4h-4z"/>
<path fill="#e53f9c" d="M399 360h4v4h-4z"/>
<path fill="#e73b99" d="M403 360h4v4h-4z"/>
<path fill="#e73796" d="M407 360h4v4h-4z"/>
<path fill="#e73394" d="M411 360h4v4h-4z"/>
<path fill="#e72e91" d="M415 360h4v4h-4z"/>
<path fill="#e83594" d="M419 360h4v4h-4z"/>
<path fill="#e83695" d="M423 360h4v4h-4z"/>
<path fill="#e83392" d="M427 360h4v4h-4z"/>
<path fill="#e82e8f" d="M431 360h4v4h-4z"/>
<path fill="#e82b8e" d="M435 360h4v4h-4z"/>
<path fill="#e82a8d" d="M439 360h4v4h-4z"/>
<path fill="#e8298b" d="M443 360h4v4h-4z"/>
<path fill="#e8298a" d="M447 360h4v4h-4z"/>
<path fill="#0272c3" d="M323 364h4v4h-4z"/>
<path fill="#0070c2" d="M327 364h4v4h-4z"/>
<path fill="#006fc2" d="M331 364h4v4h-4z"/>
<path fill="#006ac0" d="M335 364h4v4h-4z"/>
<path fill="#0066bd" d="M339 364h4v4h-4z"/>
<path fill="#015fb8" d="M343 364h4v4h-4z"/>
<path fill="#0854b0" d="M347 364h4v4h-4z"/>
<path fill="#1245a5" d="M351 364h4v4h-4z"/>
<path fill="#2f45a2" d="M355 364h4v4h-4z"/>
<path fill="#4e44a0" d="M359 364h4v4h-4z"/>
<path fill="#68429c" d="M363 364h4v4h-4z"/>
<path fill="#7d479e" d="M367 364h4v4h-4z"/>
<path fill="#8f48a1" d="M371 364h4v4h-4z"/>
<path fill="#9e48a4" d="M375 364h4v4h-4z"/>
<path fill="#ae49a5" d="M379 364h4v4h-4z"/>
<path fill="#be4aa6" d="M383 364h4v4h-4z"/>
<path fill="#ce4aa6" d="M387 364h4v4h-4z"/>
<path fill="#d948a4" d="M391 364h4v4h-4z"/>
<path fill="#e246a2" d="M395 364h4v4h-4z"/>
<path fill="#e43f9d" d="M399 364h4v4h-4z"/>
<path fill="#e63b99" d="M403 364h4v4h-4z"/>
<path fill="#e73796" d="M407 364h4v4h-4z"/>
<path fill="#e63394" d="M411 364h4v4h-4z"/>
<path fill="#e63294" d="M415 364h4v4h-4z"/>
<path fill="#e73696" d="M419 364h4v4h-4z"/>
<path fill="#e73796" d="M423 364h4v4h-4z"/>
<path fill="#e73494" d="M427 364h4v4h-4z"/>
<path fill="#e73092" d="M431 364h4v4h-4z"/>
<path fill="#e72e90" d="M435 364h4v4h-4z"/>
<path fill="#e72c90" d="M439 364h4v4h-4z"/>
<path fill="#e72b8f" d="M443 364h4v4h-4z"/>
<path fill="#026fc0" d="M323 368h4v4h-4z"/>
<path fill="#006dbf" d="M327 368h4v4h-4z"/>
<path fill="#0069bd" d="M331 368h4v4h-4z"/>
<path fill="#0065bb" d="M335 368h4v4h-4z"/>
<path fill="#0060b8" d="M339 368h4v4h-4z"/>
<path fill="#0458b2" d="M343 368h4v4h-4z"/>
<path fill="#0b4daa" d="M347 368h4v4h-4z"/>
<path fill="#1741a1" d="M351 368h4v4h-4z"/>
<path fill="#35409f" d="M355 368h4v4h-4z"/>
<path fill="#543f9b" d="M359 368h4v4h-4z"/>
<path fill="#6d4099" d="M363 368h4v4h-4z"/>
<path fill="#81449c" d="M367 368h4v4h-4z"/>
<path fill="#92459f" d="M371 368h4v4h-4z"/>
<path fill="#9f46a3" d="M375 368h4v4h-4z"/>
<path fill="#ae47a3" d="M379 368h4v4h-4z"/>
<path fill="#be48a5" d="M383 368h4v4h-4z"/>
<path fill="#cd49a5" d="M387 368h4v4h-4z"/>
<path fill="#d749a5" d="M391 368h4v4h-4z"/>
<path fill="#e048a3" d="M395 368h4v4h-4z"/>
<path fill="#e2429e" d="M399 368h4v4h-4z"/>
<path fill="#e53d9a" d="M403 368h4v4h-4z"/>
<path fill="#e53998" d="M407 368h4v4h-4z"/>
<path fill="#e53394" d="M411 368h4v4h-4z"/>
<path fill="#e63797" d="M415 368h4v4h-4z"/>
<path fill="#e73997" d="M419 368h4v4h-4z"/>
<path fill="#e73998" d="M423 368h4v4h-4z"/>
<path fill="#e73796" d="M427 368h4v4h-4z"/>
<path fill="#e73395" d="M431 368h4v4h-4z"/>
<path fill="#e73193" d="M435 368h4v4h-4z"/>
<path fill="#036bbd" d="M323 372h4v4h-4z"/>
<path fill="#0368bb" d="M327 372h4v4h-4z"/>
<path fill="#0264b8" d="M331 372h4v4h-4z"/>
<path fill="#025fb6" d="M335 372h4v4h-4z"/>
<path fill="#0359b2" d="M339 372h4v4h-4z"/>
<path fill="#0750ac" d="M343 372h4v4h-4z"/>
<path fill="#0f47a5" d="M347 372h4v4h-4z"/>
<path fill="#1e3e9e" d="M351 372h4v4h-4z"/>
<path fill="#3c3c9c" d="M355 372h4v4h-4z"/>
<path fill="#5a3a97" d="M359 372h4v4h-4z"/>
<path fill="#723f98" d="M363 372h4v4h-4z"/>
<path fill="#84419b" d="M367 372h4v4h-4z"/>
<path fill="#94439f" d="M371 372h4v4h-4z"/>
<path fill="#a245a3" d="M375 372h4v4h-4z"/>
<path fill="#af46a3" d="M379 372h4v4h-4z"/>
<path fill="#be49a4" d="M383 372h4v4h-4z"/>
<path fill="#cb4aa5" d="M387 372h4v4h-4z"/>
<path fill="#d64ba5" d="M391 372h4v4h-4z"/>
<path fill="#de4ba5" d="M395 372h4v4h-4z"/>
<path fill="#e146a1" d="M399 372h4v4h-4z"/>
<path fill="#e3429e" d="M403 372h4v4h-4z"/>
<path fill="#e43d9b" d="M407 372h4v4h-4z"/>
<path fill="#e43a99" d="M411 372h4v4h-4z"/>
<path fill="#e53c9a" d="M415 372h4v4h-4z"/>
<path fill="#e63d9a" d="M419 372h4v4h-4z"/>
<path fill="#e63c9a" d="M423 372h4v4h-4z"/>
<path fill="#e63a99" d="M427 372h4v4h-4z"/>
<path fill="#e63797" d="M431 372h4v4h-4z"/>
<path fill="#0563b6" d="M327 376h4v4h-4z"/>
<path fill="#055fb3" d="M331 376h4v4h-4z"/>
<path fill="#0559b0" d="M335 376h4v4h-4z"/>
<path fill="#0752ac" d="M339 376h4v4h-4z"/>
<path fill="#0a49a6" d="M343 376h4v4h-4z"/>
<path fill="#1442a1" d="M347 376h4v4h-4z"/>
<path fill="#263c9c" d="M351 376h4v4h-4z"/>
<path fill="#403697" d="M355 376h4v4h-4z"/>
<path fill="#5e3895" d="M359 376h4v4h-4z"/>
<path fill="#743e97" d="M363 376h4v4h-4z"/>
<path fill="#87409a" d="M367 376h4v4h-4z"/>
<path fill="#96429f" d="M371 376h4v4h-4z"/>
<path fill="#a444a3" d="M375 376h4v4h-4z"/>
<path fill="#b046a3" d="M379 376h4v4h-4z"/>
<path fill="#bf4aa5" d="M383 376h4v4h-4z"/>
<path fill="#ca4ca6" d="M387 376h4v4h-4z"/>
<path fill="#d44ea7" d="M391 376h4v4h-4z"/>
<path fill="#dc4fa7" d="M395 376h4v4h-4z"/>
<path fill="#df4ca4" d="M399 376h4v4h-4z"/>
<path fill="#e148a2" d="M403 376h4v4h-4z"/>
<path fill="#e3429f" d="M407 376h4v4h-4z"/>
<path fill="#e3429e" d="M411 376h4v4h-4z"/>
<path fill="#e4439e" d="M415 376h4v4h-4z"/>
<path fill="#e5419d" d="M419 376h4v4h-4z"/>
<path fill="#e53f9c" d="M423 376h4v4h-4z"/>
<path fill="#085eb2" d="M327 380h4v4h-4z"/>
<path fill="#085aaf" d="M331 380h4v4h-4z"/>
<path fill="#0a53ab" d="M335 380h4v4h-4z"/>
<path fill="#0b4ba6" d="M339 380h4v4h-4z"/>
<path fill="#0f44a1" d="M343 380h4v4h-4z"/>
<path fill="#193e9c" d="M347 380h4v4h-4z"/>
<path fill="#2f3a9a" d="M351 380h4v4h-4z"/>
<path fill="#4a3796" d="M355 380h4v4h-4z"/>
<path fill="#623794" d="M359 380h4v4h-4z"/>
<path fill="#773c96" d="M363 380h4v4h-4z"/>
<path fill="#893f9a" d="M367 380h4v4h-4z"/>
<path fill="#98419f" d="M371 380h4v4h-4z"/>
<path fill="#a544a2" d="M375 380h4v4h-4z"/>
<path fill="#b147a3" d="M379 380h4v4h-4z"/>
<path fill="#bf4ba5" d="M383 380h4v4h-4z"/>
<path fill="#c94ea7" d="M387 380h4v4h-4z"/>
<path fill="#d250a8" d="M391 380h4v4h-4z"/>
<path fill="#da53a9" d="M395 380h4v4h-4z"/>
<path fill="#dd50a7" d="M399 380h4v4h-4z"/>
<path fill="#df4da5" d="M403 380h4v4h-4z"/>
<path fill="#e24ca5" d="M407 380h4v4h-4z"/>
<path fill="#e34aa3" d="M411 380h4v4h-4z"/>
<path fill="#e349a2" d="M415 380h4v4h-4z"/>
<path fill="#0b5aae" d="M327 384h4v4h-4z"/>
<path fill="#0d54aa" d="M331 384h4v4h-4z"/>
<path fill="#0e4ca6" d="M335 384h4v4h-4z"/>
<path fill="#1045a1" d="M339 384h4v4h-4z"/>
<path fill="#143f9d" d="M343 384h4v4h-4z"/>
<path fill="#213b9a" d="M347 384h4v4h-4z"/>
<path fill="#383998" d="M351 384h4v4h-4z"/>
<path fill="#543794" d="M355 384h4v4h-4z"/>
<path fill="#673793" d="M359 384h4v4h-4z"/>
<path fill="#793a96" d="M363 384h4v4h-4z"/>
<path fill="#8a3d9a" d="M367 384h4v4h-4z"/>
<path fill="#9940a0" d="M371 384h4v4h-4z"/>
<path fill="#a543a2" d="M375 384h4v4h-4z"/>
<path fill="#b147a4" d="M379 384h4v4h-4z"/>
<path fill="#be4ca6" d="M383 384h4v4h-4z"/>
<path fill="#c84fa8" d="M387 384h4v4h-4z"/>
<path fill="#d153a9" d="M391 384h4v4h-4z"/>
<path fill="#d855ab" d="M395 384h4v4h-4z"/>
<path fill="#db54aa" d="M399 384h4v4h-4z"/>
<path fill="#de55aa" d="M403 384h4v4h-4z"/>
<path fill="#e154a9" d="M407 384h4v4h-4z"/>
<path fill="#e252a7" d="M411 384h4v4h-4z"/>
<path fill="#114ea6" d="M331 388h4v4h-4z"/>
<path fill="#1447a2" d="M335 388h4v4h-4z"/>
<path fill="#16409d" d="M339 388h4v4h-4z"/>
<path fill="#1c3c99" d="M343 388h4v4h-4z"/>
<path fill="#2b3998" d="M347 388h4v4h-4z"/>
<path fill="#423895" d="M351 388h4v4h-4z"/>
<path fill="#5a3894" d="M355 388h4v4h-4z"/>
<path fill="#6b3993" d="M359 388h4v4h-4z"/>
<path fill="#7d3a97" d="M363 388h4v4h-4z"/>
<path fill="#8d3e9c" d="M367 388h4v4h-4z"/>
<path fill="#9b43a2" d="M371 388h4v4h-4z"/>
<path fill="#a646a4" d="M375 388h4v4h-4z"/>
<path fill="#b24ba6" d="M379 388h4v4h-4z"/>
<path fill="#bf51a8" d="M383 388h4v4h-4z"/>
<path fill="#c753aa" d="M387 388h4v4h-4z"/>
<path fill="#d056ab" d="M391 388h4v4h-4z"/>
<path fill="#d759ad" d="M395 388h4v4h-4z"/>
<path fill="#da5aad" d="M399 388h4v4h-4z"/>
<path fill="#dd5aad" d="M403 388h4v4h-4z"/>
<path fill="#1649a3" d="M331 392h4v4h-4z"/>
<path fill="#19419e" d="M335 392h4v4h-4z"/>
<path fill="#1e3d9b" d="M339 392h4v4h-4z"/>
<path fill="#273a98" d="M343 392h4v4h-4z"/>
<path fill="#363796" d="M347 392h4v4h-4z"/>
<path fill="#4d3794" d="M351 392h4v4h-4z"/>
<path fill="#5f3893" d="M355 392h4v4h-4z"/>
<path fill="#6f3994" d="M359 392h4v4h-4z"/>
<path fill="#803c98" d="M363 392h4v4h-4z"/>
<path fill="#8f429e" d="M367 392h4v4h-4z"/>
<path fill="#9d47a4" d="M371 392h4v4h-4z"/>
<path fill="#a84ba6" d="M375 392h4v4h-4z"/>
<path fill="#b351a8" d="M379 392h4v4h-4z"/>
<path fill="#bf56ab" d="M383 392h4v4h-4z"/>
<path fill="#c758ac" d="M387 392h4v4h-4z"/>
<path fill="#cf5bae" d="M391 392h4v4h-4z"/>
<path fill="#d65eaf" d="M395 392h4v4h-4z"/>
<path fill="#d95eb0" d="M399 392h4v4h-4z"/>
<path fill="#1a449f" d="M331 396h4v4h-4z"/>
<path fill="#1f3e9b" d="M335 396h4v4h-4z"/>
<path fill="#253a98" d="M339 396h4v4h-4z"/>
<path fill="#313897" d="M343 396h4v4h-4z"/>
<path fill="#423795" d="M347 396h4v4h-4z"/>
<path fill="#563692" d="M351 396h4v4h-4z"/>
<path fill="#653892" d="M355 396h4v4h-4z"/>
<path fill="#733a94" d="M359 396h4v4h-4z"/>
<path fill="#833f9a" d="M363 396h4v4h-4z"/>
<path fill="#9145a0" d="M367 396h4v4h-4z"/>
<path fill="#9e4aa6" d="M371 396h4v4h-4z"/>
<path fill="#a84fa8" d="M375 396h4v4h-4z"/>
<path fill="#b455aa" d="M379 396h4v4h-4z"/>
<path fill="#bf5aad" d="M383 396h4v4h-4z"/>
<path fill="#c65cae" d="M387 396h4v4h-4z"/>
<path fill="#ce5fb0" d="M391 396h4v4h-4z"/>
<path fill="#243c99" d="M335 400h4v4h-4z"/>
<path fill="#2d3997" d="M339 400h4v4h-4z"/>
<path fill="#3a3796" d="M343 400h4v4h-4z"/>
<path fill="#4c3693" d="M347 400h4v4h-4z"/>
<path fill="#5b3792" d="M351 400h4v4h-4z"/>
<path fill="#683891" d="M355 400h4v4h-4z"/>
<path fill="#763b95" d="M359 400h4v4h-4z"/>
<path fill="#84419b" d="M363 400h4v4h-4z"/>
<path fill="#9348a2" d="M367 400h4v4h-4z"/>
<path fill="#9e4ea7" d="M371 400h4v4h-4z"/>
<path fill="#a953a9" d="M375 400h4v4h-4z"/>
<path fill="#b458ac" d="M379 400h4v4h-4z"/>
<path fill="#be5dae" d="M383 400h4v4h-4z"/>
<path fill="#293a97" d="M335 404h4v4h-4z"/>
<path fill="#353896" d="M339 404h4v4h-4z"/>
<path fill="#433795" d="M343 404h4v4h-4z"/>
<path fill="#543692" d="M347 404h4v4h-4z"/>
<path fill="#5f3891" d="M351 404h4v4h-4z"/>
<path fill="#6a3992" d="M355 404h4v4h-4z"/>
<path fill="#783d96" d="M359 404h4v4h-4z"/>
<path fill="#86439d" d="M363 404h4v4h-4z"/>
<path fill="#944ba4" d="M367 404h4v4h-4z"/>
<path fill="#9f50a8" d="M371 404h4v4h-4z"/>
<path fill="#a956aa" d="M375 404h4v4h-4z"/>
<path fill="#b55bad" d="M379 404h4v4h-4z"/>
<path fill="#3c3796" d="M339 408h4v4h-4z"/>
<path fill="#4b3794" d="M343 408h4v4h-4z"/>
<path fill="#583792" d="M347 408h4v4h-4z"/>
<path fill="#623991" d="M351 408h4v4h-4z"/>
<path fill="#6c3b93" d="M355 408h4v4h-4z"/>
<path fill="#7a3f98" d="M359 408h4v4h-4z"/>
<path fill="#87469f" d="M363 408h4v4h-4z"/>
<path fill="#954ea6" d="M367 408h4v4h-4z"/>
<path fill="#a053a9" d="M371 408h4v4h-4z"/>
<path fill="#523792" d="M343 412h4v4h-4z"/>
<path fill="#5c3991" d="M347 412h4v4h-4z"/>
<path fill="#643a91" d="M351 412h4v4h-4z"/>
<path fill="#6f3d94" d="M355 412h4v4h-4z"/>
<path fill="#7c429a" d="M359 412h4v4h-4z"/>
<path fill="#8949a1" d="M363 412h4v4h-4z"/>
<path fill="#9650a7" d="M367 412h4v4h-4z"/>
</g></g>
<path d="M307.00 64.50 V406.90 M335.44 64.50 V406.90 M363.89 64.50 V406.90 M392.33 64.50 V406.90 M420.78 64.50 V406.90 M449.22 64.50 V406.90 M477.67 64.50 V406.90 M506.11 64.50 V406.90 M534.56 64.50 V406.90 M562.50 64.50 V406.90 M306.50 406.40 H563.00 M306.50 368.47 H563.00 M306.50 330.53 H563.00 M306.50 292.60 H563.00 M306.50 254.67 H563.00 M306.50 216.73 H563.00 M306.50 178.80 H563.00 M306.50 140.87 H563.00 M306.50 102.93 H563.00 M306.50 65.00 H563.00" stroke="#fff" stroke-opacity=".5" stroke-width="1" fill="none"/>
<g font-family="'Liberation Sans',sans-serif" font-size="8" fill="#fff" stroke="#fff" stroke-width=".25">
<text x="303.3" y="409.3" text-anchor="end" textLength="9.4" lengthAdjust="spacingAndGlyphs">0.0</text>
<text x="303.3" y="371.4" text-anchor="end" textLength="9.4" lengthAdjust="spacingAndGlyphs">0.1</text>
<text x="303.3" y="333.4" text-anchor="end" textLength="9.4" lengthAdjust="spacingAndGlyphs">0.2</text>
<text x="303.3" y="295.5" text-anchor="end" textLength="9.4" lengthAdjust="spacingAndGlyphs">0.3</text>
<text x="303.3" y="257.6" text-anchor="end" textLength="9.4" lengthAdjust="spacingAndGlyphs">0.4</text>
<text x="303.3" y="219.6" text-anchor="end" textLength="9.4" lengthAdjust="spacingAndGlyphs">0.5</text>
<text x="303.3" y="181.7" text-anchor="end" textLength="9.4" lengthAdjust="spacingAndGlyphs">0.6</text>
<text x="303.3" y="143.8" text-anchor="end" textLength="9.4" lengthAdjust="spacingAndGlyphs">0.7</text>
<text x="303.3" y="105.8" text-anchor="end" textLength="9.4" lengthAdjust="spacingAndGlyphs">0.8</text>
<text x="303.3" y="67.9" text-anchor="end" textLength="9.4" lengthAdjust="spacingAndGlyphs">0.9</text>
<text x="306.7" y="418.2" text-anchor="middle" textLength="9.4" lengthAdjust="spacingAndGlyphs">0.0</text>
<text x="335.1" y="418.2" text-anchor="middle" textLength="9.4" lengthAdjust="spacingAndGlyphs">0.1</text>
<text x="363.6" y="418.2" text-anchor="middle" textLength="9.4" lengthAdjust="spacingAndGlyphs">0.2</text>
<text x="392.0" y="418.2" text-anchor="middle" textLength="9.4" lengthAdjust="spacingAndGlyphs">0.3</text>
<text x="420.5" y="418.2" text-anchor="middle" textLength="9.4" lengthAdjust="spacingAndGlyphs">0.4</text>
<text x="448.9" y="418.2" text-anchor="middle" textLength="9.4" lengthAdjust="spacingAndGlyphs">0.5</text>
<text x="477.4" y="418.2" text-anchor="middle" textLength="9.4" lengthAdjust="spacingAndGlyphs">0.6</text>
<text x="505.8" y="418.2" text-anchor="middle" textLength="9.4" lengthAdjust="spacingAndGlyphs">0.7</text>
<text x="534.3" y="418.2" text-anchor="middle" textLength="9.4" lengthAdjust="spacingAndGlyphs">0.8</text>
<text x="562.7" y="418.2" text-anchor="middle" textLength="9.4" lengthAdjust="spacingAndGlyphs">0.9</text>
<text x="299.2" y="51.8" textLength="3.9" lengthAdjust="spacingAndGlyphs">y</text>
<text x="574.2" y="408.2" textLength="3.9" lengthAdjust="spacingAndGlyphs">x</text>
</g>
<g font-family="'Liberation Sans',sans-serif" font-size="8" fill="#0c60b2" stroke="#0c60b2" stroke-width=".2">
<text x="320.7" y="82.2" textLength="11.6" lengthAdjust="spacingAndGlyphs">520</text>
<text x="373.7" y="113.5" textLength="11.6" lengthAdjust="spacingAndGlyphs">540</text>
<text x="408.0" y="162.2" textLength="11.6" lengthAdjust="spacingAndGlyphs">560</text>
<text x="454.9" y="215.6" textLength="11.6" lengthAdjust="spacingAndGlyphs">580</text>
<text x="491.5" y="262.5" textLength="11.6" lengthAdjust="spacingAndGlyphs">600</text>
<text x="508.5" y="284.9" textLength="11.6" lengthAdjust="spacingAndGlyphs">620</text>
<text x="521.3" y="301.3" textLength="11.6" lengthAdjust="spacingAndGlyphs">700</text>
<text x="293.7" y="205.0" textLength="11.6" lengthAdjust="spacingAndGlyphs">500</text>
<text x="308.5" y="302.5" textLength="11.6" lengthAdjust="spacingAndGlyphs">490</text>
<text x="314.1" y="361.6" textLength="11.6" lengthAdjust="spacingAndGlyphs">480</text>
<text x="322.8" y="390.6" textLength="11.6" lengthAdjust="spacingAndGlyphs">470</text>
<text x="336.3" y="405.3" textLength="11.6" lengthAdjust="spacingAndGlyphs">460</text>
<text x="345.0" y="414.7" textLength="11.6" lengthAdjust="spacingAndGlyphs">380</text>
</g>
<path d="M327.3 85.3 L327.3 89.6 M373.9 115.0 L371.9 118.8 M414.6 165.3 L412.7 168.7 M454.4 217.8 L452.2 221.2 M487.8 260.8 L485.4 264.6 M507.2 284.8 L504.3 288.6 M520.2 302.8 L517.4 306.6 M305.8 201.2 L309.2 200.4 M317.8 294.7 L320.2 293.4 M329.4 356.6 L332.2 355.2 M339.4 385.6 L342.0 383.0 M345.0 398.0 L347.6 394.4 M355.4 408.2 L357.0 404.8" stroke="#0c60b2" stroke-width="1" fill="none"/>
<g stroke="#f00" stroke-width="1" fill="none"><circle cx="396" cy="283" r="3.7" stroke-width=".95"/><path d="M395.5 279.5V286.5M392.5 282.5H399.5"/></g>
</svg>
<div class="btn" style="left:335px"></div><div class="btn" style="left:466px"></div>
<svg width="30" height="100" viewBox="860 28 30 100" style="position:absolute;left:860px;top:28px">
<rect x="865" y="32" width="10" height="10" fill="#fff"/>
<g stroke="#000" stroke-width="1" fill="none"><circle cx="870" cy="37" r="3.5"/><path d="M870 33.5V40.5M866.5 36.5H873.5"/></g>
<rect x="865" y="57" width="10" height="10" fill="#fff"/>
<g stroke="#f00" stroke-width="1" fill="none"><circle cx="870" cy="62" r="3.5"/><path d="M870 58.5V65.5M866.5 61.5H873.5"/></g>
<circle cx="874.1" cy="86.1" r="6.1" fill="#222" stroke="#f2f2f2" stroke-width="2"/>
<circle cx="874.1" cy="86.1" r="3.2" fill="#e6e6e6"/>
<circle cx="874.1" cy="108.9" r="6.1" fill="#222" stroke="#f2f2f2" stroke-width="2"/>
</svg>
<div class="t tb b" style="left:413.2px;top:449.0px;letter-spacing:0.473px">Target</div>
<div class="t tb b" style="left:546.8px;top:449.0px;letter-spacing:0.166px">Achieved</div>
<div class="t tb b" style="left:277.4px;top:471.0px;letter-spacing:-0.193px">White Point:</div>
<div class="t tb" style="left:413.0px;top:471.0px;letter-spacing:-0.112px">CCT: CIE Illuminant D65K</div>
<div class="t tb" style="left:547.0px;top:471.0px;letter-spacing:0.010px">CCT: 6499K</div>
<div class="t tb" style="left:413.0px;top:490.0px;letter-spacing:0.094px">x: 0.313, y: 0.329</div>
<div class="t tb" style="left:547.0px;top:490.0px;letter-spacing:0.071px">x: 0.313, y: 0.329</div>
<div class="t tb b" style="left:277.4px;top:509.0px;letter-spacing:-0.084px">Black Luminance:</div>
<div class="t tb" style="left:413.0px;top:509.0px;letter-spacing:-0.349px">Native</div>
<div class="t tb" style="left:547.0px;top:509.0px;letter-spacing:-0.194px">0.139 cd/m²</div>
<div class="t tb b" style="left:277.4px;top:528.0px;letter-spacing:-0.086px">Luminance:</div>
<div class="t tb" style="left:413.5px;top:528.0px;letter-spacing:-0.350px">120 cd/m²</div>
<div class="t tb" style="left:547.5px;top:528.0px;letter-spacing:-0.325px">112 cd/m²</div>
<div class="t sg" style="left:880.2px;top:33.0px;letter-spacing:-0.094px">Target</div>
<div class="t sg" style="left:879.9px;top:58.0px;letter-spacing:-0.545px">Achieved</div>
<div class="t sg" style="left:888.4px;top:81.0px;letter-spacing:0.400px">xy</div>
<div class="t sg" style="left:888.4px;top:105.0px;letter-spacing:-0.082px">u'v'</div>
<div class="t tb" style="left:368.3px;top:578.0px;letter-spacing:-0.116px">Save Profile</div>
<div class="t tb" style="left:489.4px;top:578.0px;letter-spacing:-0.240px">Compare profile</div>
<div class="a lb"></div><div class="a rb"></div>
</body></html>
